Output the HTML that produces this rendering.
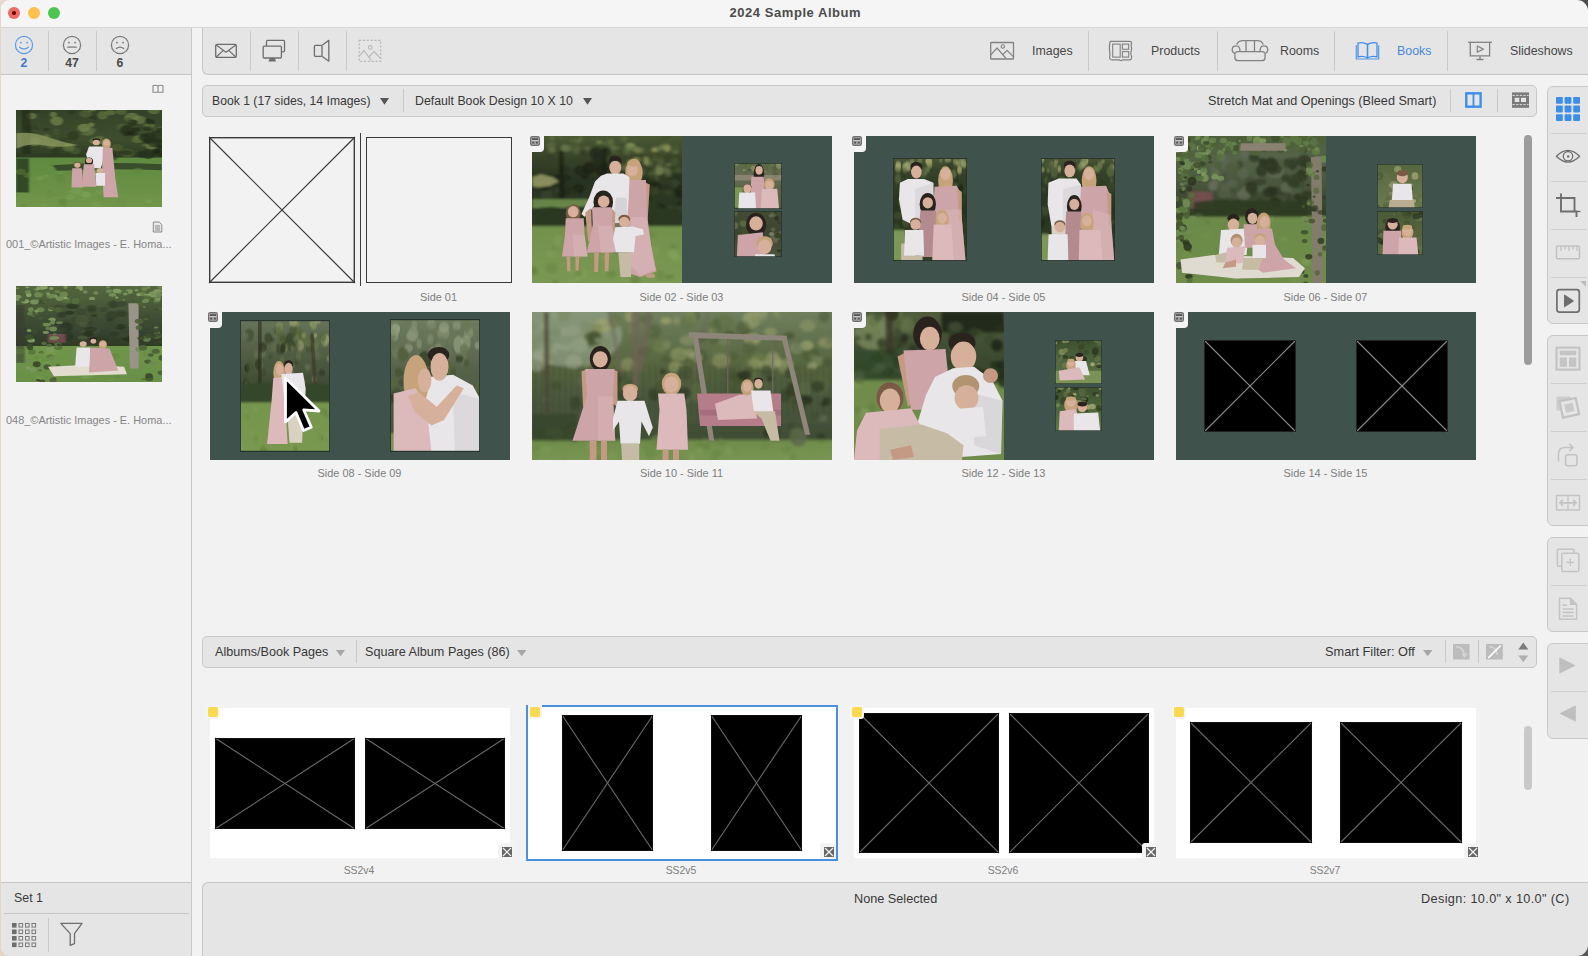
<!DOCTYPE html>
<html><head><meta charset="utf-8">
<style>
*{box-sizing:border-box}
html,body{margin:0;padding:0}
body{width:1588px;height:956px;position:relative;overflow:hidden;background:#f2f2f2;font-family:"Liberation Sans",sans-serif;color:#4a4a4a}
.a{position:absolute}
.t{position:absolute;white-space:nowrap;line-height:1}
.sep{position:absolute;width:1px;background:#c9c9c9}
.hs{position:absolute;height:1px;background:#cfcfcf}
svg{position:absolute;overflow:visible}
</style></head><body>
<!-- title bar -->
<div class="a" style="left:0;top:0;width:1588px;height:27px;background:#f5f5f5"></div>
<div class="a" style="left:0;top:27px;width:1588px;height:1px;background:#d6d6d6"></div>
<div class="a" style="left:7.7px;top:6.6px;width:12.4px;height:12.4px;border-radius:50%;background:#ee6a66"></div>
<div class="a" style="left:12.2px;top:11px;width:3.6px;height:3.6px;border-radius:50%;background:#6b0a05"></div>
<div class="a" style="left:27.8px;top:6.6px;width:12.4px;height:12.4px;border-radius:50%;background:#fcc14e"></div>
<div class="a" style="left:47.8px;top:6.6px;width:12.4px;height:12.4px;border-radius:50%;background:#4cc553"></div>
<div class="t" style="left:729.5px;top:6px;font-size:13px;letter-spacing:0.55px;font-weight:bold;color:#4b4b4b">2024 Sample Album</div>

<!-- left panel -->
<div class="a" style="left:0;top:28px;width:191px;height:47px;background:#e5e5e5;border-bottom:1px solid #c6c6c6"></div>
<div class="a" style="left:191px;top:28px;width:1px;height:928px;background:#c8c8c8"></div>
<div class="sep" style="left:48px;top:31px;height:40px"></div>
<div class="sep" style="left:96px;top:31px;height:40px"></div>

<div class="a" style="left:0;top:882px;width:191px;height:74px;background:#e5e5e5;border-top:1px solid #c6c6c6;border-bottom-left-radius:10px"></div>
<div class="hs" style="left:4px;top:913px;width:185px;background:#c6c6c6"></div>
<div class="sep" style="left:48px;top:918px;height:34px"></div>
<div class="t" style="left:14px;top:892px;font-size:12.4px;color:#383838">Set 1</div>

<!-- main toolbar -->
<div class="a" style="left:202px;top:28px;width:1386px;height:47px;background:#e5e5e5;border-left:1px solid #c6c6c6;border-bottom:1px solid #c6c6c6;border-bottom-left-radius:6px"></div>
<div class="sep" style="left:250px;top:31px;height:40px"></div>
<div class="sep" style="left:298px;top:31px;height:40px"></div>
<div class="sep" style="left:346px;top:31px;height:40px"></div>
<div class="sep" style="left:1088px;top:31px;height:40px"></div>
<div class="sep" style="left:1217px;top:31px;height:40px"></div>
<div class="sep" style="left:1334px;top:31px;height:40px"></div>
<div class="sep" style="left:1447px;top:31px;height:40px"></div>
<div class="t" style="left:1032px;top:45px;font-size:12.4px;color:#474747">Images</div>
<div class="t" style="left:1151px;top:45px;font-size:12.4px;color:#474747">Products</div>
<div class="t" style="left:1280px;top:45px;font-size:12.4px;color:#474747">Rooms</div>
<div class="t" style="left:1397px;top:45px;font-size:12.4px;color:#4a88d6">Books</div>
<div class="t" style="left:1510px;top:45px;font-size:12.4px;color:#474747">Slideshows</div>

<!-- second bar -->
<div class="a" style="left:202px;top:85px;width:1335px;height:32px;background:#e5e5e5;border:1px solid #c8c8c8;border-radius:5px"></div>
<div class="sep" style="left:403px;top:89px;height:23px"></div>
<div class="sep" style="left:1450px;top:89px;height:23px"></div>
<div class="sep" style="left:1497px;top:89px;height:23px"></div>
<div class="t" style="left:212px;top:95px;font-size:12.2px;color:#383838">Book 1 (17 sides, 14 Images)</div>
<div class="t" style="left:415px;top:95px;font-size:12.3px;color:#383838">Default Book Design 10 X 10</div>
<div class="t" style="left:1208px;top:95px;font-size:12.65px;color:#383838">Stretch Mat and Openings (Bleed Smart)</div>

<!-- section bar 2 -->
<div class="a" style="left:202px;top:636px;width:1335px;height:32px;background:#e5e5e5;border:1px solid #c8c8c8;border-radius:5px"></div>
<div class="sep" style="left:356px;top:640px;height:23px"></div>
<div class="sep" style="left:1445px;top:640px;height:23px"></div>
<div class="sep" style="left:1478px;top:640px;height:23px"></div>
<div class="t" style="left:215px;top:646px;font-size:12.6px;color:#383838">Albums/Book Pages</div>
<div class="t" style="left:365px;top:646px;font-size:12.65px;color:#383838">Square Album Pages (86)</div>
<div class="t" style="left:1325px;top:646px;font-size:12.75px;color:#383838">Smart Filter: Off</div>

<!-- status bar -->
<div class="a" style="left:202px;top:882px;width:1386px;height:74px;background:#e5e5e5;border-left:1px solid #c6c6c6;border-top:1px solid #c6c6c6;border-top-left-radius:6px"></div>
<div class="t" style="left:854px;top:893px;font-size:12.7px;color:#383838">None Selected</div>
<div class="t" style="left:1421px;top:893px;font-size:12.7px;letter-spacing:0.36px;color:#383838">Design: 10.0" x 10.0" (C)</div>

<!-- right panel groups -->
<div class="a" style="left:1547px;top:86px;width:50px;height:238px;background:#e5e5e5;border:1px solid #c8c8c8;border-radius:6px"></div>
<div class="a" style="left:1547px;top:335px;width:50px;height:191px;background:#e5e5e5;border:1px solid #c8c8c8;border-radius:6px"></div>
<div class="a" style="left:1547px;top:537px;width:50px;height:95px;background:#e5e5e5;border:1px solid #c8c8c8;border-radius:6px"></div>
<div class="a" style="left:1547px;top:643px;width:50px;height:96px;background:#e5e5e5;border:1px solid #c8c8c8;border-radius:6px"></div>
<div class="hs" style="left:1551px;top:133px;width:36px"></div>
<div class="hs" style="left:1551px;top:181px;width:36px"></div>
<div class="hs" style="left:1551px;top:229px;width:36px"></div>
<div class="hs" style="left:1551px;top:277px;width:36px"></div>
<div class="hs" style="left:1551px;top:383px;width:36px"></div>
<div class="hs" style="left:1551px;top:431px;width:36px"></div>
<div class="hs" style="left:1551px;top:479px;width:36px"></div>
<div class="hs" style="left:1551px;top:585px;width:36px"></div>
<div class="hs" style="left:1551px;top:691px;width:36px"></div>

<!-- scrollbars -->
<div class="a" style="left:1524px;top:135px;width:8px;height:230px;border-radius:4px;background:#9c9c9c"></div>
<div class="a" style="left:1524px;top:726px;width:8px;height:64px;border-radius:4px;background:#c9c9c9"></div>

<svg style="left:209px;top:137px" width="146" height="146" viewBox="0 0 146 146"><rect x="0" y="0" width="146" height="146" fill="none"/><line x1="0" y1="0" x2="146" y2="146" stroke="#3a3a3a" stroke-width="1.2"/><line x1="146" y1="0" x2="0" y2="146" stroke="#3a3a3a" stroke-width="1.2"/><rect x="0.7" y="0.7" width="144.6" height="144.6" fill="none" stroke="#3a3a3a" stroke-width="1.4"/></svg>
<div class="a" style="left:360px;top:133px;width:1.2px;height:153px;background:#3c3c3c"></div>
<div class="a" style="left:366px;top:137px;width:146px;height:146px;border:1.4px solid #3a3a3a"></div>
<div class="t" style="left:338.5px;top:292px;width:200px;text-align:center;font-size:10.95px;color:#7e7e7e">Side 01</div>
<div class="a" style="left:532px;top:136px;width:300px;height:147px;background:#3f524c"></div>
<svg style="left:532px;top:136px;overflow:hidden" width="150" height="147" viewBox="0 0 100 100" preserveAspectRatio="none"><defs><filter id="p2" x="-5%" y="-5%" width="110%" height="110%"><feGaussianBlur stdDeviation="0.9"/></filter><filter id="p3" x="-5%" y="-5%" width="110%" height="110%"><feGaussianBlur stdDeviation="0.35"/></filter></defs><rect x="0" y="0" width="100" height="100" fill="url(#p1)"/><g filter="url(#p2)"><defs><linearGradient id="p1" x1="0" y1="0" x2="0" y2="1"><stop offset="0" stop-color="#4a5834"/><stop offset="0.12" stop-color="#3a4629"/><stop offset="0.3" stop-color="#283120"/><stop offset="0.45" stop-color="#2a3521"/><stop offset="0.5" stop-color="#2d3b25"/><stop offset="0.6" stop-color="#33412a"/><stop offset="0.62" stop-color="#73914d"/><stop offset="1" stop-color="#7a9852"/></linearGradient></defs><rect x="0" y="0" width="100" height="100" fill="url(#p1)"/><ellipse cx="22.1" cy="8.5" rx="3.0" ry="2.3" fill="#66754a" opacity="0.8"/><ellipse cx="52.5" cy="3.8" rx="1.9" ry="1.7" fill="#6f7e4c" opacity="0.66"/><ellipse cx="64.7" cy="7.7" rx="2.9" ry="2.2" fill="#6f7e4c" opacity="0.59"/><ellipse cx="95.1" cy="9.0" rx="1.6" ry="1.0" fill="#44532f" opacity="0.5"/><ellipse cx="89.3" cy="6.9" rx="3.4" ry="3.6" fill="#44532f" opacity="0.59"/><ellipse cx="49.4" cy="5.0" rx="2.0" ry="1.5" fill="#56663d" opacity="0.8"/><ellipse cx="95.7" cy="9.3" rx="2.3" ry="2.7" fill="#8a9a5a" opacity="0.54"/><ellipse cx="66.6" cy="7.2" rx="2.1" ry="2.2" fill="#8a9a5a" opacity="0.89"/><ellipse cx="55.1" cy="9.7" rx="2.5" ry="2.9" fill="#56663d" opacity="0.62"/><ellipse cx="62.9" cy="8.8" rx="3.2" ry="2.9" fill="#44532f" opacity="0.84"/><ellipse cx="53.2" cy="7.4" rx="2.3" ry="2.3" fill="#5f6f45" opacity="0.72"/><ellipse cx="73.3" cy="6.7" rx="2.2" ry="1.9" fill="#44532f" opacity="0.54"/><ellipse cx="24.7" cy="8.4" rx="2.2" ry="2.3" fill="#66754a" opacity="0.52"/><ellipse cx="73.3" cy="9.8" rx="2.7" ry="2.2" fill="#56663d" opacity="0.57"/><ellipse cx="30.4" cy="0.1" rx="1.9" ry="2.2" fill="#44532f" opacity="0.59"/><ellipse cx="56.2" cy="9.5" rx="2.7" ry="2.3" fill="#5f6f45" opacity="0.76"/><ellipse cx="64.8" cy="7.3" rx="2.3" ry="2.5" fill="#8a9a5a" opacity="0.7"/><ellipse cx="21.6" cy="7.8" rx="1.9" ry="2.2" fill="#66754a" opacity="0.85"/><ellipse cx="61.3" cy="2.0" rx="2.5" ry="2.2" fill="#5f6f45" opacity="0.67"/><ellipse cx="10.1" cy="5.4" rx="3.1" ry="2.5" fill="#44532f" opacity="0.51"/><ellipse cx="30.7" cy="1.8" rx="2.7" ry="3.0" fill="#6f7e4c" opacity="0.72"/><ellipse cx="86.6" cy="9.3" rx="1.6" ry="1.8" fill="#4a5a35" opacity="0.53"/><ellipse cx="11.5" cy="0.1" rx="3.0" ry="2.3" fill="#4a5a35" opacity="0.82"/><ellipse cx="26.6" cy="2.9" rx="1.8" ry="1.4" fill="#56663d" opacity="0.76"/><ellipse cx="68.3" cy="2.9" rx="2.9" ry="2.6" fill="#4a5a35" opacity="0.51"/><ellipse cx="44.8" cy="4.2" rx="1.9" ry="1.2" fill="#8a9a5a" opacity="0.7"/><ellipse cx="28.8" cy="6.1" rx="3.1" ry="1.9" fill="#4a5a35" opacity="0.66"/><ellipse cx="13.2" cy="9.6" rx="2.4" ry="2.2" fill="#66754a" opacity="0.72"/><ellipse cx="29.9" cy="9.8" rx="3.1" ry="2.8" fill="#56663d" opacity="0.71"/><ellipse cx="12.8" cy="6.7" rx="3.1" ry="3.1" fill="#66754a" opacity="0.52"/><ellipse cx="36.9" cy="9.7" rx="3.3" ry="2.5" fill="#6f7e4c" opacity="0.53"/><ellipse cx="92.5" cy="3.0" rx="1.8" ry="1.7" fill="#56663d" opacity="0.5"/><ellipse cx="89.1" cy="0.4" rx="3.1" ry="3.7" fill="#44532f" opacity="0.68"/><ellipse cx="84.5" cy="8.7" rx="3.1" ry="3.0" fill="#4a5a35" opacity="0.65"/><ellipse cx="41.2" cy="2.1" rx="2.8" ry="2.4" fill="#56663d" opacity="0.7"/><ellipse cx="94.4" cy="3.9" rx="2.5" ry="1.5" fill="#44532f" opacity="0.85"/><ellipse cx="91.0" cy="0.2" rx="1.9" ry="1.5" fill="#44532f" opacity="0.81"/><ellipse cx="40.5" cy="2.1" rx="2.8" ry="3.1" fill="#44532f" opacity="0.64"/><ellipse cx="89.4" cy="6.9" rx="2.5" ry="2.9" fill="#56663d" opacity="0.53"/><ellipse cx="13.6" cy="1.3" rx="1.8" ry="1.7" fill="#5f6f45" opacity="0.8"/><ellipse cx="64.0" cy="8.4" rx="2.2" ry="1.8" fill="#5f6f45" opacity="0.59"/><ellipse cx="95.0" cy="7.8" rx="2.9" ry="2.6" fill="#44532f" opacity="0.72"/><ellipse cx="19.4" cy="0.4" rx="1.6" ry="1.8" fill="#6f7e4c" opacity="0.56"/><ellipse cx="21.3" cy="1.1" rx="2.7" ry="3.1" fill="#4a5a35" opacity="0.73"/><ellipse cx="30.1" cy="0.8" rx="2.0" ry="2.3" fill="#44532f" opacity="0.71"/><ellipse cx="90.7" cy="26.1" rx="2.5" ry="1.9" fill="#5f6f45" opacity="0.56"/><ellipse cx="81.4" cy="29.2" rx="3.0" ry="2.4" fill="#5f6f45" opacity="0.61"/><ellipse cx="91.1" cy="24.1" rx="2.3" ry="2.1" fill="#5f6f45" opacity="0.58"/><ellipse cx="79.9" cy="25.7" rx="2.0" ry="2.2" fill="#5f6f45" opacity="0.84"/><ellipse cx="70.1" cy="10.0" rx="3.1" ry="3.4" fill="#3a4629" opacity="0.78"/><ellipse cx="89.0" cy="23.4" rx="3.1" ry="2.0" fill="#5f6f45" opacity="0.74"/><ellipse cx="64.0" cy="22.4" rx="2.2" ry="2.6" fill="#46552f" opacity="0.71"/><ellipse cx="84.0" cy="23.4" rx="3.1" ry="3.7" fill="#5f6f45" opacity="0.75"/><ellipse cx="66.0" cy="17.5" rx="2.2" ry="1.5" fill="#9aa060" opacity="0.85"/><ellipse cx="78.6" cy="10.6" rx="2.8" ry="2.2" fill="#46552f" opacity="0.65"/><ellipse cx="65.0" cy="21.1" rx="3.2" ry="3.6" fill="#9aa060" opacity="0.51"/><ellipse cx="90.0" cy="8.4" rx="2.2" ry="2.5" fill="#9aa060" opacity="0.75"/><ellipse cx="71.9" cy="19.6" rx="2.1" ry="2.1" fill="#3a4629" opacity="0.52"/><ellipse cx="74.0" cy="24.4" rx="2.3" ry="2.7" fill="#46552f" opacity="0.82"/><ellipse cx="59.0" cy="21.3" rx="3.2" ry="2.8" fill="#3a4629" opacity="0.82"/><ellipse cx="78.3" cy="18.4" rx="2.9" ry="2.5" fill="#5f6f45" opacity="0.58"/><ellipse cx="85.6" cy="17.9" rx="2.9" ry="3.5" fill="#5f6f45" opacity="0.51"/><ellipse cx="60.6" cy="21.0" rx="2.2" ry="1.7" fill="#3a4629" opacity="0.63"/><ellipse cx="78.3" cy="29.6" rx="3.4" ry="2.9" fill="#3a4629" opacity="0.61"/><ellipse cx="76.4" cy="18.5" rx="1.8" ry="1.5" fill="#7d8a58" opacity="0.75"/><ellipse cx="76.0" cy="16.1" rx="1.8" ry="2.1" fill="#9aa060" opacity="0.65"/><ellipse cx="82.1" cy="15.0" rx="2.3" ry="2.1" fill="#46552f" opacity="0.87"/><ellipse cx="68.1" cy="8.1" rx="2.4" ry="1.5" fill="#5f6f45" opacity="0.74"/><ellipse cx="80.6" cy="23.0" rx="2.2" ry="2.7" fill="#3a4629" opacity="0.84"/><ellipse cx="57.8" cy="12.2" rx="3.4" ry="3.3" fill="#3a4629" opacity="0.82"/><ellipse cx="91.0" cy="19.5" rx="1.7" ry="1.2" fill="#7d8a58" opacity="0.64"/><ellipse cx="61.5" cy="21.8" rx="2.7" ry="1.9" fill="#5f6f45" opacity="0.79"/><ellipse cx="57.0" cy="18.5" rx="2.9" ry="1.9" fill="#5f6f45" opacity="0.78"/><ellipse cx="60.7" cy="26.3" rx="1.7" ry="1.6" fill="#7d8a58" opacity="0.86"/><ellipse cx="95.2" cy="17.9" rx="2.9" ry="3.1" fill="#46552f" opacity="0.83"/><ellipse cx="63.5" cy="28.6" rx="2.5" ry="2.1" fill="#9aa060" opacity="0.61"/><ellipse cx="87.1" cy="9.4" rx="3.1" ry="3.7" fill="#7d8a58" opacity="0.64"/><ellipse cx="56.5" cy="19.1" rx="2.1" ry="1.6" fill="#3a4629" opacity="0.67"/><ellipse cx="96.5" cy="8.7" rx="1.7" ry="1.8" fill="#46552f" opacity="0.71"/><ellipse cx="56.5" cy="11.8" rx="2.2" ry="1.4" fill="#46552f" opacity="0.78"/><ellipse cx="70.5" cy="9.7" rx="3.0" ry="2.0" fill="#9aa060" opacity="0.55"/><ellipse cx="88.4" cy="22.1" rx="1.8" ry="1.4" fill="#5f6f45" opacity="0.57"/><ellipse cx="86.9" cy="12.0" rx="3.0" ry="2.7" fill="#3a4629" opacity="0.82"/><ellipse cx="97.5" cy="23.3" rx="2.9" ry="2.0" fill="#46552f" opacity="0.8"/><ellipse cx="99.7" cy="20.3" rx="1.5" ry="1.6" fill="#3a4629" opacity="0.58"/><ellipse cx="69.6" cy="16.4" rx="2.4" ry="2.0" fill="#9aa060" opacity="0.72"/><ellipse cx="84.8" cy="23.8" rx="2.8" ry="3.0" fill="#7d8a58" opacity="0.61"/><ellipse cx="63.3" cy="11.3" rx="2.9" ry="2.0" fill="#5f6f45" opacity="0.52"/><ellipse cx="56.8" cy="24.7" rx="1.7" ry="1.8" fill="#5f6f45" opacity="0.77"/><ellipse cx="81.8" cy="9.3" rx="1.9" ry="1.6" fill="#9aa060" opacity="0.78"/><ellipse cx="18.5" cy="28.5" rx="3.1" ry="3.0" fill="#1c2316" opacity="0.81"/><ellipse cx="48.0" cy="26.0" rx="3.7" ry="2.6" fill="#34402a" opacity="0.79"/><ellipse cx="32.2" cy="23.5" rx="4.6" ry="3.4" fill="#232b1b" opacity="0.9"/><ellipse cx="31.0" cy="35.2" rx="4.0" ry="2.6" fill="#1c2316" opacity="0.71"/><ellipse cx="9.4" cy="39.4" rx="3.4" ry="3.5" fill="#34402a" opacity="0.85"/><ellipse cx="48.5" cy="23.4" rx="4.4" ry="3.8" fill="#232b1b" opacity="0.91"/><ellipse cx="12.3" cy="14.6" rx="2.7" ry="3.1" fill="#34402a" opacity="0.87"/><ellipse cx="45.6" cy="24.3" rx="4.5" ry="4.3" fill="#34402a" opacity="0.8"/><ellipse cx="47.8" cy="33.2" rx="4.8" ry="5.3" fill="#232b1b" opacity="0.84"/><ellipse cx="22.4" cy="28.4" rx="3.7" ry="2.5" fill="#232b1b" opacity="0.82"/><ellipse cx="51.5" cy="19.1" rx="2.4" ry="2.1" fill="#34402a" opacity="0.63"/><ellipse cx="43.2" cy="24.0" rx="2.5" ry="1.9" fill="#34402a" opacity="0.91"/><ellipse cx="9.9" cy="30.9" rx="2.1" ry="2.2" fill="#2a3320" opacity="0.79"/><ellipse cx="48.6" cy="19.5" rx="2.7" ry="1.7" fill="#1c2316" opacity="0.63"/><ellipse cx="34.4" cy="11.1" rx="2.6" ry="2.2" fill="#2a3320" opacity="0.65"/><ellipse cx="9.9" cy="39.5" rx="2.9" ry="3.5" fill="#34402a" opacity="0.73"/><ellipse cx="46.3" cy="23.1" rx="4.6" ry="4.6" fill="#1c2316" opacity="0.82"/><ellipse cx="49.4" cy="27.2" rx="3.3" ry="3.4" fill="#232b1b" opacity="0.93"/><ellipse cx="27.2" cy="18.8" rx="2.9" ry="2.3" fill="#34402a" opacity="0.95"/><ellipse cx="21.9" cy="22.8" rx="3.8" ry="2.6" fill="#2a3320" opacity="0.76"/><ellipse cx="37.9" cy="22.0" rx="4.1" ry="4.3" fill="#1c2316" opacity="0.81"/><ellipse cx="50.0" cy="10.7" rx="3.1" ry="3.0" fill="#2a3320" opacity="0.81"/><ellipse cx="22.1" cy="22.4" rx="2.9" ry="2.4" fill="#2a3320" opacity="0.71"/><ellipse cx="24.6" cy="36.3" rx="2.1" ry="2.0" fill="#232b1b" opacity="0.71"/><ellipse cx="17.8" cy="37.3" rx="2.7" ry="1.9" fill="#34402a" opacity="0.83"/><ellipse cx="12.3" cy="30.4" rx="4.8" ry="4.9" fill="#232b1b" opacity="0.75"/><ellipse cx="45.6" cy="15.8" rx="3.0" ry="3.0" fill="#34402a" opacity="0.69"/><ellipse cx="42.6" cy="11.2" rx="4.9" ry="3.8" fill="#232b1b" opacity="0.9"/><ellipse cx="23.0" cy="38.2" rx="2.3" ry="2.2" fill="#232b1b" opacity="0.75"/><ellipse cx="30.8" cy="38.9" rx="3.4" ry="3.3" fill="#2a3320" opacity="0.75"/><ellipse cx="26.0" cy="41.3" rx="2.5" ry="1.5" fill="#34402a" opacity="0.8"/><ellipse cx="51.4" cy="34.4" rx="2.1" ry="1.8" fill="#2a3320" opacity="0.79"/><ellipse cx="47.1" cy="39.3" rx="4.6" ry="5.4" fill="#1c2316" opacity="0.88"/><ellipse cx="10.0" cy="40.7" rx="4.1" ry="4.7" fill="#34402a" opacity="0.8"/><ellipse cx="8.6" cy="35.3" rx="2.5" ry="2.0" fill="#1c2316" opacity="0.78"/><ellipse cx="26.2" cy="41.9" rx="3.8" ry="3.1" fill="#2a3320" opacity="0.94"/><ellipse cx="31.8" cy="37.6" rx="2.2" ry="1.6" fill="#1c2316" opacity="0.79"/><ellipse cx="43.9" cy="15.8" rx="4.4" ry="5.0" fill="#232b1b" opacity="0.89"/><ellipse cx="8.3" cy="31.4" rx="4.6" ry="2.9" fill="#2a3320" opacity="0.69"/><ellipse cx="35.2" cy="27.7" rx="2.2" ry="1.7" fill="#1c2316" opacity="0.9"/><polygon points="18,10 21,10 22,44 18,44" fill="#1a1f14" opacity="0.8"/><polygon points="47,8 50,8 50,30 47,30" fill="#1a1f14" opacity="0.7"/><ellipse cx="69.4" cy="29.1" rx="3.2" ry="2.2" fill="#26301d" opacity="0.61"/><ellipse cx="82.0" cy="34.7" rx="5.0" ry="3.2" fill="#1f2718" opacity="0.79"/><ellipse cx="71.1" cy="31.2" rx="2.3" ry="1.7" fill="#26301d" opacity="0.89"/><ellipse cx="92.3" cy="50.0" rx="2.6" ry="2.0" fill="#1e2618" opacity="0.9"/><ellipse cx="98.4" cy="51.5" rx="3.1" ry="3.5" fill="#36442a" opacity="0.84"/><ellipse cx="80.2" cy="31.3" rx="3.4" ry="2.2" fill="#1f2718" opacity="0.89"/><ellipse cx="60.3" cy="34.8" rx="4.1" ry="3.2" fill="#1f2718" opacity="0.67"/><ellipse cx="76.9" cy="34.6" rx="3.4" ry="2.5" fill="#36442a" opacity="0.88"/><ellipse cx="61.7" cy="27.4" rx="3.9" ry="3.0" fill="#1f2718" opacity="0.83"/><ellipse cx="88.0" cy="30.4" rx="4.0" ry="2.6" fill="#2f3b23" opacity="0.82"/><ellipse cx="77.6" cy="31.5" rx="3.3" ry="3.2" fill="#1e2618" opacity="0.8"/><ellipse cx="96.2" cy="29.0" rx="2.2" ry="1.6" fill="#1f2718" opacity="0.82"/><ellipse cx="69.5" cy="35.9" rx="2.5" ry="2.2" fill="#26301d" opacity="0.72"/><ellipse cx="63.3" cy="54.9" rx="2.9" ry="2.9" fill="#36442a" opacity="0.61"/><ellipse cx="71.6" cy="55.0" rx="4.3" ry="3.7" fill="#1f2718" opacity="0.84"/><ellipse cx="63.1" cy="44.5" rx="4.7" ry="3.6" fill="#36442a" opacity="0.73"/><ellipse cx="98.5" cy="35.9" rx="2.0" ry="1.3" fill="#2f3b23" opacity="0.73"/><ellipse cx="92.2" cy="55.9" rx="3.7" ry="3.2" fill="#2f3b23" opacity="0.75"/><ellipse cx="68.3" cy="27.8" rx="2.2" ry="1.5" fill="#1e2618" opacity="0.94"/><ellipse cx="84.3" cy="42.4" rx="3.7" ry="3.0" fill="#26301d" opacity="0.64"/><ellipse cx="81.2" cy="49.2" rx="3.2" ry="3.8" fill="#3d4b2f" opacity="0.67"/><ellipse cx="77.6" cy="40.8" rx="2.7" ry="2.3" fill="#1e2618" opacity="0.91"/><ellipse cx="93.2" cy="41.0" rx="2.1" ry="1.6" fill="#2f3b23" opacity="0.78"/><ellipse cx="90.9" cy="38.5" rx="2.8" ry="2.2" fill="#36442a" opacity="0.8"/><ellipse cx="99.6" cy="38.1" rx="4.7" ry="4.7" fill="#1e2618" opacity="0.86"/><ellipse cx="79.8" cy="28.8" rx="2.6" ry="3.0" fill="#2f3b23" opacity="0.72"/><ellipse cx="86.3" cy="50.0" rx="3.9" ry="4.3" fill="#1f2718" opacity="0.68"/><ellipse cx="92.1" cy="50.0" rx="3.0" ry="2.5" fill="#3d4b2f" opacity="0.63"/><ellipse cx="98.8" cy="54.9" rx="4.0" ry="2.5" fill="#1f2718" opacity="0.64"/><ellipse cx="98.7" cy="46.0" rx="2.2" ry="1.5" fill="#1e2618" opacity="0.76"/><ellipse cx="78.9" cy="38.1" rx="3.2" ry="3.4" fill="#2f3b23" opacity="0.92"/><ellipse cx="60.5" cy="52.3" rx="2.3" ry="2.5" fill="#3d4b2f" opacity="0.91"/><ellipse cx="82.0" cy="52.4" rx="2.6" ry="2.6" fill="#36442a" opacity="0.89"/><ellipse cx="82.5" cy="49.5" rx="4.7" ry="4.1" fill="#26301d" opacity="0.61"/><ellipse cx="83.8" cy="40.7" rx="4.6" ry="4.4" fill="#2f3b23" opacity="0.61"/><ellipse cx="63.2" cy="52.4" rx="4.7" ry="3.7" fill="#36442a" opacity="0.89"/><ellipse cx="63.4" cy="42.3" rx="3.1" ry="3.4" fill="#36442a" opacity="0.74"/><ellipse cx="90.3" cy="51.7" rx="3.2" ry="2.1" fill="#1f2718" opacity="0.88"/><ellipse cx="74.6" cy="56.0" rx="3.2" ry="3.3" fill="#3d4b2f" opacity="0.62"/><ellipse cx="95.3" cy="31.9" rx="2.9" ry="3.2" fill="#3d4b2f" opacity="0.64"/><ellipse cx="82.3" cy="37.1" rx="2.5" ry="2.5" fill="#36442a" opacity="0.77"/><ellipse cx="73.5" cy="42.3" rx="4.7" ry="4.8" fill="#26301d" opacity="0.83"/><ellipse cx="64.8" cy="29.3" rx="4.4" ry="4.2" fill="#1f2718" opacity="0.63"/><ellipse cx="69.8" cy="51.4" rx="3.1" ry="3.3" fill="#1e2618" opacity="0.6"/><ellipse cx="62.1" cy="53.2" rx="3.6" ry="4.2" fill="#1f2718" opacity="0.71"/><polygon points="0,28 6,26 14,28 18,31 12,34 4,35 0,34" fill="#a1a46c" opacity="0.8"/><rect x="0" y="43" width="38" height="6" fill="#6a8a4c" opacity="0.95"/><path d="M0 50 Q10 47 20 49 Q35 47 50 49 Q75 48 100 50 V61 H0 Z" fill="#2b3923" opacity="0.95"/><ellipse cx="62.3" cy="90.2" rx="3.5" ry="4.1" fill="#86a55c" opacity="0.66"/><ellipse cx="53.0" cy="93.9" rx="3.4" ry="2.6" fill="#6a8646" opacity="0.76"/><ellipse cx="11.3" cy="79.8" rx="2.1" ry="2.0" fill="#86a05d" opacity="0.5"/><ellipse cx="73.1" cy="77.5" rx="2.0" ry="2.2" fill="#647f42" opacity="0.46"/><ellipse cx="79.7" cy="67.3" rx="3.0" ry="2.1" fill="#6a8646" opacity="0.79"/><ellipse cx="0.5" cy="91.4" rx="3.9" ry="2.7" fill="#74904e" opacity="0.52"/><ellipse cx="96.1" cy="82.5" rx="3.2" ry="2.3" fill="#86a55c" opacity="0.48"/><ellipse cx="96.5" cy="76.6" rx="1.6" ry="1.3" fill="#74904e" opacity="0.51"/><ellipse cx="33.2" cy="93.1" rx="3.0" ry="2.8" fill="#86a55c" opacity="0.54"/><ellipse cx="31.0" cy="93.1" rx="2.7" ry="2.1" fill="#647f42" opacity="0.59"/><ellipse cx="17.6" cy="71.7" rx="3.8" ry="4.5" fill="#7f9a57" opacity="0.74"/><ellipse cx="1.8" cy="91.9" rx="2.4" ry="2.3" fill="#6a8646" opacity="0.58"/><ellipse cx="70.8" cy="85.7" rx="3.9" ry="2.6" fill="#74904e" opacity="0.77"/><ellipse cx="94.2" cy="75.1" rx="2.4" ry="2.2" fill="#647f42" opacity="0.44"/><ellipse cx="74.8" cy="92.3" rx="3.6" ry="2.3" fill="#6a8646" opacity="0.48"/><ellipse cx="51.3" cy="75.8" rx="1.9" ry="1.4" fill="#86a55c" opacity="0.62"/><ellipse cx="31.2" cy="74.0" rx="1.9" ry="1.3" fill="#74904e" opacity="0.69"/><ellipse cx="30.9" cy="80.4" rx="3.3" ry="2.1" fill="#86a05d" opacity="0.61"/><ellipse cx="40.6" cy="71.0" rx="3.0" ry="3.3" fill="#647f42" opacity="0.66"/><ellipse cx="14.6" cy="99.2" rx="3.1" ry="3.3" fill="#7f9a57" opacity="0.74"/><ellipse cx="13.1" cy="89.8" rx="3.9" ry="3.8" fill="#647f42" opacity="0.44"/><ellipse cx="43.5" cy="67.7" rx="3.6" ry="2.8" fill="#647f42" opacity="0.77"/><ellipse cx="62.0" cy="68.4" rx="2.8" ry="3.3" fill="#86a55c" opacity="0.69"/><ellipse cx="47.9" cy="73.1" rx="2.5" ry="1.7" fill="#647f42" opacity="0.73"/><ellipse cx="53.2" cy="68.8" rx="3.8" ry="4.3" fill="#74904e" opacity="0.44"/><ellipse cx="27.2" cy="91.7" rx="3.7" ry="3.0" fill="#7f9a57" opacity="0.68"/><ellipse cx="66.4" cy="90.9" rx="2.4" ry="2.5" fill="#7f9a57" opacity="0.73"/><ellipse cx="26.5" cy="99.3" rx="3.3" ry="3.9" fill="#7f9a57" opacity="0.66"/><ellipse cx="58.1" cy="62.4" rx="2.9" ry="2.2" fill="#86a55c" opacity="0.51"/><ellipse cx="28.9" cy="81.0" rx="3.2" ry="2.6" fill="#7f9a57" opacity="0.66"/><ellipse cx="73.8" cy="93.5" rx="2.4" ry="2.6" fill="#86a55c" opacity="0.58"/><ellipse cx="36.4" cy="74.7" rx="1.9" ry="2.2" fill="#74904e" opacity="0.73"/><ellipse cx="93.7" cy="80.1" rx="3.2" ry="3.3" fill="#86a55c" opacity="0.57"/><ellipse cx="61.7" cy="97.6" rx="2.8" ry="3.2" fill="#7f9a57" opacity="0.65"/><ellipse cx="77.5" cy="86.2" rx="3.3" ry="2.0" fill="#74904e" opacity="0.63"/><ellipse cx="62.4" cy="68.9" rx="3.4" ry="2.4" fill="#86a55c" opacity="0.42"/><ellipse cx="47.2" cy="70.6" rx="1.6" ry="1.1" fill="#7f9a57" opacity="0.79"/><ellipse cx="48.3" cy="82.8" rx="2.5" ry="2.1" fill="#86a55c" opacity="0.64"/><ellipse cx="59.0" cy="71.0" rx="3.8" ry="2.3" fill="#647f42" opacity="0.78"/><ellipse cx="85.6" cy="94.9" rx="3.2" ry="3.0" fill="#6a8646" opacity="0.62"/><ellipse cx="30.1" cy="73.2" rx="2.8" ry="3.3" fill="#7f9a57" opacity="0.78"/><ellipse cx="81.9" cy="77.9" rx="3.5" ry="3.5" fill="#7f9a57" opacity="0.59"/><ellipse cx="15.7" cy="76.5" rx="2.7" ry="1.9" fill="#74904e" opacity="0.64"/><ellipse cx="35.1" cy="96.0" rx="1.5" ry="1.0" fill="#86a05d" opacity="0.77"/><ellipse cx="53.9" cy="74.4" rx="3.7" ry="3.5" fill="#647f42" opacity="0.57"/><ellipse cx="22.6" cy="73.1" rx="3.9" ry="3.3" fill="#74904e" opacity="0.64"/><ellipse cx="26.0" cy="99.3" rx="2.7" ry="2.3" fill="#7f9a57" opacity="0.78"/><ellipse cx="30.7" cy="97.3" rx="1.9" ry="1.1" fill="#86a55c" opacity="0.65"/><ellipse cx="44.3" cy="73.1" rx="3.5" ry="3.8" fill="#6a8646" opacity="0.59"/><ellipse cx="56.0" cy="71.3" rx="2.7" ry="1.7" fill="#647f42" opacity="0.51"/><ellipse cx="15.5" cy="99.6" rx="2.2" ry="2.2" fill="#647f42" opacity="0.61"/><ellipse cx="86.3" cy="95.5" rx="3.7" ry="2.3" fill="#74904e" opacity="0.52"/><ellipse cx="53.3" cy="74.8" rx="2.2" ry="2.1" fill="#647f42" opacity="0.54"/><ellipse cx="68.2" cy="92.9" rx="1.8" ry="1.1" fill="#86a05d" opacity="0.58"/><ellipse cx="91.7" cy="95.7" rx="2.9" ry="1.7" fill="#647f42" opacity="0.64"/><ellipse cx="68.9" cy="98.2" rx="3.1" ry="3.5" fill="#647f42" opacity="0.59"/><ellipse cx="68.2" cy="89.3" rx="3.7" ry="3.3" fill="#6a8646" opacity="0.52"/><ellipse cx="0.3" cy="91.6" rx="3.0" ry="2.9" fill="#647f42" opacity="0.76"/><ellipse cx="14.3" cy="80.2" rx="2.9" ry="2.6" fill="#7f9a57" opacity="0.62"/><ellipse cx="42.6" cy="82.6" rx="1.6" ry="1.7" fill="#7f9a57" opacity="0.73"/></g><g filter="url(#p3)"><ellipse cx="68" cy="25" rx="5.8" ry="9.5" fill="#c7a37c" opacity="1"/><ellipse cx="67" cy="23" rx="3.5" ry="4.2" fill="#d6b09a" opacity="1"/><ellipse cx="67.5" cy="18.5" rx="3.8" ry="2.2" fill="#c7a37c" opacity="1"/><polygon points="74,31 78.5,33 77,59 73.5,60" fill="#c49a84" opacity="1"/><polygon points="62.5,30 76,30 76.5,52 79.5,75 83,92 72,96 64,93 63.5,52" fill="#cda4a7" opacity="1"/><polygon points="66,55 76,55 80,78 82,91 72,95 66,88" fill="#dcb9bb" opacity="0.55"/><ellipse cx="79" cy="95" rx="3" ry="1.5" fill="#c49a84" opacity="1"/><ellipse cx="55.5" cy="21.5" rx="4" ry="4.6" fill="#d6b09a" opacity="1"/><path d="M51 19 Q51 13 55.5 13.5 Q60 13.5 60 19 Q58 16.5 55.5 17 Q53 16.5 51 19 Z" fill="#2a211f" opacity="1"/><polygon points="46,27 50,25.5 61,25.5 65,28 64.5,42 63.5,59 54,59.5 50.5,41 45,42 39,51 35,55 33,53 38,42 42,31" fill="#e8e6e8" opacity="1"/><polygon points="56,42 63,42 63.5,59 54,59.5" fill="#c8c6ca" opacity="0.6"/><polygon points="53,59.5 61,59.5 60,80 54,80" fill="#7a7464" opacity="0.9"/><ellipse cx="47.5" cy="45" rx="6.5" ry="8" fill="#2a211f" opacity="1"/><ellipse cx="47.8" cy="44.5" rx="3.9" ry="4.1" fill="#d6b09a" opacity="1"/><polygon points="35.5,52 39.5,49 40,70 37.5,72" fill="#c49a84" opacity="1"/><polygon points="53,49 55.5,52 55,72 52,71" fill="#c49a84" opacity="1"/><polygon points="40,48.5 53,48.5 53.5,61 56.5,79 36.5,79.5 40.5,61" fill="#cda4a7" opacity="1"/><polygon points="44,61 53.5,61 56.5,79 46,79.5" fill="#dcb9bb" opacity="0.5"/><polygon points="41.5,79 44.5,79 44,92.5 41.5,92.5" fill="#c49a84" opacity="1"/><polygon points="48.5,79 51.5,79 51,92 48.5,92" fill="#c49a84" opacity="1"/><ellipse cx="27.5" cy="52.5" rx="5" ry="6" fill="#7a5a44" opacity="1"/><ellipse cx="27.5" cy="51.5" rx="3.6" ry="3.8" fill="#d6b09a" opacity="1"/><polygon points="22.5,56 34.5,56 35,67 37,82 20,82 22,67" fill="#cda4a7" opacity="1"/><polygon points="27,67 35,67 37,82 28,82" fill="#dcb9bb" opacity="0.5"/><polygon points="23,82 25.5,82 25.5,92 23.5,92" fill="#c49a84" opacity="1"/><polygon points="29,82 31.5,82 31,91.5 29,91.5" fill="#c49a84" opacity="1"/><ellipse cx="61.5" cy="56.5" rx="3.9" ry="3" fill="#7a5a44" opacity="1"/><ellipse cx="61.5" cy="58.5" rx="3.5" ry="3.6" fill="#d6b09a" opacity="1"/><polygon points="55.5,62 67,61.5 74,63.5 74.5,67 69,68 68,79 56,79 54,70" fill="#e8e6e8" opacity="1"/><polygon points="57.5,79 66.5,79 66,96 59,96" fill="#c6bba4" opacity="1"/></g></svg>
<svg style="left:734px;top:163px;overflow:hidden" width="48" height="46" viewBox="0 0 100 100" preserveAspectRatio="none"><defs><filter id="p5" x="-5%" y="-5%" width="110%" height="110%"><feGaussianBlur stdDeviation="1"/></filter><filter id="p6" x="-5%" y="-5%" width="110%" height="110%"><feGaussianBlur stdDeviation="0.5"/></filter></defs><rect x="0" y="0" width="100" height="100" fill="url(#p4)"/><g filter="url(#p5)"><defs><linearGradient id="p4" x1="0" y1="0" x2="0" y2="1"><stop offset="0" stop-color="#5a6848"/><stop offset="0.3" stop-color="#6a6d55"/><stop offset="0.5" stop-color="#5d654a"/><stop offset="1" stop-color="#55603f"/></linearGradient></defs><rect x="0" y="0" width="100" height="100" fill="url(#p4)"/><ellipse cx="45.2" cy="14.0" rx="6.7" ry="5.9" fill="#6f7e4c" opacity="0.84"/><ellipse cx="19.0" cy="20.1" rx="4.9" ry="4.7" fill="#5f6f45" opacity="0.54"/><ellipse cx="30.3" cy="2.3" rx="6.2" ry="6.3" fill="#4a5a35" opacity="0.74"/><ellipse cx="39.6" cy="11.3" rx="6.0" ry="5.9" fill="#98a070" opacity="0.51"/><ellipse cx="52.8" cy="1.5" rx="3.8" ry="2.8" fill="#4a5a35" opacity="0.81"/><ellipse cx="32.6" cy="14.8" rx="3.8" ry="2.8" fill="#44532f" opacity="0.7"/><ellipse cx="66.2" cy="11.4" rx="4.1" ry="4.9" fill="#56663d" opacity="0.78"/><ellipse cx="31.5" cy="5.7" rx="4.2" ry="2.7" fill="#56663d" opacity="0.66"/><ellipse cx="84.7" cy="9.7" rx="6.8" ry="7.6" fill="#4a5a35" opacity="0.59"/><ellipse cx="92.7" cy="1.3" rx="4.5" ry="4.6" fill="#8e9864" opacity="0.53"/><ellipse cx="62.9" cy="19.5" rx="4.1" ry="2.7" fill="#7d8a58" opacity="0.51"/><ellipse cx="41.0" cy="23.1" rx="3.5" ry="3.6" fill="#4a5a35" opacity="0.52"/><ellipse cx="79.7" cy="4.4" rx="5.2" ry="4.5" fill="#66754a" opacity="0.89"/><ellipse cx="77.0" cy="10.5" rx="4.5" ry="3.8" fill="#66754a" opacity="0.5"/><ellipse cx="86.4" cy="24.4" rx="5.4" ry="6.4" fill="#4a5a35" opacity="0.58"/><ellipse cx="39.4" cy="21.4" rx="5.6" ry="3.7" fill="#5f6f45" opacity="0.59"/><ellipse cx="25.8" cy="19.3" rx="4.3" ry="3.4" fill="#56663d" opacity="0.53"/><ellipse cx="20.9" cy="15.9" rx="3.1" ry="2.5" fill="#98a070" opacity="0.68"/><ellipse cx="95.9" cy="12.1" rx="5.3" ry="5.9" fill="#5f6f45" opacity="0.75"/><ellipse cx="31.1" cy="5.7" rx="5.4" ry="5.6" fill="#5f6f45" opacity="0.8"/><ellipse cx="94.0" cy="4.9" rx="6.8" ry="7.7" fill="#98a070" opacity="0.53"/><ellipse cx="4.7" cy="2.7" rx="5.0" ry="3.8" fill="#8e9864" opacity="0.6"/><ellipse cx="82.4" cy="14.9" rx="4.2" ry="2.9" fill="#56663d" opacity="0.55"/><ellipse cx="47.9" cy="16.3" rx="5.5" ry="3.5" fill="#66754a" opacity="0.87"/><ellipse cx="20.4" cy="0.4" rx="4.1" ry="3.5" fill="#4a5a35" opacity="0.52"/><rect x="0" y="26" width="100" height="12" fill="#a09580" opacity="0.6"/><rect x="0" y="53" width="18" height="44" fill="#7d9a58" opacity="0.9"/></g><g filter="url(#p6)"><ellipse cx="52" cy="24" rx="11" ry="22" fill="#2a211f" opacity="1"/><ellipse cx="52.3" cy="16" rx="7.5" ry="9.5" fill="#d6b09a" opacity="1"/><polygon points="36,30 62,30 64,60 63,100 34,100 35,60" fill="#cda4a7" opacity="1"/><ellipse cx="27.7" cy="52" rx="9" ry="6" fill="#7a5a44" opacity="1"/><ellipse cx="27.7" cy="56" rx="8" ry="9" fill="#d6b09a" opacity="1"/><polygon points="11,64 44,64 46,100 9,100" fill="#e8e6e8" opacity="1"/><ellipse cx="73.5" cy="46" rx="11" ry="13" fill="#c7a37c" opacity="1"/><ellipse cx="73.5" cy="48.5" rx="8" ry="9.5" fill="#d6b09a" opacity="1"/><polygon points="58,56 90,56 94,100 56,100" fill="#dcb9bb" opacity="1"/></g><rect x="0.5" y="0.5" width="99" height="99" fill="none" stroke="#26332c" stroke-width="2.2"/></svg>
<svg style="left:734px;top:211px;overflow:hidden" width="48" height="46" viewBox="0 0 100 100" preserveAspectRatio="none"><defs><filter id="p8" x="-5%" y="-5%" width="110%" height="110%"><feGaussianBlur stdDeviation="1"/></filter><filter id="p9" x="-5%" y="-5%" width="110%" height="110%"><feGaussianBlur stdDeviation="0.5"/></filter></defs><rect x="0" y="0" width="100" height="100" fill="url(#p7)"/><g filter="url(#p8)"><defs><linearGradient id="p7" x1="0" y1="0" x2="0" y2="1"><stop offset="0" stop-color="#434c34"/><stop offset="0.5" stop-color="#3b4430"/><stop offset="1" stop-color="#4d5540"/></linearGradient></defs><rect x="0" y="0" width="100" height="100" fill="url(#p7)"/><ellipse cx="47.5" cy="65.7" rx="6.3" ry="4.3" fill="#26301d" opacity="0.85"/><ellipse cx="48.3" cy="64.3" rx="5.3" ry="5.9" fill="#3d4b2f" opacity="0.65"/><ellipse cx="66.1" cy="14.5" rx="5.2" ry="3.6" fill="#3d4b2f" opacity="0.43"/><ellipse cx="81.9" cy="7.5" rx="6.4" ry="5.2" fill="#56663d" opacity="0.76"/><ellipse cx="8.7" cy="91.9" rx="7.1" ry="7.1" fill="#3d4b2f" opacity="0.44"/><ellipse cx="98.7" cy="94.7" rx="3.6" ry="3.0" fill="#36442a" opacity="0.64"/><ellipse cx="88.2" cy="55.8" rx="7.9" ry="8.9" fill="#66754a" opacity="0.48"/><ellipse cx="81.6" cy="40.1" rx="5.1" ry="4.9" fill="#5f6f45" opacity="0.67"/><ellipse cx="54.1" cy="64.1" rx="3.4" ry="2.4" fill="#8a8470" opacity="0.52"/><ellipse cx="94.1" cy="86.6" rx="4.9" ry="3.9" fill="#1f2718" opacity="0.51"/><ellipse cx="36.3" cy="51.1" rx="7.1" ry="6.3" fill="#26301d" opacity="0.57"/><ellipse cx="85.9" cy="3.3" rx="3.1" ry="3.1" fill="#26301d" opacity="0.57"/><ellipse cx="77.2" cy="10.3" rx="5.7" ry="4.1" fill="#77735f" opacity="0.52"/><ellipse cx="43.3" cy="49.8" rx="6.0" ry="6.2" fill="#66754a" opacity="0.61"/><ellipse cx="20.9" cy="28.2" rx="5.4" ry="6.3" fill="#5f6f45" opacity="0.51"/><ellipse cx="98.9" cy="46.5" rx="5.7" ry="4.1" fill="#77735f" opacity="0.5"/><ellipse cx="60.7" cy="94.8" rx="7.6" ry="8.2" fill="#36442a" opacity="0.51"/><ellipse cx="0.9" cy="4.0" rx="6.1" ry="7.3" fill="#66754a" opacity="0.63"/><ellipse cx="2.4" cy="32.2" rx="6.9" ry="7.6" fill="#8a8470" opacity="0.45"/><ellipse cx="78.4" cy="50.2" rx="5.4" ry="4.4" fill="#8a8470" opacity="0.83"/><ellipse cx="89.4" cy="16.2" rx="4.5" ry="5.0" fill="#1f2718" opacity="0.55"/><ellipse cx="86.2" cy="64.0" rx="5.2" ry="5.6" fill="#77735f" opacity="0.53"/><ellipse cx="25.5" cy="68.3" rx="6.5" ry="4.4" fill="#1f2718" opacity="0.59"/><ellipse cx="24.1" cy="43.5" rx="7.9" ry="7.4" fill="#44532f" opacity="0.72"/><ellipse cx="93.6" cy="25.8" rx="3.2" ry="2.7" fill="#2f3b23" opacity="0.81"/><ellipse cx="78.9" cy="58.0" rx="4.7" ry="3.9" fill="#77735f" opacity="0.57"/><ellipse cx="16.1" cy="68.9" rx="3.8" ry="2.3" fill="#26301d" opacity="0.8"/><ellipse cx="91.1" cy="53.5" rx="6.9" ry="5.7" fill="#2f3b23" opacity="0.72"/><ellipse cx="18.9" cy="27.1" rx="7.0" ry="7.0" fill="#5f6f45" opacity="0.68"/><ellipse cx="12.5" cy="53.4" rx="6.5" ry="5.4" fill="#3d4b2f" opacity="0.43"/></g><g filter="url(#p9)"><ellipse cx="46" cy="30" rx="21" ry="26" fill="#2a211f" opacity="1"/><ellipse cx="46" cy="27" rx="14" ry="15.5" fill="#d6b09a" opacity="1"/><polygon points="8,52 60,46 62,100 6,100" fill="#cda4a7" opacity="1"/><ellipse cx="64" cy="70" rx="17" ry="15" fill="#c7a37c" opacity="1"/><ellipse cx="64" cy="78" rx="14" ry="16" fill="#d6b09a" opacity="1"/><polygon points="44,94 84,94 86,100 44,100" fill="#e8e6e8" opacity="1"/></g><rect x="0.5" y="0.5" width="99" height="99" fill="none" stroke="#26332c" stroke-width="2.2"/></svg>
<div class="a" style="left:531px;top:135px;width:13px;height:17px;background:#f4f4f4;border-bottom-right-radius:4px"></div>
<svg style="left:530px;top:136px" width="10" height="10" viewBox="0 0 10 10"><rect x="0.6" y="0.6" width="8.8" height="8.8" rx="1.6" fill="#a9a9a9" stroke="#6f6f6f" stroke-width="1.2"/><rect x="2" y="2.2" width="6" height="1.8" fill="#555"/><rect x="1.4" y="4.4" width="7.2" height="0.6" fill="#ddd"/><rect x="2.2" y="5.6" width="2" height="2" fill="#555"/><rect x="5.8" y="5.6" width="2" height="2" fill="#555"/></svg>
<div class="t" style="left:581.5px;top:292px;width:200px;text-align:center;font-size:10.95px;color:#7e7e7e">Side 02 - Side 03</div>
<div class="a" style="left:854px;top:136px;width:300px;height:147px;background:#3f524c"></div>
<svg style="left:893px;top:158px;overflow:hidden" width="74" height="103" viewBox="0 0 100 100" preserveAspectRatio="none"><defs><filter id="p11" x="-5%" y="-5%" width="110%" height="110%"><feGaussianBlur stdDeviation="0.8"/></filter><filter id="p12" x="-5%" y="-5%" width="110%" height="110%"><feGaussianBlur stdDeviation="0.3"/></filter></defs><rect x="0" y="0" width="100" height="100" fill="url(#p10)"/><g filter="url(#p11)"><defs><linearGradient id="p10" x1="0" y1="0" x2="0" y2="1"><stop offset="0" stop-color="#4a5636"/><stop offset="0.12" stop-color="#36432a"/><stop offset="0.5" stop-color="#27321f"/><stop offset="1" stop-color="#35422b"/></linearGradient></defs><rect x="0" y="0" width="100" height="100" fill="url(#p10)"/><ellipse cx="16.5" cy="8.3" rx="3.9" ry="3.5" fill="#8e9864" opacity="0.9"/><ellipse cx="47.5" cy="11.6" rx="2.6" ry="2.3" fill="#7d8a58" opacity="0.51"/><ellipse cx="93.3" cy="5.1" rx="2.4" ry="2.6" fill="#8e9864" opacity="0.78"/><ellipse cx="43.7" cy="11.9" rx="4.3" ry="3.6" fill="#6f7e4c" opacity="0.51"/><ellipse cx="32.9" cy="6.0" rx="2.3" ry="2.7" fill="#a3a56f" opacity="0.51"/><ellipse cx="74.1" cy="1.1" rx="4.4" ry="2.7" fill="#8e9864" opacity="0.72"/><ellipse cx="34.3" cy="5.8" rx="2.6" ry="1.6" fill="#8e9864" opacity="0.53"/><ellipse cx="19.7" cy="8.1" rx="4.4" ry="4.4" fill="#98a070" opacity="0.9"/><ellipse cx="7.1" cy="6.7" rx="3.7" ry="3.1" fill="#a3a56f" opacity="0.87"/><ellipse cx="88.8" cy="4.9" rx="3.1" ry="2.7" fill="#6f7e4c" opacity="0.63"/><ellipse cx="48.4" cy="3.2" rx="4.5" ry="3.1" fill="#b0ad70" opacity="0.9"/><ellipse cx="49.6" cy="5.9" rx="3.7" ry="3.8" fill="#8e9864" opacity="0.73"/><ellipse cx="31.9" cy="11.8" rx="2.3" ry="2.3" fill="#b0ad70" opacity="0.64"/><ellipse cx="92.7" cy="4.2" rx="3.8" ry="3.0" fill="#7d8a58" opacity="0.57"/><ellipse cx="92.3" cy="2.1" rx="3.3" ry="2.3" fill="#7d8a58" opacity="0.77"/><ellipse cx="89.9" cy="11.5" rx="3.2" ry="3.8" fill="#b0ad70" opacity="0.74"/><ellipse cx="88.3" cy="5.9" rx="3.1" ry="2.3" fill="#8e9864" opacity="0.56"/><ellipse cx="6.9" cy="9.7" rx="4.3" ry="3.8" fill="#a3a56f" opacity="0.52"/><ellipse cx="25.8" cy="3.5" rx="3.3" ry="2.3" fill="#7d8a58" opacity="0.85"/><ellipse cx="64.5" cy="1.8" rx="2.5" ry="2.5" fill="#7d8a58" opacity="0.6"/><ellipse cx="95.9" cy="6.3" rx="4.2" ry="2.6" fill="#8e9864" opacity="0.86"/><ellipse cx="36.6" cy="1.8" rx="3.1" ry="3.3" fill="#6f7e4c" opacity="0.73"/><ellipse cx="84.9" cy="3.7" rx="3.6" ry="2.8" fill="#b0ad70" opacity="0.5"/><ellipse cx="68.5" cy="11.4" rx="2.1" ry="2.0" fill="#b0ad70" opacity="0.6"/><ellipse cx="95.6" cy="5.1" rx="4.0" ry="4.3" fill="#8e9864" opacity="0.55"/><ellipse cx="95.8" cy="17.4" rx="2.1" ry="2.5" fill="#36442a" opacity="0.78"/><ellipse cx="74.0" cy="66.9" rx="5.2" ry="3.3" fill="#1f2718" opacity="0.88"/><ellipse cx="31.9" cy="48.3" rx="5.7" ry="5.8" fill="#56663d" opacity="0.78"/><ellipse cx="4.8" cy="67.1" rx="4.4" ry="3.4" fill="#3d4b2f" opacity="0.57"/><ellipse cx="11.2" cy="43.6" rx="4.9" ry="5.8" fill="#44532f" opacity="0.52"/><ellipse cx="32.6" cy="30.4" rx="2.7" ry="2.3" fill="#66754a" opacity="0.56"/><ellipse cx="82.5" cy="52.7" rx="2.7" ry="1.7" fill="#66754a" opacity="0.86"/><ellipse cx="41.9" cy="24.9" rx="3.1" ry="3.5" fill="#56663d" opacity="0.76"/><ellipse cx="91.6" cy="28.6" rx="3.5" ry="3.3" fill="#1f2718" opacity="0.73"/><ellipse cx="56.1" cy="43.3" rx="5.0" ry="5.7" fill="#56663d" opacity="0.54"/><ellipse cx="99.6" cy="31.8" rx="3.7" ry="3.1" fill="#3d4b2f" opacity="0.7"/><ellipse cx="40.1" cy="14.5" rx="5.6" ry="3.9" fill="#66754a" opacity="0.65"/><ellipse cx="17.9" cy="69.0" rx="4.5" ry="3.9" fill="#2f3b23" opacity="0.71"/><ellipse cx="79.6" cy="51.4" rx="2.8" ry="2.9" fill="#26301d" opacity="0.58"/><ellipse cx="12.2" cy="17.9" rx="4.3" ry="2.7" fill="#2f3b23" opacity="0.7"/><ellipse cx="52.4" cy="47.2" rx="6.0" ry="6.2" fill="#5f6f45" opacity="0.69"/><ellipse cx="6.6" cy="55.8" rx="5.8" ry="3.9" fill="#44532f" opacity="0.6"/><ellipse cx="11.9" cy="20.5" rx="3.4" ry="2.2" fill="#2f3b23" opacity="0.57"/><ellipse cx="69.2" cy="37.1" rx="3.1" ry="1.9" fill="#3d4b2f" opacity="0.64"/><ellipse cx="11.8" cy="22.5" rx="3.0" ry="3.4" fill="#36442a" opacity="0.51"/><ellipse cx="75.3" cy="46.9" rx="4.5" ry="3.8" fill="#2f3b23" opacity="0.79"/><ellipse cx="92.5" cy="63.9" rx="2.2" ry="1.8" fill="#44532f" opacity="0.51"/><ellipse cx="20.3" cy="40.8" rx="3.5" ry="3.7" fill="#56663d" opacity="0.69"/><ellipse cx="24.9" cy="23.5" rx="3.1" ry="2.0" fill="#44532f" opacity="0.56"/><ellipse cx="88.9" cy="51.3" rx="2.2" ry="2.0" fill="#44532f" opacity="0.61"/><ellipse cx="84.7" cy="54.9" rx="3.1" ry="3.3" fill="#3d4b2f" opacity="0.75"/><ellipse cx="98.6" cy="64.7" rx="2.9" ry="2.7" fill="#36442a" opacity="0.64"/><ellipse cx="25.9" cy="73.1" rx="4.8" ry="4.9" fill="#44532f" opacity="0.76"/><ellipse cx="17.5" cy="61.8" rx="5.6" ry="5.2" fill="#4a5a35" opacity="0.61"/><ellipse cx="84.4" cy="25.6" rx="3.0" ry="2.8" fill="#4a5a35" opacity="0.84"/><ellipse cx="51.0" cy="54.7" rx="5.3" ry="6.2" fill="#3d4b2f" opacity="0.7"/><ellipse cx="34.3" cy="66.7" rx="2.3" ry="2.3" fill="#66754a" opacity="0.58"/><ellipse cx="16.2" cy="11.4" rx="3.5" ry="2.6" fill="#66754a" opacity="0.71"/><ellipse cx="85.0" cy="21.2" rx="3.4" ry="4.0" fill="#26301d" opacity="0.71"/><ellipse cx="76.8" cy="9.5" rx="5.8" ry="5.9" fill="#2f3b23" opacity="0.54"/><ellipse cx="6.7" cy="20.0" rx="4.0" ry="4.7" fill="#56663d" opacity="0.73"/><ellipse cx="52.6" cy="44.8" rx="3.3" ry="3.3" fill="#26301d" opacity="0.86"/><ellipse cx="80.1" cy="51.7" rx="3.3" ry="2.5" fill="#3d4b2f" opacity="0.6"/><ellipse cx="11.8" cy="29.1" rx="5.6" ry="6.5" fill="#2f3b23" opacity="0.54"/><ellipse cx="44.5" cy="30.3" rx="2.7" ry="2.4" fill="#56663d" opacity="0.66"/><ellipse cx="14.0" cy="35.0" rx="2.9" ry="2.2" fill="#44532f" opacity="0.88"/><ellipse cx="37.5" cy="10.7" rx="5.8" ry="5.3" fill="#3d4b2f" opacity="0.54"/><ellipse cx="82.3" cy="58.4" rx="4.2" ry="3.7" fill="#1f2718" opacity="0.9"/><ellipse cx="82.0" cy="15.6" rx="3.9" ry="4.2" fill="#66754a" opacity="0.65"/><ellipse cx="67.5" cy="21.8" rx="2.5" ry="2.5" fill="#5f6f45" opacity="0.67"/><rect x="0" y="70" width="15.5" height="30" fill="#809c5b" opacity="0.95"/></g><g filter="url(#p12)"><polygon points="11,83 30,83 30,100 11,100" fill="#c6bba4" opacity="1"/><ellipse cx="31.6" cy="8.6" rx="8" ry="5" fill="#2a211f" opacity="1"/><ellipse cx="31.6" cy="13.6" rx="7.2" ry="6.2" fill="#d6b09a" opacity="1"/><polygon points="9.3,24 20,20.5 42,20.5 54.6,24 55,45 50,62 25,64 13,60 8,40" fill="#e8e6e8" opacity="1"/><polygon points="30,30 54.6,24 55,45 50,62 30,62" fill="#c8c6ca" opacity="0.4"/><ellipse cx="71" cy="22" rx="10" ry="14" fill="#c7a37c" opacity="1"/><ellipse cx="71" cy="15.5" rx="6.8" ry="5.9" fill="#d6b09a" opacity="1"/><polygon points="56,28 86,27 90,32 92,50 98,100 55,100 54,60" fill="#cda4a7" opacity="1"/><polygon points="87,30 93,33 93,62 89,62" fill="#c49a84" opacity="1"/><polygon points="70,50 92,50 98,100 72,100" fill="#dcb9bb" opacity="0.5"/><ellipse cx="47" cy="45" rx="11" ry="11" fill="#2a211f" opacity="1"/><ellipse cx="47" cy="43.5" rx="7" ry="5.5" fill="#d6b09a" opacity="1"/><polygon points="37,51 58,51 60,70 58,96 36,96 35,70" fill="#b38b8f" opacity="1"/><ellipse cx="66.5" cy="60" rx="9" ry="10" fill="#c7a37c" opacity="1"/><ellipse cx="66.5" cy="58.5" rx="6.5" ry="5.3" fill="#d6b09a" opacity="1"/><polygon points="55,64.5 79,64.5 82,100 53,100" fill="#dcb9bb" opacity="1"/><ellipse cx="30.5" cy="62" rx="7.5" ry="4" fill="#7a5a44" opacity="1"/><ellipse cx="30.5" cy="64.5" rx="7" ry="5.1" fill="#d6b09a" opacity="1"/><polygon points="16,70 41,70 42,95 15,95" fill="#e8e6e8" opacity="1"/><polygon points="17,95 40,95 40,100 17,100" fill="#c6bba4" opacity="1"/></g><rect x="0.4" y="0.3" width="99.2" height="99.4" fill="none" stroke="#26332c" stroke-width="1.2"/></svg>
<svg style="left:1041px;top:158px;overflow:hidden" width="74" height="103" viewBox="0 0 100 100" preserveAspectRatio="none"><defs><filter id="p14" x="-5%" y="-5%" width="110%" height="110%"><feGaussianBlur stdDeviation="0.8"/></filter><filter id="p15" x="-5%" y="-5%" width="110%" height="110%"><feGaussianBlur stdDeviation="0.3"/></filter></defs><rect x="0" y="0" width="100" height="100" fill="url(#p13)"/><g filter="url(#p14)"><defs><linearGradient id="p13" x1="0" y1="0" x2="0" y2="1"><stop offset="0" stop-color="#4a5636"/><stop offset="0.12" stop-color="#36432a"/><stop offset="0.5" stop-color="#27321f"/><stop offset="1" stop-color="#35422b"/></linearGradient></defs><rect x="0" y="0" width="100" height="100" fill="url(#p13)"/><ellipse cx="1.2" cy="1.3" rx="3.2" ry="3.2" fill="#8e9864" opacity="0.88"/><ellipse cx="53.5" cy="8.5" rx="2.4" ry="2.9" fill="#7d8a58" opacity="0.76"/><ellipse cx="13.7" cy="6.4" rx="3.3" ry="2.8" fill="#98a070" opacity="0.54"/><ellipse cx="2.0" cy="11.3" rx="3.2" ry="2.3" fill="#a3a56f" opacity="0.66"/><ellipse cx="59.7" cy="3.0" rx="4.2" ry="3.5" fill="#b0ad70" opacity="0.72"/><ellipse cx="95.4" cy="10.1" rx="3.1" ry="2.2" fill="#6f7e4c" opacity="0.51"/><ellipse cx="73.5" cy="10.4" rx="4.0" ry="2.9" fill="#6f7e4c" opacity="0.79"/><ellipse cx="19.4" cy="7.7" rx="2.7" ry="1.7" fill="#a3a56f" opacity="0.62"/><ellipse cx="57.2" cy="5.8" rx="4.0" ry="3.1" fill="#8e9864" opacity="0.89"/><ellipse cx="99.4" cy="9.5" rx="2.9" ry="2.1" fill="#98a070" opacity="0.87"/><ellipse cx="83.8" cy="3.5" rx="2.5" ry="1.6" fill="#98a070" opacity="0.65"/><ellipse cx="95.7" cy="8.0" rx="2.9" ry="2.2" fill="#8e9864" opacity="0.55"/><ellipse cx="20.3" cy="4.0" rx="3.2" ry="2.0" fill="#b0ad70" opacity="0.55"/><ellipse cx="9.9" cy="11.8" rx="2.4" ry="1.7" fill="#a3a56f" opacity="0.56"/><ellipse cx="99.0" cy="1.8" rx="2.2" ry="2.1" fill="#98a070" opacity="0.61"/><ellipse cx="37.2" cy="7.4" rx="3.9" ry="2.4" fill="#7d8a58" opacity="0.69"/><ellipse cx="79.7" cy="7.3" rx="3.5" ry="3.8" fill="#7d8a58" opacity="0.6"/><ellipse cx="76.5" cy="11.8" rx="3.0" ry="1.8" fill="#6f7e4c" opacity="0.73"/><ellipse cx="44.6" cy="11.9" rx="2.4" ry="2.3" fill="#98a070" opacity="0.52"/><ellipse cx="61.4" cy="2.5" rx="2.6" ry="2.8" fill="#a3a56f" opacity="0.78"/><ellipse cx="55.4" cy="6.7" rx="3.5" ry="3.6" fill="#98a070" opacity="0.66"/><ellipse cx="52.4" cy="8.6" rx="3.4" ry="3.5" fill="#6f7e4c" opacity="0.63"/><ellipse cx="37.2" cy="6.3" rx="3.0" ry="2.2" fill="#a3a56f" opacity="0.78"/><ellipse cx="58.0" cy="2.0" rx="4.6" ry="3.1" fill="#6f7e4c" opacity="0.58"/><ellipse cx="24.6" cy="10.6" rx="2.6" ry="3.0" fill="#a3a56f" opacity="0.72"/><ellipse cx="7.7" cy="22.3" rx="3.2" ry="3.7" fill="#5f6f45" opacity="0.51"/><ellipse cx="3.9" cy="29.8" rx="3.3" ry="2.1" fill="#5f6f45" opacity="0.65"/><ellipse cx="0.1" cy="58.6" rx="2.5" ry="1.5" fill="#3d4b2f" opacity="0.83"/><ellipse cx="95.3" cy="21.5" rx="2.3" ry="1.6" fill="#66754a" opacity="0.54"/><ellipse cx="16.0" cy="9.3" rx="2.2" ry="1.4" fill="#4a5a35" opacity="0.59"/><ellipse cx="46.8" cy="56.8" rx="4.0" ry="3.7" fill="#1f2718" opacity="0.73"/><ellipse cx="57.6" cy="59.6" rx="4.3" ry="3.2" fill="#4a5a35" opacity="0.53"/><ellipse cx="66.3" cy="64.4" rx="3.2" ry="3.2" fill="#5f6f45" opacity="0.5"/><ellipse cx="18.0" cy="18.9" rx="6.0" ry="6.7" fill="#36442a" opacity="0.76"/><ellipse cx="4.8" cy="28.2" rx="3.5" ry="2.5" fill="#26301d" opacity="0.7"/><ellipse cx="50.4" cy="43.1" rx="3.3" ry="2.7" fill="#5f6f45" opacity="0.88"/><ellipse cx="86.3" cy="49.4" rx="4.1" ry="3.7" fill="#3d4b2f" opacity="0.65"/><ellipse cx="58.1" cy="32.8" rx="5.3" ry="6.2" fill="#36442a" opacity="0.74"/><ellipse cx="82.2" cy="51.3" rx="2.6" ry="1.9" fill="#26301d" opacity="0.7"/><ellipse cx="10.8" cy="8.1" rx="5.4" ry="3.8" fill="#4a5a35" opacity="0.81"/><ellipse cx="41.7" cy="23.2" rx="3.6" ry="4.3" fill="#56663d" opacity="0.57"/><ellipse cx="36.6" cy="13.5" rx="4.9" ry="5.8" fill="#3d4b2f" opacity="0.55"/><ellipse cx="69.2" cy="25.6" rx="4.7" ry="3.9" fill="#2f3b23" opacity="0.83"/><ellipse cx="3.5" cy="72.7" rx="2.7" ry="1.6" fill="#44532f" opacity="0.79"/><ellipse cx="67.5" cy="59.3" rx="3.5" ry="2.3" fill="#4a5a35" opacity="0.58"/><ellipse cx="65.5" cy="18.5" rx="4.5" ry="2.8" fill="#26301d" opacity="0.5"/><ellipse cx="82.9" cy="25.0" rx="4.2" ry="2.8" fill="#2f3b23" opacity="0.79"/><ellipse cx="12.1" cy="22.9" rx="4.7" ry="3.8" fill="#2f3b23" opacity="0.62"/><ellipse cx="18.2" cy="23.5" rx="5.2" ry="3.4" fill="#26301d" opacity="0.89"/><ellipse cx="24.7" cy="29.3" rx="4.9" ry="4.4" fill="#36442a" opacity="0.75"/><ellipse cx="0.9" cy="54.3" rx="2.0" ry="1.9" fill="#26301d" opacity="0.8"/><ellipse cx="17.8" cy="13.8" rx="4.9" ry="5.6" fill="#56663d" opacity="0.73"/><ellipse cx="5.3" cy="51.1" rx="5.5" ry="4.8" fill="#3d4b2f" opacity="0.85"/><ellipse cx="30.4" cy="52.0" rx="5.0" ry="5.5" fill="#26301d" opacity="0.63"/><ellipse cx="96.3" cy="62.3" rx="3.1" ry="2.1" fill="#44532f" opacity="0.59"/><ellipse cx="30.2" cy="71.1" rx="2.1" ry="1.7" fill="#5f6f45" opacity="0.56"/><ellipse cx="96.6" cy="28.1" rx="5.8" ry="5.9" fill="#3d4b2f" opacity="0.5"/><ellipse cx="44.7" cy="18.0" rx="5.1" ry="4.4" fill="#2f3b23" opacity="0.74"/><ellipse cx="0.5" cy="63.3" rx="4.7" ry="5.0" fill="#1f2718" opacity="0.89"/><ellipse cx="30.2" cy="43.1" rx="4.0" ry="3.5" fill="#26301d" opacity="0.73"/><ellipse cx="80.8" cy="70.3" rx="3.0" ry="3.1" fill="#36442a" opacity="0.86"/><ellipse cx="35.0" cy="15.0" rx="3.4" ry="3.3" fill="#2f3b23" opacity="0.75"/><ellipse cx="60.1" cy="52.6" rx="4.3" ry="2.6" fill="#66754a" opacity="0.73"/><ellipse cx="28.0" cy="23.4" rx="5.5" ry="4.8" fill="#56663d" opacity="0.77"/><ellipse cx="62.6" cy="53.7" rx="5.5" ry="5.6" fill="#2f3b23" opacity="0.72"/><ellipse cx="1.6" cy="73.2" rx="2.8" ry="2.8" fill="#2f3b23" opacity="0.75"/><ellipse cx="93.8" cy="13.1" rx="5.4" ry="5.5" fill="#56663d" opacity="0.82"/><ellipse cx="81.9" cy="56.4" rx="5.3" ry="5.0" fill="#36442a" opacity="0.57"/><ellipse cx="40.9" cy="44.8" rx="3.5" ry="2.5" fill="#1f2718" opacity="0.75"/><ellipse cx="44.0" cy="45.3" rx="5.8" ry="3.9" fill="#36442a" opacity="0.79"/><rect x="0" y="74" width="10" height="30" fill="#809c5b" opacity="0.95"/></g><g filter="url(#p15)"><polygon points="14,66 38,66 36,100 16,100" fill="#d7d0c3" opacity="1"/><ellipse cx="38.8" cy="7.5" rx="8" ry="5" fill="#2a211f" opacity="1"/><ellipse cx="38.8" cy="12.5" rx="7.2" ry="6.2" fill="#d6b09a" opacity="1"/><polygon points="10,24 24,20 48,20 54,26 55,45 48,66 14,66 9,45" fill="#e8e6e8" opacity="1"/><polygon points="30,30 54,26 55,45 48,66 30,66" fill="#c8c6ca" opacity="0.4"/><ellipse cx="65" cy="22" rx="10" ry="14" fill="#c7a37c" opacity="1"/><ellipse cx="65" cy="15.4" rx="6.8" ry="5.9" fill="#d6b09a" opacity="1"/><polygon points="54,28 88,27 92,34 94,55 99,100 52,100 52,60" fill="#cda4a7" opacity="1"/><polygon points="89,32 95,35 95,66 91,66" fill="#c49a84" opacity="1"/><polygon points="70,50 94,55 99,100 72,100" fill="#dcb9bb" opacity="0.5"/><ellipse cx="45" cy="47" rx="10" ry="11" fill="#2a211f" opacity="1"/><ellipse cx="45" cy="45" rx="6.8" ry="5.5" fill="#d6b09a" opacity="1"/><polygon points="34,52 54,52 56,72 55,100 33,100 33,72" fill="#b38b8f" opacity="1"/><ellipse cx="62" cy="63" rx="9" ry="10" fill="#c7a37c" opacity="1"/><ellipse cx="62" cy="61" rx="6.5" ry="5.3" fill="#d6b09a" opacity="1"/><polygon points="52,70 80,70 83,100 51,100" fill="#dcb9bb" opacity="1"/><ellipse cx="25.5" cy="64.5" rx="7.5" ry="4" fill="#7a5a44" opacity="1"/><ellipse cx="25.5" cy="67" rx="7" ry="5.1" fill="#d6b09a" opacity="1"/><polygon points="10,74 36,74 37,100 9,100" fill="#e8e6e8" opacity="1"/></g><rect x="0.4" y="0.3" width="99.2" height="99.4" fill="none" stroke="#26332c" stroke-width="1.2"/></svg>
<div class="a" style="left:853px;top:135px;width:13px;height:17px;background:#f4f4f4;border-bottom-right-radius:4px"></div>
<svg style="left:852px;top:136px" width="10" height="10" viewBox="0 0 10 10"><rect x="0.6" y="0.6" width="8.8" height="8.8" rx="1.6" fill="#a9a9a9" stroke="#6f6f6f" stroke-width="1.2"/><rect x="2" y="2.2" width="6" height="1.8" fill="#555"/><rect x="1.4" y="4.4" width="7.2" height="0.6" fill="#ddd"/><rect x="2.2" y="5.6" width="2" height="2" fill="#555"/><rect x="5.8" y="5.6" width="2" height="2" fill="#555"/></svg>
<div class="t" style="left:903.5px;top:292px;width:200px;text-align:center;font-size:10.95px;color:#7e7e7e">Side 04 - Side 05</div>
<div class="a" style="left:1176px;top:136px;width:300px;height:147px;background:#3f524c"></div>
<svg style="left:1176px;top:136px;overflow:hidden" width="150" height="147" viewBox="0 0 100 100" preserveAspectRatio="none"><defs><filter id="p17" x="-5%" y="-5%" width="110%" height="110%"><feGaussianBlur stdDeviation="0.8"/></filter><filter id="p18" x="-5%" y="-5%" width="110%" height="110%"><feGaussianBlur stdDeviation="0.35"/></filter></defs><rect x="0" y="0" width="100" height="100" fill="url(#p16)"/><g filter="url(#p17)"><defs><linearGradient id="p16" x1="0" y1="0" x2="0" y2="1"><stop offset="0" stop-color="#4e613a"/><stop offset="0.15" stop-color="#55634a"/><stop offset="0.3" stop-color="#4c5840"/><stop offset="0.45" stop-color="#3a4830"/><stop offset="0.54" stop-color="#2f3d25"/><stop offset="0.55" stop-color="#6c8a4a"/><stop offset="1" stop-color="#6f8c49"/></linearGradient></defs><rect x="0" y="0" width="100" height="100" fill="url(#p16)"/><ellipse cx="42.2" cy="19.6" rx="2.5" ry="2.9" fill="#3a4530" opacity="0.76"/><ellipse cx="35.0" cy="21.1" rx="4.6" ry="4.8" fill="#5f6a55" opacity="0.71"/><ellipse cx="63.0" cy="39.7" rx="3.3" ry="2.3" fill="#56604a" opacity="0.79"/><ellipse cx="37.6" cy="20.5" rx="4.1" ry="3.9" fill="#5f6a55" opacity="0.71"/><ellipse cx="16.4" cy="40.6" rx="4.5" ry="3.3" fill="#4d5a3d" opacity="0.69"/><ellipse cx="23.3" cy="34.1" rx="2.4" ry="2.7" fill="#56604a" opacity="0.42"/><ellipse cx="37.5" cy="32.5" rx="3.8" ry="2.7" fill="#5f6a55" opacity="0.52"/><ellipse cx="24.8" cy="34.0" rx="3.2" ry="3.2" fill="#6d7262" opacity="0.74"/><ellipse cx="31.0" cy="14.8" rx="2.2" ry="2.6" fill="#6d7262" opacity="0.57"/><ellipse cx="69.1" cy="29.8" rx="4.6" ry="4.6" fill="#4d5a3d" opacity="0.47"/><ellipse cx="73.7" cy="35.6" rx="4.2" ry="4.2" fill="#5f6a55" opacity="0.79"/><ellipse cx="66.2" cy="41.5" rx="3.2" ry="3.3" fill="#5f6a55" opacity="0.64"/><ellipse cx="45.0" cy="40.0" rx="4.9" ry="3.6" fill="#6d7262" opacity="0.55"/><ellipse cx="48.0" cy="35.8" rx="4.4" ry="2.8" fill="#4d5a3d" opacity="0.62"/><ellipse cx="82.8" cy="20.2" rx="3.1" ry="3.2" fill="#3a4530" opacity="0.55"/><ellipse cx="79.5" cy="36.8" rx="4.2" ry="3.1" fill="#56604a" opacity="0.49"/><ellipse cx="30.7" cy="27.5" rx="2.7" ry="3.2" fill="#3a4530" opacity="0.63"/><ellipse cx="25.5" cy="22.9" rx="2.7" ry="2.7" fill="#5f6a55" opacity="0.73"/><ellipse cx="47.1" cy="36.4" rx="2.6" ry="2.7" fill="#6d7262" opacity="0.79"/><ellipse cx="80.1" cy="39.1" rx="2.1" ry="2.0" fill="#56604a" opacity="0.66"/><ellipse cx="52.0" cy="33.4" rx="2.5" ry="2.6" fill="#5f6a55" opacity="0.42"/><ellipse cx="63.3" cy="34.9" rx="2.6" ry="2.2" fill="#4d5a3d" opacity="0.51"/><ellipse cx="33.2" cy="24.5" rx="2.7" ry="1.8" fill="#4d5a3d" opacity="0.65"/><ellipse cx="44.8" cy="25.3" rx="3.5" ry="3.9" fill="#5f6a55" opacity="0.6"/><ellipse cx="58.0" cy="19.7" rx="2.5" ry="2.3" fill="#5f6a55" opacity="0.5"/><ellipse cx="48.9" cy="30.8" rx="3.1" ry="3.0" fill="#3a4530" opacity="0.41"/><ellipse cx="70.2" cy="18.4" rx="4.4" ry="3.5" fill="#4d5a3d" opacity="0.63"/><ellipse cx="45.6" cy="12.5" rx="2.5" ry="2.4" fill="#6d7262" opacity="0.46"/><ellipse cx="62.5" cy="29.5" rx="2.1" ry="2.3" fill="#4d5a3d" opacity="0.65"/><ellipse cx="55.2" cy="29.3" rx="2.7" ry="2.8" fill="#5f6a55" opacity="0.61"/><ellipse cx="57.4" cy="34.8" rx="3.5" ry="3.3" fill="#5f6a55" opacity="0.48"/><ellipse cx="27.4" cy="28.0" rx="4.3" ry="4.6" fill="#6d7262" opacity="0.41"/><ellipse cx="37.0" cy="22.0" rx="4.4" ry="4.1" fill="#4d5a3d" opacity="0.67"/><ellipse cx="69.7" cy="24.3" rx="4.4" ry="2.9" fill="#4d5a3d" opacity="0.56"/><ellipse cx="25.9" cy="27.1" rx="2.8" ry="3.2" fill="#5f6a55" opacity="0.74"/><ellipse cx="37.3" cy="41.8" rx="2.9" ry="3.2" fill="#56604a" opacity="0.42"/><ellipse cx="45.4" cy="39.2" rx="4.5" ry="3.0" fill="#5f6a55" opacity="0.77"/><ellipse cx="85.3" cy="21.1" rx="4.5" ry="4.9" fill="#4d5a3d" opacity="0.79"/><ellipse cx="69.7" cy="40.8" rx="4.3" ry="4.6" fill="#6d7262" opacity="0.59"/><ellipse cx="32.7" cy="34.6" rx="3.6" ry="2.7" fill="#56604a" opacity="0.76"/><ellipse cx="32.2" cy="38.8" rx="4.3" ry="3.9" fill="#56604a" opacity="0.73"/><ellipse cx="37.8" cy="21.4" rx="4.8" ry="3.7" fill="#4d5a3d" opacity="0.44"/><ellipse cx="76.6" cy="44.8" rx="2.9" ry="2.5" fill="#3a4530" opacity="0.62"/><ellipse cx="67.2" cy="24.3" rx="4.9" ry="4.0" fill="#6d7262" opacity="0.64"/><ellipse cx="63.2" cy="25.9" rx="2.7" ry="2.9" fill="#5f6a55" opacity="0.52"/><ellipse cx="83.8" cy="26.8" rx="3.8" ry="4.2" fill="#2a3421" opacity="0.82"/><ellipse cx="55.8" cy="31.2" rx="4.4" ry="2.7" fill="#34402a" opacity="0.82"/><ellipse cx="52.1" cy="15.0" rx="3.6" ry="2.8" fill="#34402a" opacity="0.94"/><ellipse cx="85.5" cy="17.0" rx="4.9" ry="4.4" fill="#2a3421" opacity="0.76"/><ellipse cx="81.6" cy="28.7" rx="4.1" ry="4.0" fill="#34402a" opacity="0.68"/><ellipse cx="69.2" cy="38.9" rx="2.8" ry="1.9" fill="#34402a" opacity="0.91"/><ellipse cx="73.1" cy="28.7" rx="3.2" ry="2.7" fill="#34402a" opacity="0.87"/><ellipse cx="57.7" cy="17.7" rx="2.7" ry="2.7" fill="#26301d" opacity="0.85"/><ellipse cx="61.9" cy="38.2" rx="4.4" ry="3.6" fill="#2a3421" opacity="0.73"/><ellipse cx="78.5" cy="32.2" rx="3.7" ry="2.6" fill="#26301d" opacity="0.67"/><ellipse cx="65.0" cy="37.7" rx="3.0" ry="2.8" fill="#26301d" opacity="0.85"/><ellipse cx="57.0" cy="23.6" rx="3.7" ry="4.3" fill="#2a3421" opacity="0.78"/><ellipse cx="77.7" cy="20.3" rx="2.7" ry="3.1" fill="#2a3421" opacity="0.74"/><ellipse cx="74.7" cy="18.3" rx="3.1" ry="3.4" fill="#34402a" opacity="0.85"/><ellipse cx="67.9" cy="36.6" rx="2.4" ry="2.0" fill="#34402a" opacity="0.73"/><ellipse cx="64.5" cy="17.5" rx="2.6" ry="1.7" fill="#34402a" opacity="0.7"/><ellipse cx="73.3" cy="40.7" rx="3.5" ry="2.8" fill="#34402a" opacity="0.69"/><ellipse cx="64.8" cy="23.8" rx="3.7" ry="2.7" fill="#26301d" opacity="0.71"/><ellipse cx="84.0" cy="43.6" rx="4.0" ry="3.0" fill="#2a3421" opacity="0.81"/><ellipse cx="78.5" cy="30.8" rx="4.8" ry="4.9" fill="#34402a" opacity="0.7"/><ellipse cx="66.6" cy="45.4" rx="4.8" ry="5.3" fill="#2a3421" opacity="0.65"/><ellipse cx="80.9" cy="33.2" rx="2.6" ry="2.2" fill="#34402a" opacity="0.66"/><ellipse cx="50.1" cy="35.0" rx="4.2" ry="4.3" fill="#2a3421" opacity="0.81"/><ellipse cx="78.8" cy="17.8" rx="3.1" ry="3.1" fill="#34402a" opacity="0.83"/><ellipse cx="58.1" cy="24.9" rx="2.5" ry="2.2" fill="#34402a" opacity="0.74"/><ellipse cx="56.0" cy="43.8" rx="2.5" ry="1.9" fill="#34402a" opacity="0.72"/><ellipse cx="63.6" cy="37.9" rx="3.8" ry="3.8" fill="#2a3421" opacity="0.77"/><ellipse cx="68.1" cy="22.7" rx="2.7" ry="3.1" fill="#34402a" opacity="0.88"/><ellipse cx="66.2" cy="45.2" rx="3.3" ry="3.7" fill="#26301d" opacity="0.88"/><ellipse cx="85.6" cy="27.8" rx="2.4" ry="2.4" fill="#34402a" opacity="0.62"/><ellipse cx="80.8" cy="40.8" rx="2.2" ry="2.1" fill="#2a3421" opacity="0.9"/><ellipse cx="51.5" cy="39.0" rx="2.6" ry="2.1" fill="#34402a" opacity="0.82"/><ellipse cx="79.7" cy="28.8" rx="2.4" ry="2.0" fill="#34402a" opacity="0.71"/><ellipse cx="63.3" cy="19.4" rx="4.9" ry="4.9" fill="#2a3421" opacity="0.84"/><ellipse cx="87.7" cy="40.0" rx="3.9" ry="2.7" fill="#2a3421" opacity="0.65"/><rect x="8" y="38" width="16.5" height="11" fill="#7a4f52" opacity="0.85"/><path d="M12 45 Q30 42 50 44 Q70 43 88 45 V55 H12 Z" fill="#2f3d24" opacity="0.9"/><ellipse cx="27.2" cy="77.5" rx="1.7" ry="1.4" fill="#6a8646" opacity="0.49"/><ellipse cx="11.5" cy="91.5" rx="3.9" ry="4.3" fill="#6a8646" opacity="0.66"/><ellipse cx="6.7" cy="67.9" rx="3.7" ry="2.6" fill="#647f42" opacity="0.33"/><ellipse cx="40.8" cy="86.8" rx="3.8" ry="2.7" fill="#7f9a57" opacity="0.44"/><ellipse cx="72.5" cy="70.1" rx="2.5" ry="1.5" fill="#7f9a57" opacity="0.43"/><ellipse cx="38.7" cy="94.6" rx="3.4" ry="3.4" fill="#86a05d" opacity="0.62"/><ellipse cx="64.3" cy="82.1" rx="1.6" ry="1.9" fill="#74904e" opacity="0.44"/><ellipse cx="62.6" cy="56.7" rx="2.7" ry="2.7" fill="#7f9a57" opacity="0.38"/><ellipse cx="38.5" cy="72.7" rx="3.0" ry="2.8" fill="#86a05d" opacity="0.45"/><ellipse cx="88.3" cy="82.9" rx="1.6" ry="1.8" fill="#86a05d" opacity="0.61"/><ellipse cx="31.8" cy="63.4" rx="1.5" ry="1.2" fill="#647f42" opacity="0.68"/><ellipse cx="10.3" cy="83.5" rx="2.9" ry="2.4" fill="#7f9a57" opacity="0.48"/><ellipse cx="20.0" cy="67.9" rx="2.1" ry="2.1" fill="#74904e" opacity="0.5"/><ellipse cx="14.9" cy="57.0" rx="3.9" ry="4.3" fill="#6a8646" opacity="0.37"/><ellipse cx="21.4" cy="58.8" rx="1.7" ry="1.8" fill="#647f42" opacity="0.62"/><ellipse cx="16.4" cy="85.3" rx="3.2" ry="3.2" fill="#647f42" opacity="0.56"/><ellipse cx="27.7" cy="89.7" rx="3.7" ry="2.6" fill="#86a05d" opacity="0.65"/><ellipse cx="7.2" cy="82.0" rx="3.6" ry="3.6" fill="#74904e" opacity="0.43"/><ellipse cx="43.8" cy="81.3" rx="3.5" ry="4.1" fill="#86a05d" opacity="0.52"/><ellipse cx="0.1" cy="74.2" rx="1.6" ry="1.8" fill="#647f42" opacity="0.56"/><ellipse cx="58.8" cy="58.5" rx="3.8" ry="2.8" fill="#74904e" opacity="0.32"/><ellipse cx="8.5" cy="90.6" rx="2.9" ry="2.3" fill="#7f9a57" opacity="0.68"/><ellipse cx="80.3" cy="92.9" rx="2.5" ry="1.5" fill="#647f42" opacity="0.7"/><ellipse cx="46.3" cy="95.6" rx="2.9" ry="2.4" fill="#647f42" opacity="0.32"/><ellipse cx="36.3" cy="86.6" rx="1.7" ry="1.6" fill="#647f42" opacity="0.43"/><ellipse cx="0.9" cy="70.4" rx="1.8" ry="1.2" fill="#86a05d" opacity="0.61"/><ellipse cx="40.9" cy="81.5" rx="1.7" ry="1.7" fill="#74904e" opacity="0.55"/><ellipse cx="79.8" cy="99.3" rx="3.3" ry="3.9" fill="#7f9a57" opacity="0.41"/><ellipse cx="86.6" cy="85.5" rx="3.1" ry="2.1" fill="#86a05d" opacity="0.6"/><ellipse cx="39.9" cy="90.1" rx="2.2" ry="1.6" fill="#74904e" opacity="0.35"/></g><g filter="url(#p18)"><ellipse cx="63.9" cy="0.3" rx="1.7" ry="1.2" fill="#4f6238" opacity="0.9"/><ellipse cx="89.2" cy="1.0" rx="2.0" ry="1.2" fill="#5f7a45" opacity="0.77"/><ellipse cx="60.2" cy="6.7" rx="2.5" ry="2.5" fill="#3d4c2c" opacity="0.77"/><ellipse cx="58.9" cy="9.7" rx="1.2" ry="1.3" fill="#3d4c2c" opacity="0.8"/><ellipse cx="15.5" cy="11.5" rx="1.8" ry="1.2" fill="#4f6238" opacity="0.81"/><ellipse cx="34.4" cy="3.2" rx="1.3" ry="1.1" fill="#4f6238" opacity="0.99"/><ellipse cx="37.9" cy="6.6" rx="2.7" ry="2.6" fill="#6e8a52" opacity="0.87"/><ellipse cx="70.5" cy="0.5" rx="1.6" ry="1.2" fill="#4f6238" opacity="0.96"/><ellipse cx="86.6" cy="4.6" rx="2.0" ry="2.2" fill="#5f7a45" opacity="0.81"/><ellipse cx="21.0" cy="3.2" rx="2.9" ry="2.9" fill="#7f9a60" opacity="0.89"/><ellipse cx="53.4" cy="2.9" rx="2.0" ry="1.5" fill="#7f9a60" opacity="0.77"/><ellipse cx="32.4" cy="9.2" rx="1.3" ry="1.4" fill="#6e8a52" opacity="0.82"/><ellipse cx="6.6" cy="11.0" rx="2.2" ry="2.3" fill="#5f7a45" opacity="0.9"/><ellipse cx="39.6" cy="11.0" rx="2.0" ry="1.5" fill="#5f7a45" opacity="0.92"/><ellipse cx="53.9" cy="9.0" rx="2.0" ry="1.9" fill="#6e8a52" opacity="0.77"/><ellipse cx="99.8" cy="6.1" rx="1.4" ry="0.9" fill="#4f6238" opacity="0.75"/><ellipse cx="16.0" cy="8.2" rx="2.3" ry="1.9" fill="#7f9a60" opacity="1.0"/><ellipse cx="52.9" cy="11.7" rx="2.7" ry="1.7" fill="#4f6238" opacity="0.9"/><ellipse cx="53.7" cy="3.2" rx="2.4" ry="1.6" fill="#3d4c2c" opacity="0.75"/><ellipse cx="0.3" cy="8.7" rx="2.5" ry="3.0" fill="#5f7a45" opacity="0.85"/><ellipse cx="10.6" cy="7.5" rx="2.7" ry="2.5" fill="#5f7a45" opacity="0.75"/><ellipse cx="76.3" cy="6.5" rx="2.6" ry="2.4" fill="#4f6238" opacity="0.88"/><ellipse cx="48.9" cy="1.3" rx="1.9" ry="2.2" fill="#6e8a52" opacity="0.77"/><ellipse cx="24.1" cy="6.8" rx="1.3" ry="1.4" fill="#4f6238" opacity="0.99"/><ellipse cx="53.3" cy="1.5" rx="2.4" ry="2.8" fill="#5f7a45" opacity="0.78"/><ellipse cx="87.2" cy="5.1" rx="1.6" ry="1.5" fill="#5f7a45" opacity="0.91"/><ellipse cx="39.9" cy="8.1" rx="1.9" ry="2.1" fill="#3d4c2c" opacity="0.74"/><ellipse cx="22.5" cy="4.1" rx="2.3" ry="1.7" fill="#5f7a45" opacity="0.7"/><ellipse cx="70.8" cy="0.7" rx="1.3" ry="0.8" fill="#6e8a52" opacity="0.72"/><ellipse cx="23.8" cy="8.0" rx="1.6" ry="1.1" fill="#7f9a60" opacity="0.87"/><ellipse cx="24.3" cy="5.7" rx="1.9" ry="1.3" fill="#3d4c2c" opacity="0.81"/><ellipse cx="41.1" cy="10.4" rx="1.3" ry="1.3" fill="#4f6238" opacity="0.72"/><ellipse cx="72.8" cy="9.6" rx="1.4" ry="1.0" fill="#7f9a60" opacity="0.83"/><ellipse cx="42.2" cy="3.3" rx="1.6" ry="1.9" fill="#3d4c2c" opacity="0.94"/><ellipse cx="85.6" cy="1.2" rx="2.4" ry="2.2" fill="#4f6238" opacity="0.99"/><ellipse cx="92.6" cy="10.2" rx="1.5" ry="1.3" fill="#5f7a45" opacity="0.96"/><ellipse cx="90.2" cy="2.0" rx="1.2" ry="1.0" fill="#3d4c2c" opacity="0.79"/><ellipse cx="69.7" cy="8.8" rx="2.6" ry="2.6" fill="#3d4c2c" opacity="0.75"/><ellipse cx="29.7" cy="11.6" rx="2.2" ry="2.1" fill="#6e8a52" opacity="0.72"/><ellipse cx="58.4" cy="6.0" rx="2.7" ry="1.9" fill="#7f9a60" opacity="0.72"/><ellipse cx="18.6" cy="7.1" rx="2.4" ry="1.8" fill="#4f6238" opacity="0.98"/><ellipse cx="57.0" cy="6.9" rx="1.3" ry="0.8" fill="#7f9a60" opacity="0.87"/><ellipse cx="31.6" cy="3.1" rx="2.4" ry="1.9" fill="#6e8a52" opacity="0.82"/><ellipse cx="67.2" cy="3.6" rx="1.8" ry="1.9" fill="#4f6238" opacity="0.7"/><ellipse cx="62.1" cy="6.8" rx="1.4" ry="1.3" fill="#7f9a60" opacity="0.78"/><ellipse cx="93.3" cy="10.6" rx="2.8" ry="2.3" fill="#5f7a45" opacity="0.83"/><ellipse cx="54.3" cy="3.6" rx="3.0" ry="3.2" fill="#7f9a60" opacity="0.7"/><ellipse cx="81.7" cy="3.6" rx="2.4" ry="2.8" fill="#5f7a45" opacity="0.78"/><ellipse cx="89.0" cy="8.9" rx="1.5" ry="1.1" fill="#5f7a45" opacity="0.92"/><ellipse cx="20.4" cy="7.6" rx="1.7" ry="1.5" fill="#4f6238" opacity="0.73"/><ellipse cx="42.4" cy="3.3" rx="1.2" ry="1.3" fill="#6e8a52" opacity="0.75"/><ellipse cx="44.2" cy="8.5" rx="2.2" ry="1.5" fill="#5f7a45" opacity="0.86"/><ellipse cx="83.5" cy="7.0" rx="1.5" ry="1.0" fill="#6e8a52" opacity="0.81"/><ellipse cx="93.3" cy="11.7" rx="1.3" ry="1.0" fill="#5f7a45" opacity="0.9"/><ellipse cx="35.4" cy="6.7" rx="2.8" ry="3.3" fill="#5f7a45" opacity="0.98"/><ellipse cx="23.7" cy="2.0" rx="2.6" ry="1.9" fill="#3d4c2c" opacity="0.71"/><ellipse cx="73.7" cy="4.0" rx="2.9" ry="3.1" fill="#5f7a45" opacity="0.78"/><ellipse cx="78.7" cy="1.3" rx="2.8" ry="3.1" fill="#5f7a45" opacity="0.76"/><ellipse cx="91.8" cy="4.2" rx="2.7" ry="3.0" fill="#5f7a45" opacity="0.71"/><ellipse cx="19.3" cy="3.9" rx="2.8" ry="3.3" fill="#6e8a52" opacity="0.81"/><ellipse cx="50.9" cy="8.2" rx="2.7" ry="2.2" fill="#4f6238" opacity="0.73"/><ellipse cx="97.0" cy="2.1" rx="2.9" ry="2.2" fill="#4f6238" opacity="0.88"/><ellipse cx="34.6" cy="9.4" rx="2.0" ry="2.4" fill="#4f6238" opacity="0.82"/><ellipse cx="57.7" cy="3.1" rx="2.5" ry="1.5" fill="#7f9a60" opacity="0.91"/><ellipse cx="94.0" cy="8.8" rx="1.6" ry="1.3" fill="#6e8a52" opacity="0.89"/><ellipse cx="66.3" cy="1.5" rx="2.8" ry="2.6" fill="#3d4c2c" opacity="0.8"/><ellipse cx="69.7" cy="6.7" rx="1.5" ry="1.5" fill="#3d4c2c" opacity="0.9"/><ellipse cx="90.3" cy="7.4" rx="1.7" ry="1.6" fill="#4f6238" opacity="0.79"/><ellipse cx="21.0" cy="9.4" rx="2.3" ry="1.8" fill="#3d4c2c" opacity="0.83"/><ellipse cx="21.4" cy="5.7" rx="2.8" ry="3.0" fill="#5f7a45" opacity="0.9"/><ellipse cx="10.6" cy="12.9" rx="2.0" ry="1.6" fill="#4f6238" opacity="0.82"/><ellipse cx="18.5" cy="23.9" rx="2.4" ry="2.8" fill="#6e8a52" opacity="0.78"/><ellipse cx="29.0" cy="14.4" rx="2.2" ry="2.5" fill="#56703d" opacity="0.87"/><ellipse cx="6.9" cy="15.7" rx="1.8" ry="2.2" fill="#6e8a52" opacity="0.87"/><ellipse cx="21.5" cy="10.6" rx="1.8" ry="1.7" fill="#7f9a60" opacity="0.77"/><ellipse cx="25.2" cy="27.4" rx="1.3" ry="1.0" fill="#56703d" opacity="0.87"/><ellipse cx="15.2" cy="24.4" rx="1.4" ry="1.5" fill="#7f9a60" opacity="0.98"/><ellipse cx="25.4" cy="6.6" rx="2.5" ry="2.7" fill="#4f6238" opacity="0.81"/><ellipse cx="26.2" cy="26.4" rx="2.7" ry="2.9" fill="#56703d" opacity="0.81"/><ellipse cx="17.0" cy="14.5" rx="2.2" ry="1.9" fill="#4f6238" opacity="0.94"/><ellipse cx="18.2" cy="18.8" rx="1.6" ry="1.4" fill="#4f6238" opacity="1.0"/><ellipse cx="16.7" cy="13.3" rx="3.0" ry="2.8" fill="#6e8a52" opacity="0.72"/><ellipse cx="15.3" cy="18.7" rx="2.1" ry="2.2" fill="#56703d" opacity="0.98"/><ellipse cx="1.0" cy="8.0" rx="2.4" ry="2.1" fill="#3d4c2c" opacity="0.97"/><ellipse cx="19.1" cy="28.6" rx="2.7" ry="2.5" fill="#7f9a60" opacity="0.8"/><ellipse cx="29.8" cy="28.7" rx="2.4" ry="1.7" fill="#7f9a60" opacity="0.74"/><ellipse cx="4.1" cy="23.6" rx="1.8" ry="1.5" fill="#56703d" opacity="0.83"/><ellipse cx="19.6" cy="12.4" rx="1.9" ry="1.4" fill="#7f9a60" opacity="0.75"/><ellipse cx="15.3" cy="14.7" rx="2.6" ry="2.8" fill="#4f6238" opacity="0.84"/><ellipse cx="17.0" cy="20.9" rx="1.5" ry="1.0" fill="#4f6238" opacity="0.8"/><ellipse cx="26.0" cy="26.3" rx="1.6" ry="1.0" fill="#6e8a52" opacity="0.71"/><ellipse cx="9.1" cy="26.4" rx="1.8" ry="1.7" fill="#4f6238" opacity="0.75"/><ellipse cx="17.4" cy="8.2" rx="2.7" ry="2.6" fill="#4f6238" opacity="0.85"/><ellipse cx="16.7" cy="28.6" rx="1.9" ry="1.6" fill="#56703d" opacity="0.87"/><ellipse cx="22.8" cy="17.9" rx="1.3" ry="1.2" fill="#3d4c2c" opacity="0.9"/><ellipse cx="13.6" cy="0.5" rx="2.7" ry="2.4" fill="#6e8a52" opacity="0.93"/><ellipse cx="8.6" cy="21.1" rx="2.1" ry="2.2" fill="#56703d" opacity="0.94"/><ellipse cx="5.0" cy="0.7" rx="1.4" ry="1.2" fill="#3d4c2c" opacity="0.99"/><ellipse cx="19.1" cy="20.6" rx="2.4" ry="1.5" fill="#4f6238" opacity="0.76"/><ellipse cx="20.4" cy="1.2" rx="1.7" ry="1.5" fill="#6e8a52" opacity="0.92"/><ellipse cx="3.3" cy="15.6" rx="2.3" ry="2.0" fill="#56703d" opacity="0.87"/><ellipse cx="12.4" cy="20.5" rx="2.8" ry="2.9" fill="#6e8a52" opacity="0.99"/><ellipse cx="3.1" cy="24.3" rx="1.9" ry="1.5" fill="#56703d" opacity="0.96"/><ellipse cx="24.5" cy="2.8" rx="2.3" ry="2.0" fill="#6e8a52" opacity="0.8"/><ellipse cx="26.0" cy="27.8" rx="2.3" ry="1.8" fill="#7f9a60" opacity="0.79"/><ellipse cx="14.0" cy="19.8" rx="2.7" ry="2.1" fill="#3d4c2c" opacity="0.8"/><ellipse cx="20.2" cy="4.7" rx="2.1" ry="1.3" fill="#3d4c2c" opacity="0.86"/><ellipse cx="18.4" cy="25.8" rx="1.7" ry="1.4" fill="#7f9a60" opacity="0.83"/><ellipse cx="14.9" cy="28.7" rx="2.1" ry="1.9" fill="#56703d" opacity="0.87"/><ellipse cx="27.6" cy="20.2" rx="1.9" ry="2.2" fill="#4f6238" opacity="0.88"/><ellipse cx="17.8" cy="18.7" rx="2.0" ry="1.9" fill="#3d4c2c" opacity="0.94"/><ellipse cx="5.4" cy="27.9" rx="2.3" ry="2.1" fill="#6e8a52" opacity="0.77"/><ellipse cx="5.3" cy="17.9" rx="1.2" ry="0.8" fill="#6e8a52" opacity="0.87"/><ellipse cx="0.0" cy="15.0" rx="2.0" ry="1.7" fill="#6e8a52" opacity="0.85"/><ellipse cx="3.1" cy="23.7" rx="1.9" ry="2.2" fill="#6e8a52" opacity="0.96"/><ellipse cx="5.2" cy="20.0" rx="2.1" ry="2.0" fill="#6e8a52" opacity="0.82"/><ellipse cx="15.2" cy="13.0" rx="2.8" ry="2.2" fill="#6e8a52" opacity="0.74"/><ellipse cx="21.4" cy="14.6" rx="2.4" ry="1.6" fill="#3d4c2c" opacity="0.94"/><ellipse cx="2.8" cy="29.1" rx="1.9" ry="2.3" fill="#4f6238" opacity="0.77"/><ellipse cx="19.3" cy="15.2" rx="2.5" ry="2.6" fill="#56703d" opacity="0.85"/><ellipse cx="0.4" cy="69.6" rx="1.5" ry="1.3" fill="#4f6238" opacity="0.84"/><ellipse cx="5.5" cy="1.9" rx="2.0" ry="1.6" fill="#6e8a52" opacity="0.97"/><ellipse cx="10.5" cy="39.4" rx="1.3" ry="0.9" fill="#4f6238" opacity="0.81"/><ellipse cx="1.1" cy="51.2" rx="2.1" ry="2.2" fill="#6e8a52" opacity="0.99"/><ellipse cx="3.0" cy="18.2" rx="1.3" ry="1.2" fill="#3d4c2c" opacity="0.98"/><ellipse cx="9.2" cy="29.6" rx="2.8" ry="2.6" fill="#4f6238" opacity="1.0"/><ellipse cx="8.9" cy="65.4" rx="2.4" ry="1.5" fill="#6e8a52" opacity="0.84"/><ellipse cx="7.1" cy="72.3" rx="1.8" ry="1.8" fill="#2f3a24" opacity="0.75"/><ellipse cx="9.3" cy="78.1" rx="1.3" ry="1.2" fill="#56703d" opacity="0.92"/><ellipse cx="7.4" cy="7.0" rx="3.0" ry="3.0" fill="#56703d" opacity="0.85"/><ellipse cx="8.6" cy="95.5" rx="2.5" ry="1.6" fill="#2f3a24" opacity="0.88"/><ellipse cx="0.9" cy="12.7" rx="1.4" ry="1.4" fill="#3d4c2c" opacity="0.87"/><ellipse cx="3.4" cy="69.0" rx="2.0" ry="1.9" fill="#3d4c2c" opacity="0.7"/><ellipse cx="9.9" cy="97.7" rx="1.4" ry="1.5" fill="#56703d" opacity="0.74"/><ellipse cx="5.9" cy="25.9" rx="2.6" ry="2.2" fill="#56703d" opacity="0.96"/><ellipse cx="4.2" cy="71.2" rx="1.4" ry="1.0" fill="#2f3a24" opacity="0.76"/><ellipse cx="10.3" cy="40.3" rx="2.3" ry="1.9" fill="#56703d" opacity="0.82"/><ellipse cx="0.6" cy="53.8" rx="2.6" ry="1.9" fill="#4f6238" opacity="0.9"/><ellipse cx="10.5" cy="22.2" rx="1.5" ry="1.1" fill="#2f3a24" opacity="0.95"/><ellipse cx="4.3" cy="6.1" rx="2.1" ry="1.4" fill="#4f6238" opacity="0.86"/><ellipse cx="6.7" cy="51.1" rx="2.8" ry="3.2" fill="#4f6238" opacity="0.87"/><ellipse cx="2.9" cy="13.0" rx="2.6" ry="1.8" fill="#4f6238" opacity="0.73"/><ellipse cx="2.4" cy="56.6" rx="1.9" ry="1.6" fill="#4f6238" opacity="0.7"/><ellipse cx="4.1" cy="32.8" rx="1.7" ry="1.1" fill="#6e8a52" opacity="0.75"/><ellipse cx="2.7" cy="23.6" rx="1.4" ry="1.2" fill="#56703d" opacity="0.95"/><ellipse cx="8.7" cy="48.2" rx="1.8" ry="1.4" fill="#4f6238" opacity="0.92"/><ellipse cx="5.2" cy="64.0" rx="1.7" ry="1.7" fill="#56703d" opacity="0.92"/><ellipse cx="10.7" cy="30.8" rx="2.9" ry="3.1" fill="#2f3a24" opacity="0.95"/><ellipse cx="6.7" cy="72.4" rx="2.1" ry="2.0" fill="#3d4c2c" opacity="0.88"/><ellipse cx="7.7" cy="72.6" rx="1.5" ry="1.5" fill="#4f6238" opacity="0.94"/><ellipse cx="7.0" cy="8.8" rx="2.6" ry="2.6" fill="#3d4c2c" opacity="1.0"/><ellipse cx="6.7" cy="73.0" rx="2.1" ry="1.6" fill="#2f3a24" opacity="1.0"/><ellipse cx="4.6" cy="6.4" rx="2.0" ry="2.1" fill="#2f3a24" opacity="0.74"/><ellipse cx="8.8" cy="35.8" rx="1.9" ry="2.0" fill="#2f3a24" opacity="0.8"/><ellipse cx="9.2" cy="21.1" rx="2.6" ry="1.9" fill="#56703d" opacity="1.0"/><ellipse cx="2.6" cy="59.3" rx="2.1" ry="1.4" fill="#3d4c2c" opacity="0.79"/><ellipse cx="1.4" cy="15.6" rx="1.5" ry="1.5" fill="#6e8a52" opacity="0.85"/><ellipse cx="7.8" cy="19.0" rx="2.8" ry="2.4" fill="#6e8a52" opacity="0.76"/><ellipse cx="2.8" cy="88.2" rx="2.7" ry="2.5" fill="#3d4c2c" opacity="0.73"/><ellipse cx="4.8" cy="50.1" rx="3.0" ry="2.0" fill="#6e8a52" opacity="0.91"/><ellipse cx="4.3" cy="37.6" rx="2.0" ry="1.7" fill="#2f3a24" opacity="0.86"/><ellipse cx="10.5" cy="0.9" rx="2.5" ry="2.2" fill="#4f6238" opacity="0.79"/><ellipse cx="7.3" cy="20.6" rx="2.5" ry="2.5" fill="#6e8a52" opacity="0.83"/><ellipse cx="1.6" cy="18.6" rx="1.2" ry="0.9" fill="#4f6238" opacity="0.73"/><ellipse cx="6.1" cy="32.1" rx="1.2" ry="1.0" fill="#56703d" opacity="0.96"/><ellipse cx="4.6" cy="5.9" rx="2.3" ry="1.5" fill="#4f6238" opacity="0.98"/><ellipse cx="6.8" cy="24.5" rx="2.6" ry="1.6" fill="#4f6238" opacity="0.73"/><ellipse cx="0.3" cy="61.6" rx="2.1" ry="2.3" fill="#3d4c2c" opacity="0.78"/><ellipse cx="4.4" cy="18.6" rx="1.5" ry="1.5" fill="#2f3a24" opacity="0.94"/><ellipse cx="4.5" cy="62.8" rx="2.7" ry="2.7" fill="#2f3a24" opacity="0.81"/><ellipse cx="8.1" cy="44.2" rx="2.3" ry="2.7" fill="#4f6238" opacity="0.86"/><ellipse cx="9.0" cy="44.0" rx="2.8" ry="2.0" fill="#4f6238" opacity="0.72"/><ellipse cx="0.9" cy="10.5" rx="1.2" ry="1.4" fill="#6e8a52" opacity="0.94"/><ellipse cx="4.3" cy="49.6" rx="3.0" ry="2.2" fill="#56703d" opacity="0.73"/><ellipse cx="0.9" cy="1.1" rx="2.1" ry="1.4" fill="#4f6238" opacity="0.96"/><ellipse cx="0.4" cy="6.4" rx="2.5" ry="1.7" fill="#6e8a52" opacity="0.98"/><ellipse cx="8.9" cy="99.2" rx="1.8" ry="2.1" fill="#56703d" opacity="0.81"/><ellipse cx="7.3" cy="54.3" rx="2.0" ry="2.1" fill="#4f6238" opacity="0.88"/><ellipse cx="0.6" cy="42.7" rx="1.7" ry="1.9" fill="#56703d" opacity="0.71"/><ellipse cx="5.0" cy="3.2" rx="2.9" ry="2.4" fill="#56703d" opacity="0.93"/><ellipse cx="0.9" cy="4.4" rx="2.5" ry="2.3" fill="#2f3a24" opacity="0.8"/><ellipse cx="6.3" cy="28.2" rx="1.4" ry="1.1" fill="#3d4c2c" opacity="0.97"/><ellipse cx="4.9" cy="43.3" rx="1.5" ry="1.5" fill="#56703d" opacity="0.78"/><ellipse cx="6.9" cy="10.2" rx="1.8" ry="1.4" fill="#6e8a52" opacity="0.85"/><ellipse cx="7.8" cy="75.4" rx="2.8" ry="2.9" fill="#2f3a24" opacity="0.93"/><ellipse cx="9.4" cy="3.5" rx="2.3" ry="1.4" fill="#56703d" opacity="0.76"/><ellipse cx="3.8" cy="62.4" rx="1.8" ry="1.6" fill="#6e8a52" opacity="0.83"/><ellipse cx="4.5" cy="0.8" rx="2.8" ry="2.1" fill="#56703d" opacity="0.79"/><ellipse cx="8.0" cy="0.9" rx="3.0" ry="3.3" fill="#4f6238" opacity="0.79"/><ellipse cx="9.6" cy="89.1" rx="1.4" ry="1.7" fill="#56703d" opacity="0.78"/><ellipse cx="7.2" cy="2.9" rx="2.6" ry="2.0" fill="#3d4c2c" opacity="0.87"/><ellipse cx="10.9" cy="86.5" rx="2.9" ry="1.9" fill="#56703d" opacity="0.86"/><ellipse cx="7.7" cy="13.5" rx="2.7" ry="2.2" fill="#4f6238" opacity="0.81"/><ellipse cx="4.9" cy="35.9" rx="1.3" ry="1.6" fill="#6e8a52" opacity="0.72"/><ellipse cx="1.2" cy="12.8" rx="1.9" ry="1.6" fill="#4f6238" opacity="0.82"/><ellipse cx="6.9" cy="45.7" rx="2.5" ry="2.9" fill="#6e8a52" opacity="0.98"/><ellipse cx="11.0" cy="56.6" rx="2.9" ry="2.3" fill="#6e8a52" opacity="0.71"/><ellipse cx="9.0" cy="89.7" rx="2.8" ry="2.3" fill="#6e8a52" opacity="0.95"/><ellipse cx="4.9" cy="63.8" rx="1.9" ry="2.2" fill="#6e8a52" opacity="0.75"/><ellipse cx="2.2" cy="55.1" rx="2.1" ry="2.4" fill="#3d4c2c" opacity="0.89"/><polygon points="43,5 73,5 73,10 43,10" fill="#8a8170" opacity="1"/><polygon points="90,14 97,14 98,100 91,100" fill="#837b6c" opacity="1"/><ellipse cx="90.5" cy="57.9" rx="2.3" ry="1.6" fill="#3d4c2c" opacity="0.7"/><ellipse cx="87.6" cy="60.3" rx="1.2" ry="1.2" fill="#6e8a52" opacity="0.84"/><ellipse cx="90.1" cy="45.3" rx="2.0" ry="1.6" fill="#4f6238" opacity="0.72"/><ellipse cx="88.5" cy="22.6" rx="1.8" ry="1.7" fill="#6e8a52" opacity="0.94"/><ellipse cx="85.7" cy="65.5" rx="2.5" ry="1.5" fill="#2f3a24" opacity="0.63"/><ellipse cx="91.6" cy="25.5" rx="1.2" ry="1.3" fill="#4f6238" opacity="0.62"/><ellipse cx="99.4" cy="70.5" rx="2.1" ry="2.2" fill="#6e8a52" opacity="0.73"/><ellipse cx="91.5" cy="49.7" rx="2.2" ry="1.5" fill="#2f3a24" opacity="0.76"/><ellipse cx="96.7" cy="70.9" rx="1.5" ry="1.7" fill="#4f6238" opacity="0.7"/><ellipse cx="84.1" cy="89.3" rx="1.9" ry="1.8" fill="#6e8a52" opacity="0.95"/><ellipse cx="89.7" cy="26.3" rx="1.2" ry="0.9" fill="#3d4c2c" opacity="0.81"/><ellipse cx="84.9" cy="47.9" rx="1.1" ry="1.0" fill="#4f6238" opacity="0.65"/><ellipse cx="98.9" cy="75.6" rx="1.0" ry="1.0" fill="#4f6238" opacity="0.7"/><ellipse cx="84.1" cy="33.2" rx="2.0" ry="2.0" fill="#3d4c2c" opacity="0.9"/><ellipse cx="99.7" cy="13.6" rx="1.7" ry="2.0" fill="#4f6238" opacity="0.95"/><ellipse cx="96.0" cy="80.5" rx="1.5" ry="1.6" fill="#4f6238" opacity="0.7"/><ellipse cx="88.8" cy="45.1" rx="1.8" ry="2.1" fill="#4f6238" opacity="0.71"/><ellipse cx="86.1" cy="20.2" rx="1.2" ry="1.4" fill="#2f3a24" opacity="0.83"/><ellipse cx="98.6" cy="15.7" rx="2.4" ry="2.5" fill="#6e8a52" opacity="0.86"/><ellipse cx="92.1" cy="41.3" rx="1.1" ry="0.8" fill="#2f3a24" opacity="0.63"/><ellipse cx="88.3" cy="45.9" rx="1.2" ry="1.4" fill="#6e8a52" opacity="0.65"/><ellipse cx="98.8" cy="41.7" rx="1.2" ry="1.4" fill="#2f3a24" opacity="0.65"/><ellipse cx="84.1" cy="92.2" rx="1.6" ry="1.6" fill="#2f3a24" opacity="0.73"/><ellipse cx="99.4" cy="76.3" rx="2.0" ry="1.8" fill="#3d4c2c" opacity="0.65"/><ellipse cx="86.4" cy="99.8" rx="1.5" ry="0.9" fill="#3d4c2c" opacity="0.81"/><ellipse cx="86.7" cy="58.0" rx="1.1" ry="0.7" fill="#4f6238" opacity="0.82"/><ellipse cx="88.9" cy="19.8" rx="2.4" ry="2.3" fill="#4f6238" opacity="0.71"/><ellipse cx="93.5" cy="37.3" rx="2.0" ry="2.2" fill="#4f6238" opacity="0.61"/><ellipse cx="87.3" cy="25.9" rx="1.2" ry="0.9" fill="#4f6238" opacity="0.9"/><ellipse cx="98.8" cy="22.5" rx="1.6" ry="1.9" fill="#2f3a24" opacity="0.89"/><ellipse cx="88.0" cy="33.3" rx="1.2" ry="0.9" fill="#2f3a24" opacity="0.87"/><ellipse cx="86.6" cy="95.2" rx="1.7" ry="1.3" fill="#2f3a24" opacity="0.77"/><ellipse cx="96.6" cy="71.4" rx="2.3" ry="2.1" fill="#2f3a24" opacity="0.77"/><ellipse cx="85.8" cy="71.5" rx="1.9" ry="1.4" fill="#3d4c2c" opacity="0.77"/><ellipse cx="94.3" cy="24.0" rx="1.1" ry="0.8" fill="#2f3a24" opacity="0.71"/><ellipse cx="100.0" cy="57.6" rx="2.1" ry="1.4" fill="#3d4c2c" opacity="0.88"/><ellipse cx="88.8" cy="23.9" rx="2.0" ry="2.0" fill="#6e8a52" opacity="0.83"/><ellipse cx="94.2" cy="93.1" rx="1.7" ry="1.9" fill="#4f6238" opacity="0.7"/><ellipse cx="94.4" cy="77.7" rx="1.5" ry="1.5" fill="#6e8a52" opacity="0.66"/><ellipse cx="96.8" cy="51.9" rx="2.4" ry="1.6" fill="#2f3a24" opacity="0.64"/><ellipse cx="91.0" cy="13.7" rx="1.3" ry="0.8" fill="#4f6238" opacity="0.94"/><ellipse cx="84.8" cy="9.7" rx="2.2" ry="2.0" fill="#2f3a24" opacity="0.64"/><ellipse cx="92.6" cy="49.3" rx="2.3" ry="2.3" fill="#2f3a24" opacity="0.61"/><ellipse cx="84.2" cy="9.5" rx="2.1" ry="2.1" fill="#4f6238" opacity="0.91"/><ellipse cx="93.7" cy="28.2" rx="1.9" ry="1.8" fill="#4f6238" opacity="0.74"/><ellipse cx="98.8" cy="62.4" rx="2.0" ry="2.3" fill="#4f6238" opacity="0.79"/><ellipse cx="85.8" cy="56.3" rx="2.4" ry="1.7" fill="#6e8a52" opacity="0.91"/><ellipse cx="88.5" cy="82.2" rx="2.4" ry="1.9" fill="#2f3a24" opacity="0.84"/><ellipse cx="84.4" cy="26.1" rx="1.0" ry="1.0" fill="#2f3a24" opacity="0.65"/><ellipse cx="90.3" cy="26.1" rx="2.1" ry="1.7" fill="#6e8a52" opacity="0.75"/><polygon points="3,84 25,81 55,82 78,83 86,90 82,96 40,97 4,93" fill="#e0dbd0" opacity="1"/><ellipse cx="38.3" cy="56" rx="4" ry="3" fill="#2a211f" opacity="1"/><ellipse cx="38.3" cy="60.5" rx="3.8" ry="4.3" fill="#d6b09a" opacity="1"/><polygon points="30,64 46,63 48,70 47,81 28.5,81" fill="#e8e6e8" opacity="1"/><polygon points="26,81 34,79 34,86 27,86" fill="#c6bba4" opacity="1"/><ellipse cx="50.5" cy="55" rx="4.5" ry="6" fill="#2a211f" opacity="1"/><ellipse cx="51" cy="56" rx="3.3" ry="3.8" fill="#d6b09a" opacity="1"/><polygon points="45,60 54,60 56,76 46,76" fill="#cda4a7" opacity="1"/><ellipse cx="58.5" cy="59" rx="4.6" ry="7" fill="#c7a37c" opacity="1"/><ellipse cx="59" cy="58.4" rx="3.2" ry="4" fill="#d6b09a" opacity="1"/><polygon points="54,63 64,63 66,74 72,84 80,90 58,93 50,88 52,76" fill="#cda4a7" opacity="1"/><ellipse cx="40.4" cy="71" rx="4" ry="4.5" fill="#b0906e" opacity="1"/><ellipse cx="40.4" cy="72.5" rx="3.3" ry="3.6" fill="#d6b09a" opacity="1"/><polygon points="34,76 46,75 45,86 33,88" fill="#dcb9bb" opacity="1"/><polygon points="33,86 40,84 40,89 31,90" fill="#c49a84" opacity="1"/><ellipse cx="55.9" cy="69.2" rx="3.8" ry="3" fill="#c7a37c" opacity="1"/><ellipse cx="55.9" cy="71.3" rx="3.3" ry="3.6" fill="#d6b09a" opacity="1"/><polygon points="51,74 60,74 60,83 51,83" fill="#e8e6e8" opacity="1"/><polygon points="45,83 58,83 55,91 44,91" fill="#c6bba4" opacity="1"/></g></svg>
<svg style="left:1377px;top:164px;overflow:hidden" width="46" height="44" viewBox="0 0 100 100" preserveAspectRatio="none"><defs><filter id="p20" x="-5%" y="-5%" width="110%" height="110%"><feGaussianBlur stdDeviation="0.8"/></filter></defs><g filter="url(#p20)"><defs><linearGradient id="p19" x1="0" y1="0" x2="0" y2="1"><stop offset="0" stop-color="#55663f"/><stop offset="1" stop-color="#6d7a50"/></linearGradient></defs><rect x="0" y="0" width="100" height="100" fill="url(#p19)"/><ellipse cx="24.4" cy="50.2" rx="4.0" ry="4.3" fill="#66754a" opacity="0.88"/><ellipse cx="25.6" cy="86.7" rx="6.3" ry="5.5" fill="#6f7e4c" opacity="0.76"/><ellipse cx="34.2" cy="66.1" rx="5.3" ry="4.1" fill="#4a5a35" opacity="0.89"/><ellipse cx="2.8" cy="25.8" rx="5.9" ry="6.4" fill="#5f6f45" opacity="0.69"/><ellipse cx="30.0" cy="44.9" rx="7.8" ry="8.6" fill="#66754a" opacity="0.86"/><ellipse cx="2.9" cy="95.6" rx="4.0" ry="2.4" fill="#4a5a35" opacity="0.94"/><ellipse cx="82.4" cy="82.6" rx="7.9" ry="7.6" fill="#5f6f45" opacity="0.77"/><ellipse cx="94.6" cy="93.2" rx="7.1" ry="8.2" fill="#66754a" opacity="0.94"/><ellipse cx="37.0" cy="48.5" rx="8.8" ry="9.4" fill="#98a070" opacity="0.69"/><ellipse cx="45.0" cy="11.8" rx="7.6" ry="7.5" fill="#8e9864" opacity="0.88"/><ellipse cx="78.6" cy="99.7" rx="8.6" ry="8.5" fill="#6f7e4c" opacity="0.59"/><ellipse cx="80.9" cy="30.7" rx="6.2" ry="5.4" fill="#4a5a35" opacity="0.68"/><ellipse cx="52.9" cy="87.9" rx="8.2" ry="6.9" fill="#44532f" opacity="0.64"/><ellipse cx="72.9" cy="58.6" rx="4.3" ry="5.1" fill="#4a5a35" opacity="0.68"/><ellipse cx="30.8" cy="66.7" rx="5.7" ry="4.1" fill="#7d8a58" opacity="0.9"/><ellipse cx="29.4" cy="48.1" rx="3.9" ry="3.8" fill="#8e9864" opacity="0.9"/><ellipse cx="17.9" cy="29.8" rx="8.3" ry="8.6" fill="#5f6f45" opacity="0.82"/><ellipse cx="72.6" cy="55.7" rx="6.0" ry="7.1" fill="#44532f" opacity="0.78"/><ellipse cx="59.3" cy="43.8" rx="5.7" ry="4.7" fill="#44532f" opacity="0.61"/><ellipse cx="68.6" cy="97.4" rx="5.4" ry="6.2" fill="#8e9864" opacity="0.68"/><ellipse cx="40.2" cy="98.5" rx="8.8" ry="7.1" fill="#a3a56f" opacity="0.71"/><ellipse cx="74.3" cy="32.4" rx="6.6" ry="4.0" fill="#5f6f45" opacity="0.71"/><ellipse cx="94.7" cy="80.8" rx="4.6" ry="3.8" fill="#6f7e4c" opacity="0.68"/><ellipse cx="4.9" cy="27.4" rx="8.6" ry="9.0" fill="#4a5a35" opacity="0.67"/><ellipse cx="45.2" cy="60.0" rx="7.4" ry="8.3" fill="#6f7e4c" opacity="0.61"/><ellipse cx="82.5" cy="27.4" rx="7.4" ry="8.6" fill="#98a070" opacity="0.89"/><ellipse cx="24.1" cy="77.0" rx="4.1" ry="4.5" fill="#56663d" opacity="0.9"/><ellipse cx="93.9" cy="72.4" rx="3.1" ry="2.8" fill="#5f6f45" opacity="0.95"/><ellipse cx="77.0" cy="47.7" rx="3.8" ry="4.2" fill="#6f7e4c" opacity="0.71"/><ellipse cx="20.6" cy="94.1" rx="8.1" ry="7.1" fill="#56663d" opacity="0.77"/><ellipse cx="4.6" cy="29.6" rx="3.5" ry="2.5" fill="#5f6f45" opacity="0.81"/><ellipse cx="60.4" cy="51.3" rx="8.9" ry="9.7" fill="#7d8a58" opacity="0.64"/><ellipse cx="80.7" cy="84.0" rx="4.4" ry="4.4" fill="#a3a56f" opacity="0.94"/><ellipse cx="20.8" cy="80.4" rx="4.2" ry="3.1" fill="#5f6f45" opacity="0.91"/><ellipse cx="55.9" cy="85.1" rx="7.4" ry="6.5" fill="#4a5a35" opacity="0.55"/><ellipse cx="55" cy="30" rx="12" ry="14" fill="#d6b09a" opacity="1"/><ellipse cx="55" cy="20.9" rx="12.24" ry="7.0" fill="#7a5a44" opacity="1"/><polygon points="35,45 75,45 78,85 32,85" fill="#e8e6e8" opacity="1"/><polygon points="28,82 80,82 82,100 25,100" fill="#b9ae94" opacity="1"/></g><rect x="0.5" y="0.5" width="99" height="99" fill="none" stroke="#26332c" stroke-width="2"/></svg>
<svg style="left:1377px;top:211px;overflow:hidden" width="46" height="44" viewBox="0 0 100 100" preserveAspectRatio="none"><defs><filter id="p22" x="-5%" y="-5%" width="110%" height="110%"><feGaussianBlur stdDeviation="0.8"/></filter></defs><g filter="url(#p22)"><defs><linearGradient id="p21" x1="0" y1="0" x2="0" y2="1"><stop offset="0" stop-color="#4a5a36"/><stop offset="1" stop-color="#5d6c46"/></linearGradient></defs><rect x="0" y="0" width="100" height="100" fill="url(#p21)"/><ellipse cx="97.8" cy="5.5" rx="7.4" ry="6.5" fill="#26301d" opacity="0.71"/><ellipse cx="91.9" cy="15.9" rx="9.0" ry="7.6" fill="#5f6f45" opacity="0.94"/><ellipse cx="44.0" cy="0.1" rx="6.3" ry="5.4" fill="#66754a" opacity="0.58"/><ellipse cx="17.0" cy="23.1" rx="4.6" ry="5.0" fill="#2f3b23" opacity="0.6"/><ellipse cx="3.4" cy="61.9" rx="5.3" ry="3.4" fill="#2f3b23" opacity="0.82"/><ellipse cx="88.2" cy="54.4" rx="3.9" ry="3.5" fill="#3d4b2f" opacity="0.83"/><ellipse cx="28.0" cy="32.2" rx="7.7" ry="6.6" fill="#1f2718" opacity="0.81"/><ellipse cx="42.7" cy="2.8" rx="3.0" ry="3.0" fill="#3d4b2f" opacity="0.74"/><ellipse cx="13.4" cy="72.3" rx="7.6" ry="4.9" fill="#1f2718" opacity="0.64"/><ellipse cx="20.0" cy="57.0" rx="3.4" ry="2.4" fill="#66754a" opacity="0.61"/><ellipse cx="96.0" cy="85.3" rx="7.9" ry="6.9" fill="#5f6f45" opacity="0.87"/><ellipse cx="23.9" cy="68.7" rx="8.1" ry="8.5" fill="#2f3b23" opacity="0.76"/><ellipse cx="67.1" cy="7.6" rx="7.0" ry="4.8" fill="#1f2718" opacity="0.91"/><ellipse cx="37.2" cy="7.0" rx="3.3" ry="3.0" fill="#5f6f45" opacity="0.59"/><ellipse cx="73.5" cy="37.6" rx="8.1" ry="4.9" fill="#44532f" opacity="0.73"/><ellipse cx="4.6" cy="54.7" rx="7.8" ry="5.4" fill="#66754a" opacity="0.68"/><ellipse cx="20.8" cy="25.2" rx="8.0" ry="5.2" fill="#44532f" opacity="0.57"/><ellipse cx="9.1" cy="68.4" rx="7.7" ry="5.7" fill="#26301d" opacity="0.68"/><ellipse cx="87.5" cy="29.5" rx="4.0" ry="3.4" fill="#56663d" opacity="0.74"/><ellipse cx="81.8" cy="4.8" rx="7.5" ry="7.7" fill="#44532f" opacity="0.65"/><ellipse cx="79.5" cy="68.4" rx="6.3" ry="6.3" fill="#1f2718" opacity="0.94"/><ellipse cx="60.0" cy="48.1" rx="8.9" ry="6.0" fill="#4a5a35" opacity="0.92"/><ellipse cx="11.6" cy="45.2" rx="8.8" ry="5.6" fill="#44532f" opacity="0.91"/><ellipse cx="60.9" cy="5.7" rx="7.7" ry="5.8" fill="#3d4b2f" opacity="0.62"/><ellipse cx="1.6" cy="50.9" rx="4.3" ry="4.2" fill="#36442a" opacity="0.59"/><ellipse cx="69.5" cy="83.0" rx="3.3" ry="3.1" fill="#3d4b2f" opacity="0.86"/><ellipse cx="26.5" cy="53.0" rx="7.1" ry="6.5" fill="#2f3b23" opacity="0.91"/><ellipse cx="96.6" cy="12.5" rx="3.1" ry="3.0" fill="#1f2718" opacity="0.63"/><ellipse cx="33.7" cy="97.2" rx="7.5" ry="5.5" fill="#5f6f45" opacity="0.6"/><ellipse cx="72.0" cy="42.3" rx="3.9" ry="4.6" fill="#26301d" opacity="0.64"/><ellipse cx="85.7" cy="53.4" rx="5.8" ry="5.0" fill="#56663d" opacity="0.83"/><ellipse cx="83.5" cy="93.4" rx="8.7" ry="8.8" fill="#2f3b23" opacity="0.87"/><ellipse cx="65.1" cy="11.0" rx="8.9" ry="6.9" fill="#44532f" opacity="0.83"/><ellipse cx="85.7" cy="11.8" rx="8.6" ry="6.8" fill="#2f3b23" opacity="0.86"/><ellipse cx="64.7" cy="27.5" rx="6.8" ry="6.1" fill="#44532f" opacity="0.84"/><ellipse cx="34" cy="37.2" rx="15.95" ry="20.4" fill="#2a211f" opacity="1"/><ellipse cx="34" cy="30" rx="11" ry="12" fill="#d6b09a" opacity="1"/><ellipse cx="34" cy="21.6" rx="11.55" ry="5.4" fill="#2a211f" opacity="1"/><polygon points="14,45 52,45 55,100 12,100" fill="#cda4a7" opacity="1"/><ellipse cx="66" cy="48.6" rx="13.0" ry="16.200000000000003" fill="#c7a37c" opacity="1"/><ellipse cx="66" cy="45" rx="10" ry="12" fill="#d6b09a" opacity="1"/><ellipse cx="66" cy="36.6" rx="10.5" ry="5.4" fill="#c7a37c" opacity="1"/><polygon points="48,60 86,60 90,100 46,100" fill="#dcb9bb" opacity="1"/></g><rect x="0.5" y="0.5" width="99" height="99" fill="none" stroke="#26332c" stroke-width="2"/></svg>
<div class="a" style="left:1175px;top:135px;width:13px;height:17px;background:#f4f4f4;border-bottom-right-radius:4px"></div>
<svg style="left:1174px;top:136px" width="10" height="10" viewBox="0 0 10 10"><rect x="0.6" y="0.6" width="8.8" height="8.8" rx="1.6" fill="#a9a9a9" stroke="#6f6f6f" stroke-width="1.2"/><rect x="2" y="2.2" width="6" height="1.8" fill="#555"/><rect x="1.4" y="4.4" width="7.2" height="0.6" fill="#ddd"/><rect x="2.2" y="5.6" width="2" height="2" fill="#555"/><rect x="5.8" y="5.6" width="2" height="2" fill="#555"/></svg>
<div class="t" style="left:1225.5px;top:292px;width:200px;text-align:center;font-size:10.95px;color:#7e7e7e">Side 06 - Side 07</div>
<div class="a" style="left:210px;top:312px;width:300px;height:148px;background:#3f524c"></div>
<svg style="left:240px;top:320px;overflow:hidden" width="90" height="132" viewBox="0 0 100 100" preserveAspectRatio="none"><defs><filter id="p24" x="-5%" y="-5%" width="110%" height="110%"><feGaussianBlur stdDeviation="0.8"/></filter><filter id="p25" x="-5%" y="-5%" width="110%" height="110%"><feGaussianBlur stdDeviation="0.3"/></filter></defs><rect x="0" y="0" width="100" height="100" fill="url(#p23)"/><g filter="url(#p24)"><defs><linearGradient id="p23" x1="0" y1="0" x2="0" y2="1"><stop offset="0" stop-color="#66735a"/><stop offset="0.3" stop-color="#4e5a40"/><stop offset="0.48" stop-color="#404c36"/><stop offset="0.62" stop-color="#3a4a30"/><stop offset="0.63" stop-color="#76964d"/><stop offset="1" stop-color="#7a9850"/></linearGradient></defs><rect x="0" y="0" width="100" height="100" fill="url(#p23)"/><ellipse cx="69.7" cy="12.2" rx="4.4" ry="3.5" fill="#4a5a35" opacity="0.82"/><ellipse cx="41.7" cy="7.9" rx="2.2" ry="1.9" fill="#a3a56f" opacity="0.63"/><ellipse cx="40.4" cy="11.1" rx="2.3" ry="1.6" fill="#7d8a58" opacity="0.67"/><ellipse cx="48.7" cy="16.0" rx="2.9" ry="2.2" fill="#4a5a35" opacity="0.68"/><ellipse cx="59.1" cy="8.2" rx="4.5" ry="4.3" fill="#44532f" opacity="0.6"/><ellipse cx="64.5" cy="2.9" rx="2.2" ry="1.8" fill="#7d8a58" opacity="0.72"/><ellipse cx="45.1" cy="6.8" rx="2.0" ry="1.4" fill="#5f6f45" opacity="0.64"/><ellipse cx="43.8" cy="4.8" rx="3.9" ry="3.7" fill="#7d8a58" opacity="0.83"/><ellipse cx="56.1" cy="19.6" rx="2.6" ry="1.7" fill="#5f6f45" opacity="0.54"/><ellipse cx="81.2" cy="14.3" rx="3.9" ry="3.3" fill="#4a5a35" opacity="0.79"/><ellipse cx="83.3" cy="18.2" rx="4.7" ry="5.2" fill="#66754a" opacity="0.69"/><ellipse cx="67.0" cy="19.2" rx="4.1" ry="4.5" fill="#a3a56f" opacity="0.55"/><ellipse cx="41.4" cy="8.8" rx="4.0" ry="3.0" fill="#44532f" opacity="0.68"/><ellipse cx="59.2" cy="1.7" rx="4.6" ry="3.3" fill="#a3a56f" opacity="0.66"/><ellipse cx="48.8" cy="19.7" rx="4.9" ry="4.6" fill="#8e9864" opacity="0.84"/><ellipse cx="78.8" cy="3.1" rx="2.3" ry="1.6" fill="#8e9864" opacity="0.67"/><ellipse cx="66.1" cy="9.6" rx="3.9" ry="4.0" fill="#56663d" opacity="0.81"/><ellipse cx="83.5" cy="11.7" rx="2.2" ry="1.4" fill="#a3a56f" opacity="0.85"/><ellipse cx="79.5" cy="16.7" rx="3.5" ry="3.1" fill="#44532f" opacity="0.74"/><ellipse cx="43.2" cy="7.6" rx="3.3" ry="3.6" fill="#66754a" opacity="0.61"/><ellipse cx="94.4" cy="15.2" rx="4.8" ry="4.5" fill="#98a070" opacity="0.76"/><ellipse cx="77.0" cy="21.5" rx="3.9" ry="3.1" fill="#44532f" opacity="0.87"/><ellipse cx="50.7" cy="20.8" rx="3.2" ry="2.2" fill="#66754a" opacity="0.86"/><ellipse cx="48.6" cy="15.2" rx="4.2" ry="3.7" fill="#44532f" opacity="0.77"/><ellipse cx="61.7" cy="13.5" rx="3.5" ry="2.7" fill="#6f7e4c" opacity="0.65"/><ellipse cx="81.7" cy="2.8" rx="3.9" ry="4.3" fill="#8e9864" opacity="0.69"/><ellipse cx="95.9" cy="14.0" rx="3.5" ry="2.5" fill="#8e9864" opacity="0.72"/><ellipse cx="71.0" cy="11.8" rx="2.8" ry="2.5" fill="#a3a56f" opacity="0.51"/><ellipse cx="75.6" cy="17.1" rx="4.8" ry="3.5" fill="#5f6f45" opacity="0.81"/><ellipse cx="86.5" cy="0.1" rx="3.5" ry="2.5" fill="#98a070" opacity="0.73"/><ellipse cx="44.5" cy="21.8" rx="4.7" ry="4.2" fill="#2f3b23" opacity="0.55"/><ellipse cx="7.9" cy="36.4" rx="2.9" ry="3.1" fill="#1f2718" opacity="0.74"/><ellipse cx="61.1" cy="18.9" rx="4.5" ry="5.1" fill="#4a5a35" opacity="0.49"/><ellipse cx="59.9" cy="11.2" rx="2.1" ry="2.4" fill="#44532f" opacity="0.69"/><ellipse cx="22.8" cy="34.5" rx="3.3" ry="3.2" fill="#5f6f45" opacity="0.68"/><ellipse cx="10.5" cy="11.3" rx="5.0" ry="4.9" fill="#2f3b23" opacity="0.41"/><ellipse cx="92.0" cy="16.8" rx="2.0" ry="2.3" fill="#5f6f45" opacity="0.42"/><ellipse cx="6.1" cy="12.1" rx="3.3" ry="2.5" fill="#6a7258" opacity="0.62"/><ellipse cx="92.1" cy="12.8" rx="3.5" ry="3.3" fill="#56663d" opacity="0.73"/><ellipse cx="45.6" cy="39.7" rx="4.9" ry="3.0" fill="#4a5a35" opacity="0.49"/><ellipse cx="75.0" cy="37.2" rx="2.5" ry="2.2" fill="#56663d" opacity="0.45"/><ellipse cx="36.1" cy="15.1" rx="2.1" ry="1.6" fill="#2f3b23" opacity="0.57"/><ellipse cx="17.9" cy="25.8" rx="2.9" ry="3.1" fill="#66754a" opacity="0.62"/><ellipse cx="10.2" cy="42.2" rx="2.1" ry="1.7" fill="#44532f" opacity="0.68"/><ellipse cx="75.1" cy="35.6" rx="3.4" ry="2.2" fill="#6a7258" opacity="0.65"/><ellipse cx="99.3" cy="29.1" rx="3.3" ry="2.3" fill="#7a8068" opacity="0.77"/><ellipse cx="25.8" cy="24.1" rx="3.1" ry="2.9" fill="#7a8068" opacity="0.57"/><ellipse cx="92.4" cy="26.4" rx="2.2" ry="2.0" fill="#56663d" opacity="0.42"/><ellipse cx="82.6" cy="44.7" rx="3.1" ry="2.5" fill="#6a7258" opacity="0.76"/><ellipse cx="46.2" cy="13.4" rx="3.5" ry="3.0" fill="#4a5a35" opacity="0.49"/><ellipse cx="85.1" cy="26.9" rx="4.9" ry="3.1" fill="#6a7258" opacity="0.45"/><ellipse cx="24.4" cy="26.4" rx="2.8" ry="2.5" fill="#66754a" opacity="0.56"/><ellipse cx="63.1" cy="31.7" rx="2.3" ry="2.7" fill="#36442a" opacity="0.52"/><ellipse cx="81.7" cy="18.6" rx="2.3" ry="2.3" fill="#7a8068" opacity="0.41"/><ellipse cx="44.5" cy="44.1" rx="4.0" ry="4.7" fill="#56663d" opacity="0.57"/><ellipse cx="57.9" cy="40.7" rx="2.6" ry="1.9" fill="#7a8068" opacity="0.75"/><ellipse cx="65.1" cy="27.8" rx="3.1" ry="3.3" fill="#66754a" opacity="0.52"/><ellipse cx="25.5" cy="39.6" rx="3.0" ry="3.2" fill="#2f3b23" opacity="0.41"/><ellipse cx="10.9" cy="35.9" rx="4.0" ry="3.5" fill="#44532f" opacity="0.58"/><ellipse cx="20.1" cy="33.7" rx="3.6" ry="3.9" fill="#2f3b23" opacity="0.73"/><ellipse cx="56.6" cy="19.0" rx="4.8" ry="4.6" fill="#2f3b23" opacity="0.52"/><ellipse cx="42.1" cy="35.9" rx="4.2" ry="4.1" fill="#56663d" opacity="0.41"/><ellipse cx="91.0" cy="40.0" rx="3.5" ry="2.6" fill="#26301d" opacity="0.47"/><ellipse cx="46.8" cy="29.7" rx="2.3" ry="2.4" fill="#5f6f45" opacity="0.63"/><ellipse cx="58.2" cy="21.4" rx="2.4" ry="1.9" fill="#6a7258" opacity="0.72"/><ellipse cx="33.9" cy="27.7" rx="2.3" ry="1.8" fill="#36442a" opacity="0.51"/><ellipse cx="51.2" cy="43.1" rx="2.5" ry="2.5" fill="#1f2718" opacity="0.6"/><ellipse cx="47.8" cy="21.4" rx="3.1" ry="3.6" fill="#1f2718" opacity="0.65"/><ellipse cx="49.9" cy="43.1" rx="4.9" ry="5.7" fill="#7a8068" opacity="0.77"/><ellipse cx="54.9" cy="13.6" rx="3.5" ry="3.9" fill="#36442a" opacity="0.77"/><ellipse cx="25.3" cy="20.6" rx="4.7" ry="4.0" fill="#26301d" opacity="0.58"/><ellipse cx="37.7" cy="20.9" rx="3.4" ry="3.2" fill="#66754a" opacity="0.43"/><ellipse cx="51.1" cy="16.9" rx="2.0" ry="1.9" fill="#36442a" opacity="0.8"/><ellipse cx="68.3" cy="47.6" rx="4.8" ry="3.0" fill="#7a8068" opacity="0.78"/><ellipse cx="6.7" cy="47.8" rx="3.3" ry="3.3" fill="#26301d" opacity="0.58"/><ellipse cx="59.0" cy="34.9" rx="2.6" ry="1.8" fill="#56663d" opacity="0.75"/><ellipse cx="31.4" cy="13.7" rx="4.3" ry="4.1" fill="#2f3b23" opacity="0.61"/><ellipse cx="7.1" cy="47.8" rx="2.3" ry="1.7" fill="#5f6f45" opacity="0.48"/><ellipse cx="57.3" cy="12.4" rx="3.0" ry="2.0" fill="#3d4b2f" opacity="0.52"/><ellipse cx="22.9" cy="39.5" rx="4.2" ry="2.9" fill="#4a5a35" opacity="0.47"/><polygon points="20,0 24,0 24,52 20,52" fill="#2a2a1e" opacity="0.6"/><polygon points="78,10 82,10 86,55 82,55" fill="#3a3326" opacity="0.6"/><path d="M0 49 Q25 46 50 49 Q75 47 100 49 V62 H0 Z" fill="#34472b" opacity="0.9"/><ellipse cx="92.8" cy="69.4" rx="3.9" ry="2.9" fill="#647f42" opacity="0.42"/><ellipse cx="67.1" cy="69.3" rx="2.0" ry="1.2" fill="#7f9a57" opacity="0.69"/><ellipse cx="17.2" cy="67.5" rx="2.7" ry="2.4" fill="#7f9a57" opacity="0.68"/><ellipse cx="64.6" cy="88.6" rx="3.3" ry="2.6" fill="#647f42" opacity="0.53"/><ellipse cx="61.7" cy="97.6" rx="2.3" ry="1.8" fill="#647f42" opacity="0.66"/><ellipse cx="1.6" cy="95.0" rx="3.0" ry="2.2" fill="#86a05d" opacity="0.41"/><ellipse cx="17.3" cy="90.1" rx="2.9" ry="2.8" fill="#6a8646" opacity="0.36"/><ellipse cx="13.8" cy="86.9" rx="2.6" ry="2.3" fill="#7f9a57" opacity="0.64"/><ellipse cx="37.0" cy="83.9" rx="3.7" ry="3.0" fill="#647f42" opacity="0.52"/><ellipse cx="38.8" cy="77.8" rx="1.5" ry="1.4" fill="#86a05d" opacity="0.33"/><ellipse cx="97.8" cy="90.5" rx="2.6" ry="2.7" fill="#74904e" opacity="0.56"/><ellipse cx="33.3" cy="88.3" rx="3.8" ry="4.4" fill="#6a8646" opacity="0.56"/><ellipse cx="26.0" cy="99.7" rx="4.0" ry="4.7" fill="#647f42" opacity="0.68"/><ellipse cx="57.1" cy="94.0" rx="2.5" ry="1.6" fill="#7f9a57" opacity="0.46"/><ellipse cx="69.2" cy="83.8" rx="1.9" ry="1.8" fill="#6a8646" opacity="0.55"/><ellipse cx="34.3" cy="78.1" rx="2.4" ry="1.5" fill="#74904e" opacity="0.57"/><ellipse cx="7.6" cy="73.4" rx="3.0" ry="2.4" fill="#6a8646" opacity="0.37"/><ellipse cx="99.1" cy="87.9" rx="2.3" ry="2.2" fill="#86a05d" opacity="0.66"/><ellipse cx="74.0" cy="77.8" rx="2.3" ry="1.7" fill="#86a05d" opacity="0.64"/><ellipse cx="68.3" cy="82.6" rx="2.7" ry="2.2" fill="#647f42" opacity="0.66"/><ellipse cx="96.9" cy="71.7" rx="3.8" ry="3.2" fill="#647f42" opacity="0.35"/><ellipse cx="71.3" cy="75.8" rx="1.9" ry="1.9" fill="#7f9a57" opacity="0.36"/><ellipse cx="43.6" cy="82.7" rx="2.3" ry="2.6" fill="#6a8646" opacity="0.64"/><ellipse cx="88.8" cy="88.5" rx="3.4" ry="3.6" fill="#74904e" opacity="0.57"/><ellipse cx="75.9" cy="65.2" rx="1.9" ry="1.9" fill="#647f42" opacity="0.41"/><ellipse cx="91.6" cy="89.6" rx="1.5" ry="1.3" fill="#647f42" opacity="0.67"/><ellipse cx="31.6" cy="98.7" rx="2.3" ry="2.5" fill="#74904e" opacity="0.6"/><ellipse cx="73.2" cy="72.6" rx="3.2" ry="3.1" fill="#74904e" opacity="0.35"/><ellipse cx="52.3" cy="71.8" rx="1.8" ry="1.8" fill="#86a05d" opacity="0.53"/><ellipse cx="44.2" cy="77.0" rx="1.9" ry="1.6" fill="#6a8646" opacity="0.7"/></g><g filter="url(#p25)"><ellipse cx="43.5" cy="40" rx="6.5" ry="9" fill="#c7a37c" opacity="1"/><ellipse cx="44" cy="37.7" rx="4" ry="4.5" fill="#d6b09a" opacity="1"/><polygon points="37,44 50,43 50,62 53,94 30,94 35,62" fill="#dcb9bb" opacity="1"/><polygon points="52,65 71,65 69,93 55,93" fill="#d9d2c2" opacity="1"/><ellipse cx="54" cy="33.5" rx="5" ry="3" fill="#2a211f" opacity="1"/><ellipse cx="54" cy="37" rx="4.5" ry="4.6" fill="#d6b09a" opacity="1"/><polygon points="46,41 70,40 73,52 72,65 50,65" fill="#e8e6e8" opacity="1"/></g><rect x="0.4" y="0.3" width="99.2" height="99.4" fill="none" stroke="#26332c" stroke-width="1.2"/></svg>
<svg style="left:390px;top:319px;overflow:hidden" width="90" height="133" viewBox="0 0 100 100" preserveAspectRatio="none"><defs><filter id="p27" x="-5%" y="-5%" width="110%" height="110%"><feGaussianBlur stdDeviation="0.8"/></filter><filter id="p28" x="-5%" y="-5%" width="110%" height="110%"><feGaussianBlur stdDeviation="0.3"/></filter></defs><rect x="0" y="0" width="100" height="100" fill="url(#p26)"/><g filter="url(#p27)"><defs><linearGradient id="p26" x1="0" y1="0" x2="0" y2="1"><stop offset="0" stop-color="#6e7c5e"/><stop offset="0.4" stop-color="#56624a"/><stop offset="0.8" stop-color="#46543a"/><stop offset="1" stop-color="#4f6040"/></linearGradient></defs><rect x="0" y="0" width="100" height="100" fill="url(#p26)"/><ellipse cx="32.4" cy="18.6" rx="3.0" ry="3.6" fill="#8b9678" opacity="0.61"/><ellipse cx="19.9" cy="1.6" rx="3.8" ry="2.3" fill="#6a7758" opacity="0.87"/><ellipse cx="45.7" cy="3.9" rx="5.6" ry="3.5" fill="#7d8a6a" opacity="0.66"/><ellipse cx="58.3" cy="29.0" rx="4.3" ry="4.7" fill="#93a080" opacity="0.88"/><ellipse cx="98.0" cy="19.9" rx="4.0" ry="2.8" fill="#8b9678" opacity="0.82"/><ellipse cx="87.3" cy="10.6" rx="5.3" ry="4.0" fill="#8b9678" opacity="0.66"/><ellipse cx="6.9" cy="7.5" rx="4.2" ry="3.6" fill="#93a080" opacity="0.81"/><ellipse cx="59.4" cy="10.7" rx="6.8" ry="4.9" fill="#8b9678" opacity="0.56"/><ellipse cx="44.1" cy="16.4" rx="4.0" ry="4.1" fill="#6a7758" opacity="0.78"/><ellipse cx="85.5" cy="1.1" rx="3.8" ry="3.3" fill="#6a7758" opacity="0.88"/><ellipse cx="27.0" cy="4.3" rx="3.2" ry="3.0" fill="#8b9678" opacity="0.55"/><ellipse cx="60.1" cy="6.4" rx="5.5" ry="4.2" fill="#93a080" opacity="0.67"/><ellipse cx="25.9" cy="11.3" rx="5.9" ry="5.7" fill="#93a080" opacity="0.5"/><ellipse cx="84.8" cy="6.5" rx="4.2" ry="4.0" fill="#6a7758" opacity="0.77"/><ellipse cx="5.0" cy="12.8" rx="4.3" ry="3.5" fill="#8b9678" opacity="0.86"/><ellipse cx="67.8" cy="16.7" rx="4.4" ry="3.9" fill="#6a7758" opacity="0.65"/><ellipse cx="56.8" cy="22.0" rx="4.1" ry="4.6" fill="#6a7758" opacity="0.79"/><ellipse cx="64.6" cy="24.9" rx="4.5" ry="3.8" fill="#6a7758" opacity="0.65"/><ellipse cx="57.5" cy="17.0" rx="5.4" ry="3.5" fill="#6a7758" opacity="0.7"/><ellipse cx="48.2" cy="27.3" rx="5.7" ry="6.2" fill="#93a080" opacity="0.66"/><ellipse cx="44.9" cy="15.0" rx="3.5" ry="3.8" fill="#7d8a6a" opacity="0.73"/><ellipse cx="53.5" cy="22.2" rx="3.9" ry="3.9" fill="#8b9678" opacity="0.58"/><ellipse cx="45.3" cy="0.4" rx="3.6" ry="3.2" fill="#8b9678" opacity="0.55"/><ellipse cx="76.2" cy="19.3" rx="5.7" ry="6.7" fill="#93a080" opacity="0.7"/><ellipse cx="2.7" cy="11.1" rx="4.6" ry="4.5" fill="#6a7758" opacity="0.72"/><ellipse cx="32.7" cy="27.0" rx="3.1" ry="2.3" fill="#6a7758" opacity="0.58"/><ellipse cx="84.2" cy="18.0" rx="5.5" ry="5.4" fill="#93a080" opacity="0.62"/><ellipse cx="6.4" cy="25.7" rx="4.5" ry="4.3" fill="#6a7758" opacity="0.81"/><ellipse cx="5.4" cy="7.8" rx="5.8" ry="4.6" fill="#93a080" opacity="0.63"/><ellipse cx="20.6" cy="21.8" rx="5.0" ry="3.2" fill="#8b9678" opacity="0.71"/><ellipse cx="82.3" cy="22.3" rx="4.6" ry="3.6" fill="#6a7758" opacity="0.88"/><ellipse cx="80.2" cy="28.7" rx="5.3" ry="4.9" fill="#6a7758" opacity="0.69"/><ellipse cx="51.7" cy="28.4" rx="6.0" ry="5.1" fill="#6a7758" opacity="0.61"/><ellipse cx="74.1" cy="4.9" rx="4.6" ry="3.0" fill="#8b9678" opacity="0.72"/><ellipse cx="23.9" cy="12.7" rx="6.0" ry="3.9" fill="#8b9678" opacity="0.76"/><ellipse cx="7.3" cy="57.7" rx="7.0" ry="5.6" fill="#3d4b2f" opacity="0.65"/><ellipse cx="30.7" cy="64.5" rx="6.9" ry="4.7" fill="#26301d" opacity="0.49"/><ellipse cx="14.3" cy="26.5" rx="6.2" ry="5.4" fill="#4a5a35" opacity="0.58"/><ellipse cx="77.2" cy="30.0" rx="4.3" ry="2.6" fill="#2f3b23" opacity="0.75"/><ellipse cx="26.9" cy="45.4" rx="4.5" ry="4.0" fill="#66754a" opacity="0.54"/><ellipse cx="49.7" cy="35.2" rx="6.8" ry="7.7" fill="#1f2718" opacity="0.53"/><ellipse cx="45.3" cy="73.1" rx="3.2" ry="2.5" fill="#4a5a35" opacity="0.55"/><ellipse cx="85.0" cy="33.1" rx="3.2" ry="2.8" fill="#4a5a35" opacity="0.75"/><ellipse cx="54.1" cy="55.4" rx="6.6" ry="5.6" fill="#56663d" opacity="0.71"/><ellipse cx="49.9" cy="77.3" rx="3.3" ry="2.9" fill="#36442a" opacity="0.42"/><ellipse cx="30.4" cy="42.0" rx="4.4" ry="5.3" fill="#66754a" opacity="0.71"/><ellipse cx="50.2" cy="74.0" rx="6.8" ry="7.3" fill="#2f3b23" opacity="0.79"/><ellipse cx="1.3" cy="60.3" rx="3.8" ry="3.6" fill="#26301d" opacity="0.48"/><ellipse cx="85.1" cy="71.8" rx="3.9" ry="3.1" fill="#36442a" opacity="0.5"/><ellipse cx="59.3" cy="69.5" rx="6.1" ry="5.6" fill="#36442a" opacity="0.76"/><ellipse cx="38.2" cy="30.6" rx="6.5" ry="6.4" fill="#26301d" opacity="0.68"/><ellipse cx="30.0" cy="51.4" rx="3.7" ry="2.8" fill="#36442a" opacity="0.47"/><ellipse cx="52.2" cy="47.5" rx="6.3" ry="6.9" fill="#26301d" opacity="0.73"/><ellipse cx="96.9" cy="53.0" rx="4.7" ry="4.1" fill="#3d4b2f" opacity="0.7"/><ellipse cx="61.5" cy="42.9" rx="3.1" ry="2.5" fill="#1f2718" opacity="0.71"/><ellipse cx="13.1" cy="47.8" rx="3.5" ry="2.8" fill="#3d4b2f" opacity="0.66"/><ellipse cx="31.8" cy="44.5" rx="3.0" ry="3.3" fill="#3d4b2f" opacity="0.79"/><ellipse cx="66.2" cy="36.5" rx="6.5" ry="4.2" fill="#56663d" opacity="0.74"/><ellipse cx="30.1" cy="69.9" rx="3.1" ry="2.1" fill="#26301d" opacity="0.79"/><ellipse cx="67.8" cy="65.3" rx="5.2" ry="5.9" fill="#56663d" opacity="0.62"/><ellipse cx="14.2" cy="61.6" rx="7.0" ry="5.2" fill="#36442a" opacity="0.44"/><ellipse cx="82.5" cy="54.6" rx="5.2" ry="5.0" fill="#3d4b2f" opacity="0.72"/><ellipse cx="29.8" cy="48.6" rx="4.4" ry="4.6" fill="#5f6f45" opacity="0.57"/><ellipse cx="10.2" cy="40.2" rx="5.0" ry="3.4" fill="#44532f" opacity="0.78"/><ellipse cx="71.9" cy="55.4" rx="5.4" ry="4.8" fill="#66754a" opacity="0.6"/><ellipse cx="74.7" cy="60.5" rx="3.3" ry="2.3" fill="#2f3b23" opacity="0.53"/><ellipse cx="3.7" cy="48.7" rx="3.8" ry="4.4" fill="#56663d" opacity="0.78"/><ellipse cx="53.5" cy="39.6" rx="6.9" ry="5.5" fill="#4a5a35" opacity="0.5"/><ellipse cx="40.0" cy="60.2" rx="6.7" ry="7.8" fill="#5f6f45" opacity="0.6"/><ellipse cx="74.3" cy="66.1" rx="5.0" ry="5.3" fill="#2f3b23" opacity="0.44"/><ellipse cx="99.8" cy="51.6" rx="6.0" ry="4.1" fill="#5f6f45" opacity="0.6"/><ellipse cx="70.2" cy="40.3" rx="3.4" ry="3.3" fill="#44532f" opacity="0.65"/><ellipse cx="37.9" cy="30.3" rx="6.0" ry="6.1" fill="#3d4b2f" opacity="0.71"/><ellipse cx="66.1" cy="56.5" rx="3.6" ry="4.0" fill="#5f6f45" opacity="0.49"/><ellipse cx="34.4" cy="37.2" rx="3.7" ry="3.5" fill="#36442a" opacity="0.61"/><rect x="0" y="86" width="12" height="14" fill="#7c9a57" opacity="0.9"/></g><g filter="url(#p28)"><polygon points="36,44 70,42 92,50 100,60 100,100 40,100" fill="#e8e6e8" opacity="1"/><polygon points="70,55 100,60 100,100 72,100" fill="#c8c6ca" opacity="0.4"/><ellipse cx="54" cy="27" rx="12" ry="6" fill="#2a211f" opacity="1"/><ellipse cx="55" cy="36" rx="10" ry="10.5" fill="#d6b09a" opacity="1"/><ellipse cx="29" cy="47" rx="14" ry="20" fill="#c7a37c" opacity="1"/><ellipse cx="38.5" cy="46" rx="7.5" ry="9" fill="#d6b09a" opacity="1"/><polygon points="4,56 28,52 40,62 46,100 4,100" fill="#dcb9bb" opacity="1"/><polygon points="20,58 32,55 52,66 74,50 82,52 60,76 46,80 28,70" fill="#d6b09a" opacity="1"/></g><rect x="0.4" y="0.3" width="99.2" height="99.4" fill="none" stroke="#26332c" stroke-width="1.2"/></svg>
<div class="a" style="left:209px;top:311px;width:13px;height:17px;background:#f4f4f4;border-bottom-right-radius:4px"></div>
<svg style="left:208px;top:312px" width="10" height="10" viewBox="0 0 10 10"><rect x="0.6" y="0.6" width="8.8" height="8.8" rx="1.6" fill="#a9a9a9" stroke="#6f6f6f" stroke-width="1.2"/><rect x="2" y="2.2" width="6" height="1.8" fill="#555"/><rect x="1.4" y="4.4" width="7.2" height="0.6" fill="#ddd"/><rect x="2.2" y="5.6" width="2" height="2" fill="#555"/><rect x="5.8" y="5.6" width="2" height="2" fill="#555"/></svg>
<div class="t" style="left:259.5px;top:468px;width:200px;text-align:center;font-size:10.95px;color:#7e7e7e">Side 08 - Side 09</div>
<svg style="left:532px;top:312px;overflow:hidden" width="300" height="148" viewBox="0 0 200 100" preserveAspectRatio="none"><defs><filter id="p30" x="-5%" y="-5%" width="110%" height="110%"><feGaussianBlur stdDeviation="0.9"/></filter><filter id="p31" x="-5%" y="-5%" width="110%" height="110%"><feGaussianBlur stdDeviation="0.35"/></filter></defs><rect x="0" y="0" width="200" height="100" fill="url(#p29)"/><g filter="url(#p30)"><defs><linearGradient id="p29" x1="0" y1="0" x2="0" y2="1"><stop offset="0" stop-color="#6f7f5e"/><stop offset="0.35" stop-color="#56653f"/><stop offset="0.7" stop-color="#46533a"/><stop offset="0.86" stop-color="#3f4c33"/><stop offset="0.87" stop-color="#6f8d4a"/><stop offset="1" stop-color="#789553"/></linearGradient></defs><rect x="0" y="0" width="200" height="100" fill="url(#p29)"/><ellipse cx="25" cy="15" rx="35" ry="22" fill="#8e9c80" opacity="0.75"/><ellipse cx="121.0" cy="18.1" rx="4.2" ry="3.5" fill="#4a5a35" opacity="0.46"/><ellipse cx="112.1" cy="30.5" rx="4.4" ry="5.1" fill="#44532f" opacity="0.69"/><ellipse cx="75.5" cy="27.3" rx="4.4" ry="3.2" fill="#44532f" opacity="0.75"/><ellipse cx="129.4" cy="7.2" rx="5.4" ry="5.6" fill="#5f6f45" opacity="0.55"/><ellipse cx="183.8" cy="9.4" rx="5.3" ry="4.0" fill="#a3a56f" opacity="0.41"/><ellipse cx="186.2" cy="28.6" rx="5.7" ry="4.9" fill="#44532f" opacity="0.54"/><ellipse cx="179.2" cy="23.4" rx="4.9" ry="3.2" fill="#4a5a35" opacity="0.79"/><ellipse cx="146.2" cy="35.0" rx="5.5" ry="3.9" fill="#66754a" opacity="0.58"/><ellipse cx="76.2" cy="4.6" rx="4.5" ry="3.5" fill="#4a5a35" opacity="0.41"/><ellipse cx="125.6" cy="5.3" rx="5.4" ry="4.5" fill="#66754a" opacity="0.41"/><ellipse cx="96.0" cy="37.2" rx="4.8" ry="3.9" fill="#a3a56f" opacity="0.57"/><ellipse cx="55.4" cy="37.2" rx="5.8" ry="5.0" fill="#66754a" opacity="0.44"/><ellipse cx="124.3" cy="26.6" rx="5.0" ry="4.4" fill="#66754a" opacity="0.54"/><ellipse cx="86.0" cy="23.0" rx="5.2" ry="4.6" fill="#6f7e4c" opacity="0.76"/><ellipse cx="121.2" cy="13.4" rx="2.8" ry="3.1" fill="#8e9864" opacity="0.77"/><ellipse cx="108.8" cy="30.8" rx="5.0" ry="3.4" fill="#98a070" opacity="0.68"/><ellipse cx="122.9" cy="6.7" rx="2.3" ry="2.5" fill="#44532f" opacity="0.42"/><ellipse cx="162.9" cy="20.5" rx="2.6" ry="2.3" fill="#56663d" opacity="0.49"/><ellipse cx="132.3" cy="12.4" rx="4.8" ry="5.4" fill="#66754a" opacity="0.49"/><ellipse cx="156.3" cy="30.1" rx="2.4" ry="2.0" fill="#44532f" opacity="0.6"/><ellipse cx="109.2" cy="2.7" rx="2.6" ry="3.1" fill="#44532f" opacity="0.61"/><ellipse cx="146.1" cy="5.3" rx="5.8" ry="5.6" fill="#98a070" opacity="0.74"/><ellipse cx="78.3" cy="27.9" rx="3.9" ry="3.0" fill="#5f6f45" opacity="0.6"/><ellipse cx="46.9" cy="9.4" rx="5.5" ry="4.7" fill="#a3a56f" opacity="0.72"/><ellipse cx="64.0" cy="35.5" rx="5.0" ry="4.4" fill="#a3a56f" opacity="0.5"/><ellipse cx="89.6" cy="22.1" rx="3.4" ry="2.8" fill="#7a8a62" opacity="0.66"/><ellipse cx="67.6" cy="38.3" rx="3.5" ry="2.4" fill="#66754a" opacity="0.59"/><ellipse cx="128.1" cy="20.2" rx="4.0" ry="2.6" fill="#7a8a62" opacity="0.51"/><ellipse cx="174.6" cy="0.2" rx="3.4" ry="2.6" fill="#6f7e4c" opacity="0.51"/><ellipse cx="89.3" cy="5.9" rx="3.7" ry="2.3" fill="#a3a56f" opacity="0.7"/><ellipse cx="164.3" cy="2.9" rx="2.3" ry="2.1" fill="#7d8a58" opacity="0.45"/><ellipse cx="144.9" cy="14.7" rx="2.6" ry="2.0" fill="#44532f" opacity="0.6"/><ellipse cx="104.8" cy="33.6" rx="3.5" ry="2.2" fill="#4a5a35" opacity="0.8"/><ellipse cx="49.0" cy="21.4" rx="3.8" ry="3.6" fill="#7a8a62" opacity="0.69"/><ellipse cx="43.5" cy="11.2" rx="4.3" ry="3.6" fill="#7d8a58" opacity="0.75"/><ellipse cx="143.8" cy="16.1" rx="4.9" ry="3.7" fill="#56663d" opacity="0.53"/><ellipse cx="160.4" cy="32.8" rx="5.4" ry="5.8" fill="#98a070" opacity="0.66"/><ellipse cx="85.0" cy="20.3" rx="2.9" ry="3.2" fill="#66754a" opacity="0.41"/><ellipse cx="125.9" cy="33.1" rx="5.9" ry="4.9" fill="#a3a56f" opacity="0.46"/><ellipse cx="146.8" cy="18.3" rx="5.6" ry="4.1" fill="#98a070" opacity="0.79"/><ellipse cx="42.0" cy="17.8" rx="5.0" ry="5.1" fill="#4a5a35" opacity="0.8"/><ellipse cx="159.0" cy="13.5" rx="4.2" ry="2.8" fill="#8e9864" opacity="0.73"/><ellipse cx="105.7" cy="3.5" rx="4.2" ry="4.6" fill="#7d8a58" opacity="0.71"/><ellipse cx="65.2" cy="1.8" rx="3.9" ry="4.0" fill="#7a8a62" opacity="0.41"/><ellipse cx="169.5" cy="37.2" rx="5.2" ry="5.5" fill="#8e9864" opacity="0.72"/><ellipse cx="128.4" cy="23.7" rx="2.1" ry="1.8" fill="#5f6f45" opacity="0.42"/><ellipse cx="102.3" cy="36.2" rx="4.1" ry="4.7" fill="#6f7e4c" opacity="0.4"/><ellipse cx="119.6" cy="8.1" rx="2.1" ry="1.9" fill="#5f6f45" opacity="0.79"/><ellipse cx="134.7" cy="29.9" rx="2.2" ry="2.3" fill="#4a5a35" opacity="0.67"/><ellipse cx="183.2" cy="22.8" rx="4.5" ry="3.4" fill="#98a070" opacity="0.79"/><ellipse cx="55.2" cy="6.2" rx="4.4" ry="4.6" fill="#66754a" opacity="0.72"/><ellipse cx="103.9" cy="19.2" rx="5.5" ry="3.7" fill="#98a070" opacity="0.48"/><ellipse cx="50.4" cy="8.7" rx="2.4" ry="1.7" fill="#7a8a62" opacity="0.51"/><ellipse cx="149.7" cy="6.0" rx="3.7" ry="3.9" fill="#7d8a58" opacity="0.44"/><ellipse cx="113.2" cy="17.1" rx="3.3" ry="3.9" fill="#44532f" opacity="0.58"/><ellipse cx="140.7" cy="11.0" rx="4.9" ry="5.1" fill="#44532f" opacity="0.45"/><ellipse cx="77.6" cy="13.3" rx="3.2" ry="2.6" fill="#a3a56f" opacity="0.41"/><ellipse cx="131.6" cy="15.3" rx="4.3" ry="2.6" fill="#44532f" opacity="0.75"/><ellipse cx="81.4" cy="13.1" rx="4.9" ry="5.0" fill="#44532f" opacity="0.41"/><ellipse cx="151.4" cy="31.3" rx="5.6" ry="3.5" fill="#6f7e4c" opacity="0.68"/><ellipse cx="154.6" cy="36.2" rx="3.6" ry="3.1" fill="#8e9864" opacity="0.77"/><ellipse cx="49.8" cy="32.6" rx="3.5" ry="2.7" fill="#4a5a35" opacity="0.57"/><ellipse cx="164.1" cy="34.4" rx="2.5" ry="2.9" fill="#98a070" opacity="0.78"/><ellipse cx="49.6" cy="10.3" rx="3.4" ry="2.6" fill="#98a070" opacity="0.6"/><ellipse cx="196.6" cy="20.7" rx="5.9" ry="3.7" fill="#a3a56f" opacity="0.49"/><ellipse cx="47.7" cy="31.9" rx="2.9" ry="2.7" fill="#6f7e4c" opacity="0.48"/><ellipse cx="171.5" cy="16.0" rx="3.8" ry="2.5" fill="#44532f" opacity="0.7"/><ellipse cx="67.7" cy="12.2" rx="3.6" ry="3.3" fill="#7d8a58" opacity="0.61"/><ellipse cx="176.3" cy="24.4" rx="4.8" ry="4.0" fill="#7a8a62" opacity="0.71"/><ellipse cx="123.0" cy="11.9" rx="3.3" ry="3.9" fill="#4a5a35" opacity="0.45"/><ellipse cx="145.0" cy="24.0" rx="4.2" ry="4.6" fill="#4a5a35" opacity="0.48"/><ellipse cx="103.6" cy="7.1" rx="4.8" ry="4.8" fill="#5f6f45" opacity="0.51"/><ellipse cx="78.5" cy="14.1" rx="4.4" ry="2.8" fill="#56663d" opacity="0.43"/><ellipse cx="186.6" cy="30.2" rx="2.8" ry="2.3" fill="#5f6f45" opacity="0.73"/><ellipse cx="190.2" cy="33.0" rx="4.1" ry="3.5" fill="#7a8a62" opacity="0.64"/><ellipse cx="153.5" cy="3.7" rx="3.3" ry="3.8" fill="#7a8a62" opacity="0.53"/><ellipse cx="89.2" cy="31.9" rx="3.3" ry="2.3" fill="#44532f" opacity="0.45"/><ellipse cx="162.7" cy="0.6" rx="2.0" ry="1.9" fill="#8e9864" opacity="0.59"/><ellipse cx="196.9" cy="34.0" rx="3.6" ry="3.0" fill="#4a5a35" opacity="0.76"/><ellipse cx="105.3" cy="27.3" rx="3.7" ry="2.5" fill="#a3a56f" opacity="0.52"/><ellipse cx="152.9" cy="0.2" rx="4.5" ry="4.0" fill="#98a070" opacity="0.54"/><ellipse cx="186.9" cy="36.3" rx="3.2" ry="2.0" fill="#98a070" opacity="0.79"/><ellipse cx="148.5" cy="34.9" rx="4.3" ry="3.5" fill="#a3a56f" opacity="0.46"/><ellipse cx="66.2" cy="3.3" rx="4.1" ry="3.9" fill="#a3a56f" opacity="0.55"/><ellipse cx="40.1" cy="18.4" rx="5.6" ry="5.2" fill="#44532f" opacity="0.75"/><ellipse cx="194.9" cy="3.1" rx="4.0" ry="4.2" fill="#4a5a35" opacity="0.6"/><ellipse cx="199.0" cy="19.4" rx="2.9" ry="3.0" fill="#5f6f45" opacity="0.5"/><ellipse cx="99.8" cy="31.2" rx="4.8" ry="3.3" fill="#44532f" opacity="0.75"/><ellipse cx="96.4" cy="5.9" rx="2.4" ry="2.6" fill="#a3a56f" opacity="0.44"/><ellipse cx="98.2" cy="28.7" rx="6.0" ry="4.7" fill="#8e9864" opacity="0.67"/><ellipse cx="32.9" cy="32.0" rx="2.1" ry="1.3" fill="#7b8a66" opacity="0.53"/><ellipse cx="8.8" cy="17.5" rx="4.2" ry="4.4" fill="#7b8a66" opacity="0.46"/><ellipse cx="42.6" cy="25.1" rx="4.1" ry="3.4" fill="#7b8a66" opacity="0.53"/><ellipse cx="9.9" cy="23.1" rx="3.9" ry="3.5" fill="#8e9c80" opacity="0.46"/><ellipse cx="22.5" cy="24.0" rx="4.1" ry="2.5" fill="#8e9c80" opacity="0.76"/><ellipse cx="6.1" cy="24.6" rx="3.1" ry="3.5" fill="#8e9c80" opacity="0.62"/><ellipse cx="20.9" cy="1.0" rx="5.0" ry="6.0" fill="#7b8a66" opacity="0.68"/><ellipse cx="1.1" cy="21.1" rx="4.6" ry="5.2" fill="#7b8a66" opacity="0.65"/><ellipse cx="8.6" cy="9.2" rx="3.3" ry="2.7" fill="#9aa58a" opacity="0.46"/><ellipse cx="36.4" cy="34.3" rx="3.7" ry="3.5" fill="#7b8a66" opacity="0.74"/><ellipse cx="0.8" cy="28.5" rx="2.1" ry="2.3" fill="#7b8a66" opacity="0.5"/><ellipse cx="3.9" cy="29.0" rx="3.7" ry="3.7" fill="#9aa58a" opacity="0.56"/><ellipse cx="27.9" cy="12.4" rx="4.7" ry="3.8" fill="#9aa58a" opacity="0.44"/><ellipse cx="35.7" cy="10.0" rx="3.4" ry="3.9" fill="#7b8a66" opacity="0.52"/><ellipse cx="3.2" cy="34.1" rx="5.7" ry="6.5" fill="#9aa58a" opacity="0.63"/><ellipse cx="12.1" cy="26.7" rx="4.7" ry="4.3" fill="#9aa58a" opacity="0.4"/><ellipse cx="0.5" cy="9.6" rx="2.4" ry="1.8" fill="#7b8a66" opacity="0.58"/><ellipse cx="42.9" cy="29.3" rx="3.8" ry="4.1" fill="#8e9c80" opacity="0.44"/><ellipse cx="44.3" cy="19.1" rx="2.5" ry="1.9" fill="#9aa58a" opacity="0.57"/><ellipse cx="15.4" cy="1.4" rx="2.1" ry="2.5" fill="#9aa58a" opacity="0.44"/><ellipse cx="16.4" cy="23.4" rx="3.4" ry="2.1" fill="#9aa58a" opacity="0.62"/><ellipse cx="12.6" cy="31.5" rx="3.4" ry="4.0" fill="#7b8a66" opacity="0.64"/><ellipse cx="33.6" cy="20.8" rx="3.4" ry="3.9" fill="#8e9c80" opacity="0.64"/><ellipse cx="27.8" cy="33.7" rx="5.7" ry="4.9" fill="#9aa58a" opacity="0.58"/><ellipse cx="11.4" cy="33.7" rx="2.5" ry="1.9" fill="#9aa58a" opacity="0.51"/><ellipse cx="21.7" cy="13.4" rx="2.5" ry="2.8" fill="#9aa58a" opacity="0.62"/><ellipse cx="15.6" cy="14.0" rx="3.5" ry="3.1" fill="#7b8a66" opacity="0.59"/><ellipse cx="32.2" cy="21.7" rx="2.2" ry="2.5" fill="#8e9c80" opacity="0.43"/><ellipse cx="31.5" cy="22.6" rx="5.9" ry="5.3" fill="#8e9c80" opacity="0.76"/><ellipse cx="11.2" cy="22.4" rx="3.4" ry="4.1" fill="#7b8a66" opacity="0.57"/><ellipse cx="28.9" cy="61.5" rx="4.0" ry="4.7" fill="#36442a" opacity="0.76"/><ellipse cx="136.0" cy="45.5" rx="5.7" ry="4.9" fill="#44532f" opacity="0.78"/><ellipse cx="39.6" cy="64.9" rx="2.5" ry="2.3" fill="#5d6a4c" opacity="0.55"/><ellipse cx="69.9" cy="61.6" rx="3.9" ry="2.8" fill="#26301d" opacity="0.51"/><ellipse cx="141.0" cy="39.3" rx="3.5" ry="3.7" fill="#5f6f45" opacity="0.59"/><ellipse cx="57.9" cy="56.9" rx="5.9" ry="4.4" fill="#4a5a35" opacity="0.53"/><ellipse cx="192.7" cy="84.3" rx="3.2" ry="2.3" fill="#26301d" opacity="0.56"/><ellipse cx="136.0" cy="67.0" rx="4.8" ry="5.6" fill="#26301d" opacity="0.58"/><ellipse cx="132.4" cy="57.8" rx="2.0" ry="1.6" fill="#66754a" opacity="0.76"/><ellipse cx="134.4" cy="70.1" rx="4.8" ry="4.2" fill="#26301d" opacity="0.44"/><ellipse cx="81.5" cy="55.8" rx="3.9" ry="4.3" fill="#2f3b23" opacity="0.7"/><ellipse cx="163.7" cy="56.9" rx="3.4" ry="2.1" fill="#5d6a4c" opacity="0.68"/><ellipse cx="101.0" cy="55.6" rx="6.0" ry="6.5" fill="#5d6a4c" opacity="0.63"/><ellipse cx="9.4" cy="59.3" rx="3.4" ry="2.4" fill="#5d6a4c" opacity="0.6"/><ellipse cx="27.9" cy="78.4" rx="5.6" ry="4.3" fill="#36442a" opacity="0.49"/><ellipse cx="92.1" cy="74.0" rx="5.4" ry="4.5" fill="#36442a" opacity="0.44"/><ellipse cx="138.7" cy="71.5" rx="4.5" ry="4.4" fill="#1f2718" opacity="0.69"/><ellipse cx="110.5" cy="53.9" rx="5.9" ry="6.4" fill="#5f6f45" opacity="0.58"/><ellipse cx="96.8" cy="51.8" rx="2.9" ry="3.2" fill="#2f3b23" opacity="0.71"/><ellipse cx="139.3" cy="50.2" rx="4.0" ry="2.5" fill="#5d6a4c" opacity="0.48"/><ellipse cx="158.6" cy="44.9" rx="2.2" ry="2.2" fill="#1f2718" opacity="0.59"/><ellipse cx="57.2" cy="56.9" rx="5.3" ry="3.9" fill="#26301d" opacity="0.41"/><ellipse cx="181.8" cy="59.5" rx="5.5" ry="3.3" fill="#1f2718" opacity="0.73"/><ellipse cx="177.6" cy="84.8" rx="5.6" ry="6.5" fill="#5d6a4c" opacity="0.83"/><ellipse cx="94.0" cy="80.1" rx="2.3" ry="1.7" fill="#56663d" opacity="0.75"/><ellipse cx="144.8" cy="39.3" rx="3.0" ry="2.8" fill="#3d4b2f" opacity="0.45"/><ellipse cx="177.6" cy="62.6" rx="5.0" ry="4.5" fill="#36442a" opacity="0.74"/><ellipse cx="43.2" cy="76.2" rx="3.2" ry="3.5" fill="#56663d" opacity="0.5"/><ellipse cx="11.7" cy="85.0" rx="2.6" ry="2.2" fill="#26301d" opacity="0.6"/><ellipse cx="16.1" cy="49.8" rx="3.7" ry="3.1" fill="#44532f" opacity="0.81"/><ellipse cx="148.6" cy="42.5" rx="3.1" ry="2.7" fill="#66754a" opacity="0.5"/><ellipse cx="153.4" cy="72.5" rx="3.4" ry="3.9" fill="#1f2718" opacity="0.78"/><ellipse cx="194.5" cy="61.9" rx="2.2" ry="2.5" fill="#26301d" opacity="0.66"/><ellipse cx="6.7" cy="83.2" rx="3.2" ry="3.3" fill="#2f3b23" opacity="0.5"/><ellipse cx="132.7" cy="48.2" rx="3.2" ry="3.3" fill="#66754a" opacity="0.61"/><ellipse cx="65.1" cy="47.2" rx="2.3" ry="1.9" fill="#3d4b2f" opacity="0.58"/><ellipse cx="102.3" cy="41.0" rx="5.7" ry="5.1" fill="#44532f" opacity="0.82"/><ellipse cx="87.4" cy="40.4" rx="2.2" ry="1.7" fill="#26301d" opacity="0.72"/><ellipse cx="174.7" cy="84.2" rx="3.2" ry="3.6" fill="#56663d" opacity="0.56"/><ellipse cx="125.4" cy="60.8" rx="2.7" ry="2.2" fill="#5f6f45" opacity="0.53"/><ellipse cx="46.0" cy="46.3" rx="3.3" ry="3.6" fill="#1f2718" opacity="0.56"/><ellipse cx="14.3" cy="82.5" rx="5.9" ry="5.2" fill="#5f6f45" opacity="0.74"/><ellipse cx="103.6" cy="42.3" rx="4.1" ry="2.9" fill="#44532f" opacity="0.61"/><ellipse cx="56.4" cy="60.3" rx="2.6" ry="3.0" fill="#56663d" opacity="0.42"/><ellipse cx="159.3" cy="81.7" rx="5.7" ry="4.2" fill="#26301d" opacity="0.63"/><ellipse cx="147.9" cy="70.6" rx="4.9" ry="5.8" fill="#5d6a4c" opacity="0.82"/><ellipse cx="116.2" cy="65.8" rx="2.9" ry="2.9" fill="#66754a" opacity="0.7"/><ellipse cx="173.7" cy="38.2" rx="3.6" ry="2.3" fill="#4a5a35" opacity="0.68"/><ellipse cx="192.5" cy="49.2" rx="5.9" ry="6.5" fill="#56663d" opacity="0.78"/><ellipse cx="168.8" cy="56.4" rx="3.8" ry="4.5" fill="#2f3b23" opacity="0.58"/><ellipse cx="114.8" cy="81.3" rx="2.5" ry="2.1" fill="#3d4b2f" opacity="0.49"/><ellipse cx="139.6" cy="65.5" rx="4.0" ry="4.0" fill="#36442a" opacity="0.42"/><ellipse cx="170.6" cy="41.3" rx="2.9" ry="3.2" fill="#2f3b23" opacity="0.69"/><ellipse cx="102.0" cy="54.7" rx="3.8" ry="4.3" fill="#26301d" opacity="0.64"/><ellipse cx="175.7" cy="64.4" rx="4.1" ry="3.8" fill="#4a5a35" opacity="0.59"/><ellipse cx="174.2" cy="52.1" rx="4.6" ry="5.1" fill="#1f2718" opacity="0.47"/><ellipse cx="58.1" cy="73.4" rx="5.7" ry="5.6" fill="#4a5a35" opacity="0.51"/><ellipse cx="40.2" cy="78.6" rx="5.7" ry="6.3" fill="#66754a" opacity="0.63"/><ellipse cx="133.2" cy="50.2" rx="5.8" ry="6.1" fill="#44532f" opacity="0.58"/><ellipse cx="54.3" cy="49.1" rx="4.8" ry="4.8" fill="#36442a" opacity="0.68"/><ellipse cx="57.8" cy="43.5" rx="4.6" ry="3.6" fill="#36442a" opacity="0.82"/><ellipse cx="43.0" cy="76.5" rx="2.1" ry="1.4" fill="#36442a" opacity="0.64"/><ellipse cx="80.3" cy="48.1" rx="3.8" ry="3.1" fill="#56663d" opacity="0.47"/><ellipse cx="53.8" cy="78.4" rx="5.6" ry="5.1" fill="#44532f" opacity="0.81"/><ellipse cx="181.7" cy="51.6" rx="5.9" ry="4.4" fill="#5f6f45" opacity="0.63"/><ellipse cx="95.2" cy="82.6" rx="2.1" ry="1.5" fill="#4a5a35" opacity="0.58"/><ellipse cx="193.6" cy="71.8" rx="3.5" ry="2.4" fill="#5d6a4c" opacity="0.78"/><ellipse cx="27.8" cy="82.8" rx="4.7" ry="5.4" fill="#4a5a35" opacity="0.46"/><ellipse cx="190.3" cy="50.4" rx="4.8" ry="4.0" fill="#26301d" opacity="0.58"/><ellipse cx="196.7" cy="60.2" rx="2.7" ry="2.8" fill="#26301d" opacity="0.71"/><ellipse cx="132.7" cy="42.1" rx="5.4" ry="4.3" fill="#44532f" opacity="0.47"/><ellipse cx="86.3" cy="51.3" rx="5.3" ry="4.9" fill="#44532f" opacity="0.57"/><ellipse cx="144.9" cy="54.6" rx="4.6" ry="2.8" fill="#5f6f45" opacity="0.8"/><ellipse cx="174.5" cy="78.4" rx="2.4" ry="2.4" fill="#5f6f45" opacity="0.54"/><ellipse cx="141.4" cy="42.8" rx="4.6" ry="3.3" fill="#1f2718" opacity="0.71"/><ellipse cx="35.5" cy="76.2" rx="3.0" ry="2.2" fill="#5d6a4c" opacity="0.61"/><ellipse cx="173.2" cy="77.2" rx="3.0" ry="1.9" fill="#36442a" opacity="0.67"/><ellipse cx="156.2" cy="39.4" rx="3.7" ry="4.0" fill="#3d4b2f" opacity="0.66"/><ellipse cx="189.1" cy="70.9" rx="3.5" ry="2.6" fill="#3d4b2f" opacity="0.45"/><ellipse cx="33.5" cy="46.6" rx="4.1" ry="2.7" fill="#5d6a4c" opacity="0.72"/><rect x="2" y="36" width="0.6" height="34" fill="#2a3126" opacity="0.5"/><rect x="6" y="36" width="0.6" height="34" fill="#2a3126" opacity="0.5"/><rect x="10" y="36" width="0.6" height="34" fill="#2a3126" opacity="0.5"/><rect x="14" y="36" width="0.6" height="34" fill="#2a3126" opacity="0.5"/><rect x="18" y="36" width="0.6" height="34" fill="#2a3126" opacity="0.5"/><rect x="22" y="36" width="0.6" height="34" fill="#2a3126" opacity="0.5"/><rect x="26" y="36" width="0.6" height="34" fill="#2a3126" opacity="0.5"/><rect x="30" y="36" width="0.6" height="34" fill="#2a3126" opacity="0.5"/><rect x="34" y="36" width="0.6" height="34" fill="#2a3126" opacity="0.5"/><rect x="38" y="36" width="0.6" height="34" fill="#2a3126" opacity="0.5"/><rect x="42" y="36" width="0.6" height="34" fill="#2a3126" opacity="0.5"/><rect x="46" y="36" width="0.6" height="34" fill="#2a3126" opacity="0.5"/><rect x="50" y="36" width="0.6" height="34" fill="#2a3126" opacity="0.5"/><rect x="54" y="36" width="0.6" height="34" fill="#2a3126" opacity="0.5"/><rect x="58" y="36" width="0.6" height="34" fill="#2a3126" opacity="0.5"/><rect x="62" y="36" width="0.6" height="34" fill="#2a3126" opacity="0.5"/><rect x="66" y="36" width="0.6" height="34" fill="#2a3126" opacity="0.5"/><rect x="70" y="36" width="0.6" height="34" fill="#2a3126" opacity="0.5"/><rect x="74" y="36" width="0.6" height="34" fill="#2a3126" opacity="0.5"/><rect x="78" y="36" width="0.6" height="34" fill="#2a3126" opacity="0.5"/><rect x="82" y="36" width="0.6" height="34" fill="#2a3126" opacity="0.5"/><rect x="86" y="36" width="0.6" height="34" fill="#2a3126" opacity="0.5"/><rect x="90" y="36" width="0.6" height="34" fill="#2a3126" opacity="0.5"/><rect x="94" y="36" width="0.6" height="34" fill="#2a3126" opacity="0.5"/><rect x="98" y="36" width="0.6" height="34" fill="#2a3126" opacity="0.5"/><rect x="102" y="36" width="0.6" height="34" fill="#2a3126" opacity="0.5"/><rect x="106" y="36" width="0.6" height="34" fill="#2a3126" opacity="0.5"/><rect x="110" y="36" width="0.6" height="34" fill="#2a3126" opacity="0.5"/><rect x="114" y="36" width="0.6" height="34" fill="#2a3126" opacity="0.5"/><rect x="118" y="36" width="0.6" height="34" fill="#2a3126" opacity="0.5"/><rect x="122" y="36" width="0.6" height="34" fill="#2a3126" opacity="0.5"/><rect x="126" y="36" width="0.6" height="34" fill="#2a3126" opacity="0.5"/><rect x="130" y="36" width="0.6" height="34" fill="#2a3126" opacity="0.5"/><rect x="134" y="36" width="0.6" height="34" fill="#2a3126" opacity="0.5"/><rect x="138" y="36" width="0.6" height="34" fill="#2a3126" opacity="0.5"/><rect x="142" y="36" width="0.6" height="34" fill="#2a3126" opacity="0.5"/><rect x="146" y="36" width="0.6" height="34" fill="#2a3126" opacity="0.5"/><rect x="150" y="36" width="0.6" height="34" fill="#2a3126" opacity="0.5"/><rect x="154" y="36" width="0.6" height="34" fill="#2a3126" opacity="0.5"/><rect x="158" y="36" width="0.6" height="34" fill="#2a3126" opacity="0.5"/><rect x="162" y="36" width="0.6" height="34" fill="#2a3126" opacity="0.5"/><rect x="166" y="36" width="0.6" height="34" fill="#2a3126" opacity="0.5"/><rect x="170" y="36" width="0.6" height="34" fill="#2a3126" opacity="0.5"/><rect x="174" y="36" width="0.6" height="34" fill="#2a3126" opacity="0.5"/><rect x="178" y="36" width="0.6" height="34" fill="#2a3126" opacity="0.5"/><rect x="182" y="36" width="0.6" height="34" fill="#2a3126" opacity="0.5"/><rect x="186" y="36" width="0.6" height="34" fill="#2a3126" opacity="0.5"/><rect x="190" y="36" width="0.6" height="34" fill="#2a3126" opacity="0.5"/><rect x="194" y="36" width="0.6" height="34" fill="#2a3126" opacity="0.5"/><rect x="198" y="36" width="0.6" height="34" fill="#2a3126" opacity="0.5"/><rect x="0" y="69" width="30" height="18" fill="#34452a" opacity="0.8"/><polygon points="8,0 11,0 12,70 8.5,70" fill="#4c4638" opacity="0.8"/><polygon points="66,0 72,0 71,50 67,50" fill="#6f6356" opacity="0.7"/><polygon points="76,0 80,0 74,40 70,40" fill="#6f6356" opacity="0.6"/><polygon points="50,0 53,0 62,45 59,45" fill="#6f6356" opacity="0.5"/><polygon points="116,0 119,0 108,45 105,45" fill="#6f6356" opacity="0.4"/><ellipse cx="99.2" cy="98.1" rx="1.7" ry="1.4" fill="#6a8646" opacity="0.68"/><ellipse cx="42.4" cy="89.3" rx="1.7" ry="2.0" fill="#647f42" opacity="0.36"/><ellipse cx="60.3" cy="97.6" rx="2.7" ry="2.6" fill="#74904e" opacity="0.63"/><ellipse cx="193.1" cy="87.6" rx="1.6" ry="1.9" fill="#647f42" opacity="0.44"/><ellipse cx="114.8" cy="89.4" rx="3.8" ry="3.0" fill="#647f42" opacity="0.62"/><ellipse cx="174.2" cy="98.0" rx="2.6" ry="1.8" fill="#647f42" opacity="0.55"/><ellipse cx="110.9" cy="99.0" rx="1.8" ry="1.5" fill="#74904e" opacity="0.56"/><ellipse cx="124.1" cy="95.5" rx="2.7" ry="2.5" fill="#647f42" opacity="0.36"/><ellipse cx="42.2" cy="99.7" rx="1.7" ry="1.1" fill="#6a8646" opacity="0.55"/><ellipse cx="115.6" cy="87.9" rx="2.1" ry="2.4" fill="#7f9a57" opacity="0.43"/><ellipse cx="131.7" cy="93.5" rx="2.9" ry="2.4" fill="#86a05d" opacity="0.4"/><ellipse cx="115.8" cy="90.9" rx="3.5" ry="2.1" fill="#647f42" opacity="0.48"/><ellipse cx="79.0" cy="95.7" rx="3.8" ry="4.2" fill="#6a8646" opacity="0.54"/><ellipse cx="92.6" cy="87.8" rx="2.2" ry="2.2" fill="#86a05d" opacity="0.46"/><ellipse cx="134.6" cy="92.6" rx="1.9" ry="1.9" fill="#647f42" opacity="0.33"/><ellipse cx="75.6" cy="91.1" rx="1.9" ry="2.1" fill="#6a8646" opacity="0.67"/><ellipse cx="125.8" cy="88.4" rx="2.8" ry="2.9" fill="#6a8646" opacity="0.66"/><ellipse cx="9.6" cy="92.7" rx="3.3" ry="2.1" fill="#86a05d" opacity="0.39"/><ellipse cx="121.3" cy="97.9" rx="3.1" ry="3.5" fill="#6a8646" opacity="0.52"/><ellipse cx="182.7" cy="98.5" rx="2.2" ry="1.6" fill="#74904e" opacity="0.4"/><ellipse cx="88.0" cy="92.6" rx="2.1" ry="1.4" fill="#74904e" opacity="0.69"/><ellipse cx="169.3" cy="92.8" rx="3.0" ry="3.1" fill="#6a8646" opacity="0.59"/><ellipse cx="105.2" cy="99.7" rx="3.2" ry="3.6" fill="#86a05d" opacity="0.58"/><ellipse cx="87.2" cy="90.7" rx="3.9" ry="3.1" fill="#74904e" opacity="0.42"/><ellipse cx="44.2" cy="99.1" rx="3.1" ry="2.2" fill="#647f42" opacity="0.44"/><ellipse cx="82.8" cy="87.7" rx="3.9" ry="4.5" fill="#6a8646" opacity="0.7"/><ellipse cx="63.6" cy="91.2" rx="4.0" ry="3.6" fill="#86a05d" opacity="0.36"/><ellipse cx="39.0" cy="90.7" rx="2.6" ry="2.2" fill="#7f9a57" opacity="0.6"/><ellipse cx="101.6" cy="99.4" rx="4.0" ry="4.6" fill="#74904e" opacity="0.69"/><ellipse cx="172.3" cy="92.9" rx="2.3" ry="1.4" fill="#6a8646" opacity="0.57"/><ellipse cx="3.0" cy="97.8" rx="1.7" ry="1.6" fill="#647f42" opacity="0.41"/><ellipse cx="111.7" cy="93.5" rx="2.5" ry="2.8" fill="#7f9a57" opacity="0.63"/><ellipse cx="176.3" cy="93.9" rx="3.2" ry="3.2" fill="#74904e" opacity="0.56"/><ellipse cx="110.2" cy="90.6" rx="1.6" ry="1.4" fill="#647f42" opacity="0.47"/><ellipse cx="155.5" cy="90.4" rx="3.2" ry="2.6" fill="#6a8646" opacity="0.53"/><ellipse cx="53.4" cy="97.2" rx="3.1" ry="2.3" fill="#7f9a57" opacity="0.62"/><ellipse cx="1.7" cy="92.0" rx="3.4" ry="2.5" fill="#6a8646" opacity="0.58"/><ellipse cx="189.1" cy="96.6" rx="2.0" ry="1.7" fill="#74904e" opacity="0.56"/><ellipse cx="20.9" cy="97.1" rx="2.8" ry="3.0" fill="#74904e" opacity="0.68"/><ellipse cx="169.4" cy="99.8" rx="1.7" ry="1.2" fill="#86a05d" opacity="0.64"/></g><g filter="url(#p31)"><polygon points="104.5,13.5 170,16 170,19.5 104.5,17.5" fill="#8f857a" opacity="1"/><polygon points="107,16 110.5,16 121.5,87 118,87" fill="#8f857a" opacity="1"/><polygon points="166.5,18 170,18 185.5,83 182,83" fill="#8f857a" opacity="1"/><polygon points="130,18 131,18 131,56 130,56" fill="#6f675e" opacity="0.8"/><polygon points="160,19 161,19 161,56 160,56" fill="#6f675e" opacity="0.8"/><polygon points="110,55 166,55 166,77 112,77" fill="#b57c89" opacity="1"/><polygon points="112,66 166,66 166,70 112,70" fill="#9b6574" opacity="0.6"/><polygon points="122,62 138,56 148,55 150,72 124,73" fill="#dcb9bb" opacity="1"/><ellipse cx="143.5" cy="51" rx="4.2" ry="5.5" fill="#c7a37c" opacity="1"/><ellipse cx="143.5" cy="50.5" rx="2.8" ry="3.4" fill="#d6b09a" opacity="1"/><ellipse cx="151" cy="46.5" rx="3" ry="2" fill="#2a211f" opacity="1"/><ellipse cx="151" cy="48.5" rx="2.7" ry="3.3" fill="#d6b09a" opacity="1"/><polygon points="146,53 159,53 161,68 148,68" fill="#e8e6e8" opacity="1"/><polygon points="147,67 162,67 165,87 159,87 153,72" fill="#c6bba4" opacity="1"/><ellipse cx="45.5" cy="31.5" rx="7" ry="8.5" fill="#2a211f" opacity="1"/><ellipse cx="45.5" cy="32" rx="5" ry="5.5" fill="#d6b09a" opacity="1"/><polygon points="33,40 36,39 37,62 34,64" fill="#c49a84" opacity="1"/><polygon points="54,39 57,40 57,64 54,62" fill="#c49a84" opacity="1"/><polygon points="35.5,38.5 55,38.5 54,57 55.5,87 27,87 36.5,57" fill="#cda4a7" opacity="1"/><polygon points="44,57 54,57 55.5,87 44,87" fill="#dcb9bb" opacity="0.45"/><polygon points="38.5,87 43,87 43,100 38.5,100" fill="#c49a84" opacity="1"/><polygon points="46,87 50,87 50,100 46,100" fill="#c49a84" opacity="1"/><ellipse cx="65.5" cy="52" rx="5.2" ry="3.5" fill="#c7a37c" opacity="1"/><ellipse cx="65.4" cy="55" rx="4.8" ry="5.3" fill="#d6b09a" opacity="1"/><polygon points="57,60 75,60 80.5,78 78,84 73,74 72,89 59,89 58,74 54,80 54,72" fill="#e8e6e8" opacity="1"/><polygon points="59.5,89 71.5,89 71.5,100 60,100" fill="#c6bba4" opacity="1"/><ellipse cx="93" cy="48.5" rx="6.5" ry="7.5" fill="#c7a37c" opacity="1"/><ellipse cx="93" cy="49" rx="4.8" ry="5.4" fill="#d6b09a" opacity="1"/><polygon points="84,55 101.5,55 103,66 104,93 83,93 85,66" fill="#dcb9bb" opacity="1"/><polygon points="87,93 91,93 91,100 87,100" fill="#c49a84" opacity="1"/><polygon points="94,93 98,93 98,100 94,100" fill="#c49a84" opacity="1"/></g></svg>
<div class="t" style="left:581.5px;top:468px;width:200px;text-align:center;font-size:10.95px;color:#7e7e7e">Side 10 - Side 11</div>
<div class="a" style="left:854px;top:312px;width:300px;height:148px;background:#3f524c"></div>
<svg style="left:854px;top:312px;overflow:hidden" width="150" height="148" viewBox="0 0 100 100" preserveAspectRatio="none"><defs><filter id="p33" x="-5%" y="-5%" width="110%" height="110%"><feGaussianBlur stdDeviation="0.9"/></filter><filter id="p34" x="-5%" y="-5%" width="110%" height="110%"><feGaussianBlur stdDeviation="0.35"/></filter></defs><rect x="0" y="0" width="100" height="100" fill="url(#p32)"/><g filter="url(#p33)"><defs><linearGradient id="p32" x1="0" y1="0" x2="0" y2="1"><stop offset="0" stop-color="#4f5d3c"/><stop offset="0.25" stop-color="#3f4e32"/><stop offset="0.45" stop-color="#35462c"/><stop offset="0.47" stop-color="#6f8c4b"/><stop offset="1" stop-color="#6f8c4b"/></linearGradient></defs><rect x="0" y="0" width="100" height="100" fill="url(#p32)"/><ellipse cx="14" cy="14" rx="14" ry="12" fill="#7a8a5c" opacity="0.8"/><ellipse cx="3.3" cy="7.8" rx="4.1" ry="2.8" fill="#36442a" opacity="0.84"/><ellipse cx="29.7" cy="20.9" rx="4.5" ry="3.3" fill="#1f2718" opacity="0.84"/><ellipse cx="32.0" cy="9.8" rx="4.4" ry="3.6" fill="#56663d" opacity="0.81"/><ellipse cx="3.5" cy="44.7" rx="3.3" ry="3.1" fill="#44532f" opacity="0.65"/><ellipse cx="31.4" cy="37.1" rx="3.1" ry="3.7" fill="#7a8a5c" opacity="0.85"/><ellipse cx="27.6" cy="19.4" rx="3.0" ry="2.5" fill="#26301d" opacity="0.8"/><ellipse cx="22.5" cy="36.7" rx="4.7" ry="5.0" fill="#3d4b2f" opacity="0.87"/><ellipse cx="2.4" cy="17.6" rx="2.6" ry="1.8" fill="#3d4b2f" opacity="0.67"/><ellipse cx="25.3" cy="37.4" rx="3.6" ry="3.9" fill="#5f6f45" opacity="0.74"/><ellipse cx="22.5" cy="39.9" rx="4.0" ry="3.2" fill="#1f2718" opacity="0.83"/><ellipse cx="38.1" cy="30.0" rx="3.3" ry="2.7" fill="#1f2718" opacity="0.67"/><ellipse cx="29.7" cy="32.7" rx="3.5" ry="2.8" fill="#3d4b2f" opacity="0.73"/><ellipse cx="22.0" cy="26.9" rx="3.2" ry="2.0" fill="#26301d" opacity="0.86"/><ellipse cx="6.4" cy="41.1" rx="3.8" ry="2.3" fill="#7a8a5c" opacity="0.7"/><ellipse cx="8.4" cy="16.8" rx="3.2" ry="3.2" fill="#66754a" opacity="0.6"/><ellipse cx="20.5" cy="26.1" rx="4.8" ry="4.0" fill="#44532f" opacity="0.82"/><ellipse cx="35.5" cy="12.1" rx="4.6" ry="3.3" fill="#5f6f45" opacity="0.55"/><ellipse cx="24.0" cy="28.0" rx="4.5" ry="4.9" fill="#36442a" opacity="0.66"/><ellipse cx="34.8" cy="28.3" rx="3.4" ry="3.2" fill="#66754a" opacity="0.88"/><ellipse cx="25.3" cy="27.0" rx="2.6" ry="2.6" fill="#1f2718" opacity="0.76"/><ellipse cx="15.8" cy="31.1" rx="4.7" ry="3.4" fill="#2f3b23" opacity="0.86"/><ellipse cx="33.4" cy="21.1" rx="5.0" ry="3.8" fill="#44532f" opacity="0.53"/><ellipse cx="35.4" cy="5.5" rx="3.7" ry="2.7" fill="#5f6f45" opacity="0.79"/><ellipse cx="12.6" cy="7.0" rx="4.5" ry="4.9" fill="#7a8a5c" opacity="0.85"/><ellipse cx="39.3" cy="24.2" rx="3.5" ry="2.4" fill="#26301d" opacity="0.61"/><ellipse cx="24.4" cy="21.0" rx="4.9" ry="3.7" fill="#4a5a35" opacity="0.63"/><ellipse cx="27.6" cy="1.6" rx="4.6" ry="5.0" fill="#66754a" opacity="0.8"/><ellipse cx="28.1" cy="8.8" rx="2.6" ry="2.9" fill="#4a5a35" opacity="0.66"/><ellipse cx="28.1" cy="31.5" rx="2.3" ry="2.0" fill="#26301d" opacity="0.83"/><ellipse cx="27.3" cy="14.9" rx="4.6" ry="4.3" fill="#3d4b2f" opacity="0.88"/><ellipse cx="35.9" cy="8.8" rx="4.8" ry="3.7" fill="#66754a" opacity="0.59"/><ellipse cx="38.7" cy="35.5" rx="3.6" ry="2.5" fill="#1f2718" opacity="0.83"/><ellipse cx="28.9" cy="35.0" rx="3.4" ry="3.8" fill="#26301d" opacity="0.74"/><ellipse cx="25.5" cy="1.0" rx="4.6" ry="5.3" fill="#26301d" opacity="0.86"/><ellipse cx="12.9" cy="6.6" rx="3.8" ry="4.2" fill="#66754a" opacity="0.84"/><ellipse cx="5.9" cy="39.6" rx="4.4" ry="3.8" fill="#36442a" opacity="0.83"/><ellipse cx="15.9" cy="3.2" rx="2.8" ry="3.2" fill="#3d4b2f" opacity="0.63"/><ellipse cx="1.3" cy="31.1" rx="2.4" ry="2.4" fill="#3d4b2f" opacity="0.77"/><ellipse cx="17.8" cy="37.4" rx="3.8" ry="2.7" fill="#7a8a5c" opacity="0.64"/><ellipse cx="22.1" cy="10.8" rx="4.8" ry="4.4" fill="#7a8a5c" opacity="0.62"/><ellipse cx="3.3" cy="42.8" rx="4.2" ry="3.5" fill="#7a8a5c" opacity="0.61"/><ellipse cx="24.7" cy="8.6" rx="3.0" ry="3.4" fill="#56663d" opacity="0.75"/><ellipse cx="18.3" cy="20.9" rx="3.1" ry="3.1" fill="#2f3b23" opacity="0.79"/><ellipse cx="34.4" cy="32.6" rx="4.6" ry="4.0" fill="#36442a" opacity="0.54"/><ellipse cx="22.2" cy="39.9" rx="2.1" ry="2.0" fill="#44532f" opacity="0.6"/><ellipse cx="22.3" cy="35.3" rx="4.1" ry="2.6" fill="#4a5a35" opacity="0.59"/><ellipse cx="33.8" cy="17.5" rx="2.7" ry="3.1" fill="#1f2718" opacity="0.7"/><ellipse cx="9.8" cy="16.9" rx="2.4" ry="2.4" fill="#3d4b2f" opacity="0.82"/><ellipse cx="10.1" cy="42.4" rx="3.3" ry="3.1" fill="#44532f" opacity="0.86"/><ellipse cx="15.2" cy="39.3" rx="3.6" ry="2.5" fill="#56663d" opacity="0.84"/><rect x="0" y="25" width="38" height="20" fill="#2e4a2c" opacity="0.6"/><polygon points="21,0 26,0 26,28 21,28" fill="#3a3428" opacity="0.8"/><rect x="58" y="0" width="42" height="14" fill="#1f2618" opacity="0.9"/><ellipse cx="76.8" cy="32.6" rx="3.7" ry="3.5" fill="#26301d" opacity="0.8"/><ellipse cx="78.9" cy="43.5" rx="5.0" ry="4.7" fill="#36442a" opacity="0.62"/><ellipse cx="94.5" cy="35.7" rx="3.9" ry="2.7" fill="#1f2718" opacity="0.66"/><ellipse cx="84.6" cy="39.1" rx="3.4" ry="3.5" fill="#2f3b23" opacity="0.85"/><ellipse cx="87.0" cy="48.0" rx="4.4" ry="2.8" fill="#36442a" opacity="0.74"/><ellipse cx="70.9" cy="16.6" rx="2.5" ry="2.4" fill="#2f3b23" opacity="0.91"/><ellipse cx="65.7" cy="41.3" rx="3.1" ry="3.5" fill="#36442a" opacity="0.7"/><ellipse cx="99.9" cy="46.2" rx="4.6" ry="5.2" fill="#1f2718" opacity="0.79"/><ellipse cx="73.8" cy="15.6" rx="3.8" ry="3.0" fill="#26301d" opacity="0.63"/><ellipse cx="92.0" cy="46.4" rx="3.5" ry="2.4" fill="#36442a" opacity="0.91"/><ellipse cx="90.0" cy="18.8" rx="3.6" ry="4.3" fill="#3d4b2f" opacity="0.89"/><ellipse cx="67.4" cy="22.7" rx="2.1" ry="1.5" fill="#1f2718" opacity="0.81"/><ellipse cx="99.3" cy="37.3" rx="4.4" ry="5.0" fill="#1f2718" opacity="0.72"/><ellipse cx="81.6" cy="14.2" rx="4.1" ry="2.7" fill="#3d4b2f" opacity="0.88"/><ellipse cx="67.8" cy="43.5" rx="2.7" ry="2.3" fill="#1f2718" opacity="0.94"/><ellipse cx="66.9" cy="18.2" rx="3.9" ry="4.6" fill="#1f2718" opacity="0.74"/><ellipse cx="81.6" cy="33.4" rx="2.2" ry="2.0" fill="#36442a" opacity="0.66"/><ellipse cx="83.6" cy="40.7" rx="4.5" ry="2.8" fill="#26301d" opacity="0.82"/><ellipse cx="76.0" cy="17.5" rx="4.1" ry="3.0" fill="#1f2718" opacity="0.65"/><ellipse cx="86.4" cy="33.9" rx="4.8" ry="5.2" fill="#3d4b2f" opacity="0.86"/><ellipse cx="73.5" cy="16.3" rx="3.1" ry="2.5" fill="#26301d" opacity="0.61"/><ellipse cx="74.1" cy="27.0" rx="3.5" ry="2.1" fill="#36442a" opacity="0.79"/><ellipse cx="95.3" cy="22.5" rx="4.1" ry="4.4" fill="#1f2718" opacity="0.91"/><ellipse cx="67.6" cy="10.3" rx="4.9" ry="3.5" fill="#3d4b2f" opacity="0.91"/><ellipse cx="77.5" cy="28.6" rx="4.4" ry="3.8" fill="#3d4b2f" opacity="0.69"/><ellipse cx="61.1" cy="49.0" rx="2.3" ry="1.5" fill="#3d4b2f" opacity="0.83"/><ellipse cx="89.5" cy="45.4" rx="4.4" ry="3.2" fill="#3d4b2f" opacity="0.73"/><ellipse cx="62.5" cy="33.9" rx="3.7" ry="2.4" fill="#36442a" opacity="0.61"/><ellipse cx="98.0" cy="11.3" rx="3.8" ry="2.8" fill="#26301d" opacity="0.9"/><ellipse cx="79.6" cy="13.7" rx="3.0" ry="3.3" fill="#2f3b23" opacity="0.86"/><ellipse cx="41.1" cy="73.7" rx="2.9" ry="2.4" fill="#6a8646" opacity="0.34"/><ellipse cx="6.7" cy="68.4" rx="3.5" ry="3.3" fill="#86a05d" opacity="0.52"/><ellipse cx="5.4" cy="80.3" rx="2.4" ry="2.8" fill="#6a8646" opacity="0.61"/><ellipse cx="29.2" cy="87.1" rx="3.9" ry="4.6" fill="#74904e" opacity="0.54"/><ellipse cx="26.8" cy="65.6" rx="3.7" ry="3.3" fill="#6a8646" opacity="0.33"/><ellipse cx="7.6" cy="95.7" rx="1.8" ry="1.1" fill="#7f9a57" opacity="0.62"/><ellipse cx="9.2" cy="88.4" rx="2.9" ry="2.0" fill="#647f42" opacity="0.63"/><ellipse cx="42.5" cy="98.0" rx="2.7" ry="3.2" fill="#86a05d" opacity="0.36"/><ellipse cx="24.2" cy="52.3" rx="3.3" ry="3.4" fill="#7f9a57" opacity="0.54"/><ellipse cx="22.9" cy="63.9" rx="3.9" ry="3.3" fill="#6a8646" opacity="0.31"/><ellipse cx="30.9" cy="96.7" rx="1.5" ry="1.4" fill="#74904e" opacity="0.5"/><ellipse cx="38.1" cy="91.1" rx="3.6" ry="4.2" fill="#7f9a57" opacity="0.55"/><ellipse cx="1.8" cy="50.0" rx="3.3" ry="2.1" fill="#7f9a57" opacity="0.39"/><ellipse cx="2.4" cy="66.2" rx="2.2" ry="2.5" fill="#647f42" opacity="0.67"/><ellipse cx="26.1" cy="68.9" rx="1.8" ry="1.4" fill="#647f42" opacity="0.51"/><ellipse cx="0.2" cy="99.5" rx="2.9" ry="2.5" fill="#7f9a57" opacity="0.5"/><ellipse cx="25.8" cy="49.9" rx="3.1" ry="3.1" fill="#86a05d" opacity="0.67"/><ellipse cx="13.5" cy="99.2" rx="1.6" ry="1.2" fill="#74904e" opacity="0.58"/><ellipse cx="24.3" cy="52.1" rx="3.7" ry="4.3" fill="#647f42" opacity="0.37"/><ellipse cx="44.4" cy="55.5" rx="2.6" ry="2.7" fill="#86a05d" opacity="0.36"/><ellipse cx="21.0" cy="73.2" rx="2.6" ry="1.8" fill="#647f42" opacity="0.49"/><ellipse cx="17.8" cy="84.1" rx="2.6" ry="2.3" fill="#647f42" opacity="0.32"/><ellipse cx="19.4" cy="79.9" rx="3.1" ry="3.6" fill="#6a8646" opacity="0.31"/><ellipse cx="26.9" cy="75.2" rx="2.0" ry="1.9" fill="#74904e" opacity="0.43"/><ellipse cx="11.7" cy="64.1" rx="2.8" ry="2.6" fill="#647f42" opacity="0.66"/></g><g filter="url(#p34)"><ellipse cx="49" cy="15" rx="9.5" ry="12" fill="#2a211f" opacity="1"/><ellipse cx="50.5" cy="18" rx="6.6" ry="8" fill="#d6b09a" opacity="1"/><polygon points="29,30 35,27 40,60 36,64" fill="#c49a84" opacity="1"/><polygon points="33,26 61,25 63,45 60,66 38,66 35,45" fill="#cda4a7" opacity="1"/><ellipse cx="72" cy="21" rx="9" ry="7" fill="#2a211f" opacity="1"/><ellipse cx="73" cy="30" rx="8.5" ry="10" fill="#d6b09a" opacity="1"/><polygon points="54,44 66,38 80,37 92,46 99,60 98,96 45,100 42,76 48,56" fill="#e8e6e8" opacity="1"/><ellipse cx="91" cy="43" rx="5" ry="5" fill="#c49a84" opacity="1"/><polygon points="80,55 99,60 98,96 80,90" fill="#c8c6ca" opacity="0.45"/><ellipse cx="24" cy="58" rx="9" ry="10.5" fill="#7a5a44" opacity="1"/><ellipse cx="24" cy="60" rx="6.8" ry="8.3" fill="#d6b09a" opacity="1"/><polygon points="8,68 38,65 44,76 40,88 28,100 0,100 2,80" fill="#dcb9bb" opacity="1"/><ellipse cx="74.5" cy="50" rx="9" ry="7.5" fill="#b39472" opacity="1"/><ellipse cx="75" cy="58" rx="8" ry="8.5" fill="#d6b09a" opacity="1"/><polygon points="62,66 86,64 88,84 58,86 46,82" fill="#e8e6e8" opacity="1"/><polygon points="17,79 45,76 62,82 73,90 72,100 17,100" fill="#c6bba4" opacity="1"/><polygon points="24,93 38,90 40,98 26,100" fill="#c49a84" opacity="1"/></g></svg>
<svg style="left:1055px;top:340px;overflow:hidden" width="47" height="44" viewBox="0 0 100 100" preserveAspectRatio="none"><defs><filter id="p36" x="-5%" y="-5%" width="110%" height="110%"><feGaussianBlur stdDeviation="0.8"/></filter></defs><g filter="url(#p36)"><defs><linearGradient id="p35" x1="0" y1="0" x2="0" y2="1"><stop offset="0" stop-color="#3d5030"/><stop offset="1" stop-color="#5f7a48"/></linearGradient></defs><rect x="0" y="0" width="100" height="100" fill="url(#p35)"/><ellipse cx="14.6" cy="27.3" rx="6.9" ry="7.0" fill="#8e9864" opacity="0.69"/><ellipse cx="50.7" cy="6.6" rx="3.6" ry="3.8" fill="#1f2718" opacity="0.57"/><ellipse cx="93.3" cy="56.8" rx="4.7" ry="3.7" fill="#a3a56f" opacity="0.94"/><ellipse cx="96.1" cy="8.4" rx="7.5" ry="6.1" fill="#56663d" opacity="0.94"/><ellipse cx="21.1" cy="57.4" rx="5.8" ry="6.6" fill="#6f7e4c" opacity="0.7"/><ellipse cx="85.6" cy="38.3" rx="3.9" ry="3.8" fill="#36442a" opacity="0.86"/><ellipse cx="56.6" cy="11.6" rx="7.2" ry="8.3" fill="#3d4b2f" opacity="0.94"/><ellipse cx="79.9" cy="55.3" rx="4.9" ry="4.8" fill="#a3a56f" opacity="0.94"/><ellipse cx="60.9" cy="43.0" rx="6.9" ry="6.2" fill="#1f2718" opacity="0.83"/><ellipse cx="33.9" cy="40.9" rx="5.7" ry="6.7" fill="#5f6f45" opacity="0.71"/><ellipse cx="6.2" cy="6.1" rx="4.5" ry="3.9" fill="#3d4b2f" opacity="0.89"/><ellipse cx="90.9" cy="42.9" rx="6.8" ry="6.2" fill="#5f6f45" opacity="0.91"/><ellipse cx="25.4" cy="3.5" rx="5.9" ry="4.7" fill="#26301d" opacity="0.85"/><ellipse cx="70.6" cy="7.3" rx="3.3" ry="3.1" fill="#3d4b2f" opacity="0.9"/><ellipse cx="52.5" cy="13.0" rx="7.0" ry="7.3" fill="#4a5a35" opacity="0.68"/><ellipse cx="1.3" cy="6.8" rx="4.0" ry="3.6" fill="#8e9864" opacity="0.79"/><ellipse cx="4.4" cy="43.5" rx="3.5" ry="3.5" fill="#36442a" opacity="0.8"/><ellipse cx="66.0" cy="28.6" rx="5.7" ry="5.8" fill="#36442a" opacity="0.57"/><ellipse cx="47.4" cy="45.3" rx="8.0" ry="9.3" fill="#36442a" opacity="0.59"/><ellipse cx="14.0" cy="38.5" rx="3.6" ry="2.3" fill="#8e9864" opacity="0.71"/><ellipse cx="54.1" cy="28.4" rx="4.7" ry="4.1" fill="#3d4b2f" opacity="0.79"/><ellipse cx="85.7" cy="25.1" rx="7.1" ry="7.8" fill="#2f3b23" opacity="0.92"/><ellipse cx="59.8" cy="58.8" rx="5.0" ry="3.8" fill="#8e9864" opacity="0.59"/><ellipse cx="22.8" cy="2.8" rx="7.8" ry="4.7" fill="#a3a56f" opacity="0.67"/><ellipse cx="93.7" cy="59.5" rx="5.8" ry="4.3" fill="#26301d" opacity="0.81"/><ellipse cx="22.0" cy="38.6" rx="6.6" ry="4.1" fill="#2f3b23" opacity="0.88"/><ellipse cx="35.3" cy="40.4" rx="5.2" ry="5.4" fill="#36442a" opacity="0.91"/><ellipse cx="8.4" cy="41.6" rx="7.3" ry="8.0" fill="#66754a" opacity="0.61"/><ellipse cx="89.1" cy="0.2" rx="6.7" ry="6.8" fill="#66754a" opacity="0.71"/><ellipse cx="38.1" cy="43.7" rx="4.0" ry="4.6" fill="#44532f" opacity="0.89"/><ellipse cx="55.0" cy="16.2" rx="6.1" ry="6.0" fill="#36442a" opacity="0.72"/><ellipse cx="85.6" cy="30.3" rx="6.3" ry="4.2" fill="#2f3b23" opacity="0.78"/><ellipse cx="22.3" cy="23.6" rx="5.3" ry="5.4" fill="#6f7e4c" opacity="0.94"/><ellipse cx="6.9" cy="54.5" rx="5.1" ry="4.8" fill="#5f6f45" opacity="0.59"/><ellipse cx="8.9" cy="37.5" rx="3.5" ry="3.3" fill="#36442a" opacity="0.61"/><rect x="0" y="70" width="100" height="30" fill="#7d9657" opacity="0.9"/><ellipse cx="52" cy="40" rx="8" ry="9" fill="#d6b09a" opacity="1"/><ellipse cx="52" cy="34.15" rx="8.16" ry="4.5" fill="#2a211f" opacity="1"/><polygon points="42,48 66,48 74,80 44,80" fill="#e8e6e8" opacity="1"/><ellipse cx="34" cy="56.8" rx="10.15" ry="13.6" fill="#c7a37c" opacity="1"/><ellipse cx="34" cy="52" rx="7" ry="8" fill="#d6b09a" opacity="1"/><ellipse cx="34" cy="46.4" rx="7.3500000000000005" ry="3.6" fill="#c7a37c" opacity="1"/><polygon points="8,70 52,62 64,90 10,92" fill="#dcb9bb" opacity="1"/></g><rect x="0.5" y="0.5" width="99" height="99" fill="none" stroke="#26332c" stroke-width="2"/></svg>
<svg style="left:1055px;top:387px;overflow:hidden" width="47" height="44" viewBox="0 0 100 100" preserveAspectRatio="none"><defs><filter id="p38" x="-5%" y="-5%" width="110%" height="110%"><feGaussianBlur stdDeviation="0.8"/></filter></defs><g filter="url(#p38)"><defs><linearGradient id="p37" x1="0" y1="0" x2="0" y2="1"><stop offset="0" stop-color="#3d5030"/><stop offset="1" stop-color="#5f7a48"/></linearGradient></defs><rect x="0" y="0" width="100" height="100" fill="url(#p37)"/><ellipse cx="58.1" cy="11.7" rx="7.8" ry="9.0" fill="#5f6f45" opacity="0.57"/><ellipse cx="50.4" cy="36.1" rx="7.6" ry="6.8" fill="#a3a56f" opacity="0.63"/><ellipse cx="97.1" cy="4.2" rx="4.0" ry="2.6" fill="#a3a56f" opacity="0.76"/><ellipse cx="19.2" cy="47.2" rx="4.2" ry="4.5" fill="#56663d" opacity="0.63"/><ellipse cx="43.0" cy="18.3" rx="3.6" ry="3.9" fill="#7d8a58" opacity="0.68"/><ellipse cx="85.9" cy="16.0" rx="6.9" ry="5.1" fill="#2f3b23" opacity="0.71"/><ellipse cx="66.9" cy="0.4" rx="5.3" ry="4.9" fill="#4a5a35" opacity="0.87"/><ellipse cx="37.1" cy="21.6" rx="4.3" ry="4.7" fill="#26301d" opacity="0.72"/><ellipse cx="27.8" cy="45.8" rx="5.0" ry="6.0" fill="#6f7e4c" opacity="0.7"/><ellipse cx="65.2" cy="28.5" rx="5.5" ry="6.2" fill="#1f2718" opacity="0.9"/><ellipse cx="18.1" cy="31.8" rx="7.4" ry="8.6" fill="#2f3b23" opacity="0.56"/><ellipse cx="34.6" cy="56.8" rx="7.4" ry="8.1" fill="#2f3b23" opacity="0.82"/><ellipse cx="61.0" cy="36.3" rx="5.3" ry="5.2" fill="#7d8a58" opacity="0.62"/><ellipse cx="79.3" cy="44.3" rx="7.5" ry="6.5" fill="#98a070" opacity="0.94"/><ellipse cx="8.1" cy="9.0" rx="4.6" ry="3.8" fill="#26301d" opacity="0.77"/><ellipse cx="68.9" cy="21.0" rx="3.3" ry="2.5" fill="#6f7e4c" opacity="0.68"/><ellipse cx="28.0" cy="9.2" rx="5.3" ry="4.6" fill="#66754a" opacity="0.94"/><ellipse cx="90.1" cy="19.1" rx="3.5" ry="3.5" fill="#98a070" opacity="0.62"/><ellipse cx="1.4" cy="23.7" rx="6.1" ry="6.0" fill="#26301d" opacity="0.87"/><ellipse cx="23.9" cy="16.4" rx="6.3" ry="5.9" fill="#66754a" opacity="0.68"/><ellipse cx="1.9" cy="8.0" rx="4.7" ry="3.9" fill="#56663d" opacity="0.71"/><ellipse cx="5.4" cy="13.2" rx="3.3" ry="2.3" fill="#2f3b23" opacity="0.61"/><ellipse cx="12.1" cy="1.4" rx="7.3" ry="5.3" fill="#7d8a58" opacity="0.82"/><ellipse cx="36.4" cy="39.8" rx="5.7" ry="3.9" fill="#66754a" opacity="0.77"/><ellipse cx="30.0" cy="18.1" rx="4.3" ry="4.8" fill="#3d4b2f" opacity="0.73"/><ellipse cx="29.7" cy="2.4" rx="3.2" ry="3.9" fill="#8e9864" opacity="0.9"/><ellipse cx="43.9" cy="3.1" rx="5.8" ry="4.2" fill="#26301d" opacity="0.86"/><ellipse cx="46.5" cy="59.0" rx="7.6" ry="4.8" fill="#56663d" opacity="0.92"/><ellipse cx="66.7" cy="46.2" rx="7.8" ry="6.9" fill="#a3a56f" opacity="0.89"/><ellipse cx="6.2" cy="41.5" rx="4.3" ry="4.3" fill="#8e9864" opacity="0.58"/><ellipse cx="62.5" cy="27.0" rx="5.6" ry="3.6" fill="#5f6f45" opacity="0.84"/><ellipse cx="41.7" cy="15.9" rx="4.2" ry="3.1" fill="#a3a56f" opacity="0.76"/><ellipse cx="98.1" cy="44.0" rx="6.3" ry="4.4" fill="#98a070" opacity="0.78"/><ellipse cx="66.5" cy="54.0" rx="5.2" ry="3.3" fill="#3d4b2f" opacity="0.91"/><ellipse cx="94.2" cy="47.7" rx="6.4" ry="7.2" fill="#2f3b23" opacity="0.79"/><ellipse cx="34" cy="40.6" rx="14.5" ry="18.7" fill="#c7a37c" opacity="1"/><ellipse cx="34" cy="34" rx="10" ry="11" fill="#d6b09a" opacity="1"/><ellipse cx="34" cy="26.3" rx="10.5" ry="4.95" fill="#c7a37c" opacity="1"/><ellipse cx="58" cy="46" rx="10" ry="11" fill="#d6b09a" opacity="1"/><ellipse cx="58" cy="38.85" rx="10.2" ry="5.5" fill="#2a211f" opacity="1"/><polygon points="10,55 45,50 55,100 8,100" fill="#dcb9bb" opacity="1"/><polygon points="40,60 92,58 96,100 40,100" fill="#e8e6e8" opacity="1"/></g><rect x="0.5" y="0.5" width="99" height="99" fill="none" stroke="#26332c" stroke-width="2"/></svg>
<div class="a" style="left:853px;top:311px;width:13px;height:17px;background:#f4f4f4;border-bottom-right-radius:4px"></div>
<svg style="left:852px;top:312px" width="10" height="10" viewBox="0 0 10 10"><rect x="0.6" y="0.6" width="8.8" height="8.8" rx="1.6" fill="#a9a9a9" stroke="#6f6f6f" stroke-width="1.2"/><rect x="2" y="2.2" width="6" height="1.8" fill="#555"/><rect x="1.4" y="4.4" width="7.2" height="0.6" fill="#ddd"/><rect x="2.2" y="5.6" width="2" height="2" fill="#555"/><rect x="5.8" y="5.6" width="2" height="2" fill="#555"/></svg>
<div class="t" style="left:903.5px;top:468px;width:200px;text-align:center;font-size:10.95px;color:#7e7e7e">Side 12 - Side 13</div>
<div class="a" style="left:1176px;top:312px;width:300px;height:148px;background:#3f524c"></div>
<svg style="left:1204px;top:340px" width="92" height="92" viewBox="0 0 92 92"><rect x="0" y="0" width="92" height="92" fill="#000"/><line x1="0" y1="0" x2="92" y2="92" stroke="#8a8a8a" stroke-width="1.1"/><line x1="92" y1="0" x2="0" y2="92" stroke="#8a8a8a" stroke-width="1.1"/><rect x="0.5" y="0.5" width="91" height="91" fill="none" stroke="#222" stroke-width="1"/></svg>
<svg style="left:1356px;top:340px" width="92" height="92" viewBox="0 0 92 92"><rect x="0" y="0" width="92" height="92" fill="#000"/><line x1="0" y1="0" x2="92" y2="92" stroke="#8a8a8a" stroke-width="1.1"/><line x1="92" y1="0" x2="0" y2="92" stroke="#8a8a8a" stroke-width="1.1"/><rect x="0.5" y="0.5" width="91" height="91" fill="none" stroke="#222" stroke-width="1"/></svg>
<div class="a" style="left:1175px;top:311px;width:13px;height:17px;background:#f4f4f4;border-bottom-right-radius:4px"></div>
<svg style="left:1174px;top:312px" width="10" height="10" viewBox="0 0 10 10"><rect x="0.6" y="0.6" width="8.8" height="8.8" rx="1.6" fill="#a9a9a9" stroke="#6f6f6f" stroke-width="1.2"/><rect x="2" y="2.2" width="6" height="1.8" fill="#555"/><rect x="1.4" y="4.4" width="7.2" height="0.6" fill="#ddd"/><rect x="2.2" y="5.6" width="2" height="2" fill="#555"/><rect x="5.8" y="5.6" width="2" height="2" fill="#555"/></svg>
<div class="t" style="left:1225.5px;top:468px;width:200px;text-align:center;font-size:10.95px;color:#7e7e7e">Side 14 - Side 15</div>
<div class="a" style="left:210px;top:708px;width:300px;height:150px;background:#fff"></div>
<svg style="left:215px;top:738px" width="140" height="91" viewBox="0 0 140 91"><rect x="0" y="0" width="140" height="91" fill="#000"/><line x1="0" y1="0" x2="140" y2="91" stroke="#6a6a6a" stroke-width="1.1"/><line x1="140" y1="0" x2="0" y2="91" stroke="#6a6a6a" stroke-width="1.1"/><rect x="0.5" y="0.5" width="139" height="90" fill="none" stroke="#111" stroke-width="1"/></svg>
<svg style="left:365px;top:738px" width="140" height="91" viewBox="0 0 140 91"><rect x="0" y="0" width="140" height="91" fill="#000"/><line x1="0" y1="0" x2="140" y2="91" stroke="#6a6a6a" stroke-width="1.1"/><line x1="140" y1="0" x2="0" y2="91" stroke="#6a6a6a" stroke-width="1.1"/><rect x="0.5" y="0.5" width="139" height="90" fill="none" stroke="#111" stroke-width="1"/></svg>
<div class="a" style="left:206px;top:705px;width:14px;height:14px;background:#f4f4f4;border-bottom-right-radius:3px"></div>
<div class="a" style="left:208px;top:707px;width:10px;height:10px;background:#fbd94f;border-radius:2px"></div>
<div class="a" style="left:498px;top:843px;width:16px;height:16px;background:#f4f4f4;border-top-left-radius:3px"></div>
<svg style="left:502px;top:847px" width="10" height="10" viewBox="0 0 10 10"><rect x="0" y="0" width="10" height="10" fill="#666"/><line x1="1" y1="1" x2="9" y2="9" stroke="#eee" stroke-width="1.2"/><line x1="9" y1="1" x2="1" y2="9" stroke="#eee" stroke-width="1.2"/></svg>
<div class="t" style="left:259.0px;top:866px;width:200px;text-align:center;font-size:10.4px;color:#7e7e7e">SS2v4</div>
<div class="a" style="left:526px;top:705px;width:312px;height:156px;background:#fff;border:2px solid #4a90e2"></div>
<svg style="left:562px;top:715px" width="91" height="136" viewBox="0 0 91 136"><rect x="0" y="0" width="91" height="136" fill="#000"/><line x1="0" y1="0" x2="91" y2="136" stroke="#6a6a6a" stroke-width="1.1"/><line x1="91" y1="0" x2="0" y2="136" stroke="#6a6a6a" stroke-width="1.1"/><rect x="0.5" y="0.5" width="90" height="135" fill="none" stroke="#111" stroke-width="1"/></svg>
<svg style="left:711px;top:715px" width="91" height="136" viewBox="0 0 91 136"><rect x="0" y="0" width="91" height="136" fill="#000"/><line x1="0" y1="0" x2="91" y2="136" stroke="#6a6a6a" stroke-width="1.1"/><line x1="91" y1="0" x2="0" y2="136" stroke="#6a6a6a" stroke-width="1.1"/><rect x="0.5" y="0.5" width="90" height="135" fill="none" stroke="#111" stroke-width="1"/></svg>
<div class="a" style="left:528px;top:705px;width:14px;height:14px;background:#f4f4f4;border-bottom-right-radius:3px"></div>
<div class="a" style="left:530px;top:707px;width:10px;height:10px;background:#fbd94f;border-radius:2px"></div>
<div class="a" style="left:820px;top:843px;width:16px;height:16px;background:#f4f4f4;border-top-left-radius:3px"></div>
<svg style="left:824px;top:847px" width="10" height="10" viewBox="0 0 10 10"><rect x="0" y="0" width="10" height="10" fill="#666"/><line x1="1" y1="1" x2="9" y2="9" stroke="#eee" stroke-width="1.2"/><line x1="9" y1="1" x2="1" y2="9" stroke="#eee" stroke-width="1.2"/></svg>
<div class="t" style="left:581.0px;top:866px;width:200px;text-align:center;font-size:10.4px;color:#7e7e7e">SS2v5</div>
<div class="a" style="left:854px;top:708px;width:300px;height:150px;background:#fff"></div>
<svg style="left:859px;top:713px" width="140" height="140" viewBox="0 0 140 140"><rect x="0" y="0" width="140" height="140" fill="#000"/><line x1="0" y1="0" x2="140" y2="140" stroke="#6a6a6a" stroke-width="1.1"/><line x1="140" y1="0" x2="0" y2="140" stroke="#6a6a6a" stroke-width="1.1"/><rect x="0.5" y="0.5" width="139" height="139" fill="none" stroke="#111" stroke-width="1"/></svg>
<svg style="left:1009px;top:713px" width="140" height="140" viewBox="0 0 140 140"><rect x="0" y="0" width="140" height="140" fill="#000"/><line x1="0" y1="0" x2="140" y2="140" stroke="#6a6a6a" stroke-width="1.1"/><line x1="140" y1="0" x2="0" y2="140" stroke="#6a6a6a" stroke-width="1.1"/><rect x="0.5" y="0.5" width="139" height="139" fill="none" stroke="#111" stroke-width="1"/></svg>
<div class="a" style="left:850px;top:705px;width:14px;height:14px;background:#f4f4f4;border-bottom-right-radius:3px"></div>
<div class="a" style="left:852px;top:707px;width:10px;height:10px;background:#fbd94f;border-radius:2px"></div>
<div class="a" style="left:1142px;top:843px;width:16px;height:16px;background:#f4f4f4;border-top-left-radius:3px"></div>
<svg style="left:1146px;top:847px" width="10" height="10" viewBox="0 0 10 10"><rect x="0" y="0" width="10" height="10" fill="#666"/><line x1="1" y1="1" x2="9" y2="9" stroke="#eee" stroke-width="1.2"/><line x1="9" y1="1" x2="1" y2="9" stroke="#eee" stroke-width="1.2"/></svg>
<div class="t" style="left:903.0px;top:866px;width:200px;text-align:center;font-size:10.4px;color:#7e7e7e">SS2v6</div>
<div class="a" style="left:1176px;top:708px;width:300px;height:150px;background:#fff"></div>
<svg style="left:1190px;top:722px" width="122" height="121" viewBox="0 0 122 121"><rect x="0" y="0" width="122" height="121" fill="#000"/><line x1="0" y1="0" x2="122" y2="121" stroke="#6a6a6a" stroke-width="1.1"/><line x1="122" y1="0" x2="0" y2="121" stroke="#6a6a6a" stroke-width="1.1"/><rect x="0.5" y="0.5" width="121" height="120" fill="none" stroke="#111" stroke-width="1"/></svg>
<svg style="left:1340px;top:722px" width="122" height="121" viewBox="0 0 122 121"><rect x="0" y="0" width="122" height="121" fill="#000"/><line x1="0" y1="0" x2="122" y2="121" stroke="#6a6a6a" stroke-width="1.1"/><line x1="122" y1="0" x2="0" y2="121" stroke="#6a6a6a" stroke-width="1.1"/><rect x="0.5" y="0.5" width="121" height="120" fill="none" stroke="#111" stroke-width="1"/></svg>
<div class="a" style="left:1172px;top:705px;width:14px;height:14px;background:#f4f4f4;border-bottom-right-radius:3px"></div>
<div class="a" style="left:1174px;top:707px;width:10px;height:10px;background:#fbd94f;border-radius:2px"></div>
<div class="a" style="left:1464px;top:843px;width:16px;height:16px;background:#f4f4f4;border-top-left-radius:3px"></div>
<svg style="left:1468px;top:847px" width="10" height="10" viewBox="0 0 10 10"><rect x="0" y="0" width="10" height="10" fill="#666"/><line x1="1" y1="1" x2="9" y2="9" stroke="#eee" stroke-width="1.2"/><line x1="9" y1="1" x2="1" y2="9" stroke="#eee" stroke-width="1.2"/></svg>
<div class="t" style="left:1225.0px;top:866px;width:200px;text-align:center;font-size:10.4px;color:#7e7e7e">SS2v7</div>
<svg style="left:16px;top:110px;overflow:hidden" width="146" height="97" viewBox="0 0 100 100" preserveAspectRatio="none"><defs><filter id="p40" x="-5%" y="-5%" width="110%" height="110%"><feGaussianBlur stdDeviation="0.6"/></filter><filter id="p41" x="-5%" y="-5%" width="110%" height="110%"><feGaussianBlur stdDeviation="0.25"/></filter></defs><rect x="0" y="0" width="100" height="100" fill="url(#p39)"/><g filter="url(#p40)"><defs><linearGradient id="p39" x1="0" y1="0" x2="0" y2="1"><stop offset="0" stop-color="#34422a"/><stop offset="0.3" stop-color="#3e4e2e"/><stop offset="0.48" stop-color="#2d3a22"/><stop offset="0.5" stop-color="#5f8a40"/><stop offset="1" stop-color="#72964b"/></linearGradient></defs><rect x="0" y="0" width="100" height="100" fill="url(#p39)"/><ellipse cx="84.4" cy="10.2" rx="4.8" ry="4.3" fill="#6e8048" opacity="0.67"/><ellipse cx="83.1" cy="30.2" rx="4.1" ry="3.8" fill="#5a6e3c" opacity="0.77"/><ellipse cx="47.5" cy="18.4" rx="2.8" ry="2.1" fill="#3a4a2a" opacity="0.7"/><ellipse cx="13.0" cy="32.5" rx="4.0" ry="4.6" fill="#6e8048" opacity="0.66"/><ellipse cx="88.4" cy="36.5" rx="2.3" ry="1.5" fill="#6e8048" opacity="0.86"/><ellipse cx="40.7" cy="42.2" rx="3.5" ry="3.8" fill="#4a5c32" opacity="0.67"/><ellipse cx="55.3" cy="32.0" rx="4.9" ry="3.8" fill="#6e8048" opacity="0.69"/><ellipse cx="54.1" cy="41.1" rx="2.3" ry="2.3" fill="#2c3822" opacity="0.56"/><ellipse cx="79.3" cy="8.1" rx="4.9" ry="5.2" fill="#6e8048" opacity="0.71"/><ellipse cx="94.5" cy="0.8" rx="4.1" ry="3.5" fill="#5a6e3c" opacity="0.86"/><ellipse cx="24.0" cy="36.7" rx="3.2" ry="3.2" fill="#6e8048" opacity="0.5"/><ellipse cx="85.8" cy="28.8" rx="4.1" ry="3.0" fill="#5a6e3c" opacity="0.71"/><ellipse cx="72.3" cy="17.7" rx="3.4" ry="3.8" fill="#4a5c32" opacity="0.85"/><ellipse cx="20.7" cy="20.0" rx="2.7" ry="1.9" fill="#2c3822" opacity="0.8"/><ellipse cx="53.3" cy="47.1" rx="3.2" ry="2.3" fill="#4a5c32" opacity="0.62"/><ellipse cx="99.5" cy="20.5" rx="4.9" ry="3.5" fill="#4a5c32" opacity="0.81"/><ellipse cx="52.3" cy="2.4" rx="2.6" ry="3.0" fill="#6e8048" opacity="0.8"/><ellipse cx="64.6" cy="2.8" rx="3.6" ry="2.7" fill="#5a6e3c" opacity="0.86"/><ellipse cx="86.5" cy="37.0" rx="2.8" ry="2.0" fill="#3a4a2a" opacity="0.61"/><ellipse cx="59.7" cy="18.6" rx="4.0" ry="4.7" fill="#3a4a2a" opacity="0.83"/><ellipse cx="48.2" cy="19.0" rx="4.2" ry="3.0" fill="#2c3822" opacity="0.62"/><ellipse cx="69.4" cy="38.8" rx="4.1" ry="3.8" fill="#4a5c32" opacity="0.78"/><ellipse cx="91.2" cy="16.3" rx="3.7" ry="3.5" fill="#5a6e3c" opacity="0.84"/><ellipse cx="77.5" cy="42.9" rx="4.5" ry="3.5" fill="#3a4a2a" opacity="0.75"/><ellipse cx="77.5" cy="27.6" rx="3.4" ry="3.9" fill="#3a4a2a" opacity="0.67"/><ellipse cx="39.1" cy="26.7" rx="4.0" ry="4.8" fill="#2c3822" opacity="0.75"/><ellipse cx="27.6" cy="22.9" rx="2.9" ry="3.0" fill="#5a6e3c" opacity="0.61"/><ellipse cx="10.6" cy="6.2" rx="3.5" ry="3.4" fill="#6e8048" opacity="0.69"/><ellipse cx="27.2" cy="42.8" rx="2.7" ry="3.0" fill="#2c3822" opacity="0.76"/><ellipse cx="93.8" cy="39.3" rx="4.1" ry="3.2" fill="#4a5c32" opacity="0.77"/><ellipse cx="92.6" cy="38.3" rx="3.3" ry="3.7" fill="#6e8048" opacity="0.68"/><ellipse cx="49.8" cy="21.0" rx="4.8" ry="3.6" fill="#6e8048" opacity="0.55"/><ellipse cx="32.9" cy="35.4" rx="4.1" ry="3.2" fill="#3a4a2a" opacity="0.62"/><ellipse cx="33.3" cy="32.6" rx="3.9" ry="4.4" fill="#2c3822" opacity="0.86"/><ellipse cx="66.6" cy="12.1" rx="3.3" ry="2.8" fill="#3a4a2a" opacity="0.75"/><ellipse cx="37.3" cy="33.6" rx="4.2" ry="2.6" fill="#3a4a2a" opacity="0.59"/><ellipse cx="78.9" cy="45.4" rx="2.2" ry="2.5" fill="#4a5c32" opacity="0.58"/><ellipse cx="12.9" cy="21.6" rx="2.2" ry="1.4" fill="#5a6e3c" opacity="0.7"/><ellipse cx="57.1" cy="28.8" rx="3.3" ry="2.1" fill="#5a6e3c" opacity="0.82"/><ellipse cx="37.1" cy="37.3" rx="3.1" ry="2.8" fill="#5a6e3c" opacity="0.53"/><ellipse cx="49.1" cy="24.0" rx="4.0" ry="2.6" fill="#5a6e3c" opacity="0.86"/><ellipse cx="77.4" cy="9.9" rx="2.2" ry="1.9" fill="#3a4a2a" opacity="0.58"/><ellipse cx="13.6" cy="0.9" rx="3.5" ry="2.4" fill="#2c3822" opacity="0.66"/><ellipse cx="46.9" cy="21.9" rx="2.5" ry="1.9" fill="#4a5c32" opacity="0.88"/><ellipse cx="65.6" cy="47.9" rx="4.6" ry="4.4" fill="#2c3822" opacity="0.62"/><ellipse cx="32.5" cy="28.2" rx="3.4" ry="3.8" fill="#3a4a2a" opacity="0.51"/><ellipse cx="63.3" cy="32.0" rx="2.3" ry="1.7" fill="#3a4a2a" opacity="0.78"/><ellipse cx="80.8" cy="12.2" rx="2.1" ry="2.1" fill="#2c3822" opacity="0.68"/><ellipse cx="11.1" cy="19.8" rx="4.3" ry="4.7" fill="#2c3822" opacity="0.53"/><ellipse cx="82.7" cy="29.0" rx="2.3" ry="2.1" fill="#5a6e3c" opacity="0.61"/><ellipse cx="21.0" cy="27.9" rx="2.6" ry="2.8" fill="#5a6e3c" opacity="0.85"/><ellipse cx="54.0" cy="5.8" rx="4.1" ry="4.4" fill="#2c3822" opacity="0.57"/><ellipse cx="25.6" cy="4.6" rx="2.3" ry="2.8" fill="#6e8048" opacity="0.73"/><ellipse cx="27.8" cy="24.7" rx="5.0" ry="4.4" fill="#3a4a2a" opacity="0.71"/><ellipse cx="52.6" cy="5.1" rx="3.9" ry="4.0" fill="#2c3822" opacity="0.64"/><ellipse cx="51.5" cy="15.3" rx="2.0" ry="2.3" fill="#6e8048" opacity="0.87"/><ellipse cx="36.1" cy="38.7" rx="4.1" ry="4.2" fill="#5a6e3c" opacity="0.74"/><ellipse cx="93.7" cy="31.1" rx="4.5" ry="3.2" fill="#3a4a2a" opacity="0.8"/><ellipse cx="76.2" cy="44.3" rx="4.3" ry="4.4" fill="#4a5c32" opacity="0.78"/><ellipse cx="72.1" cy="1.6" rx="3.6" ry="3.3" fill="#5a6e3c" opacity="0.72"/><ellipse cx="38.1" cy="1.8" rx="2.5" ry="2.9" fill="#2c3822" opacity="0.85"/><ellipse cx="46.6" cy="18.4" rx="4.4" ry="4.3" fill="#6e8048" opacity="0.88"/><ellipse cx="59.7" cy="38.5" rx="3.5" ry="2.9" fill="#2c3822" opacity="0.76"/><ellipse cx="21.8" cy="32.7" rx="4.3" ry="4.9" fill="#3a4a2a" opacity="0.51"/><ellipse cx="47.8" cy="4.0" rx="4.2" ry="4.0" fill="#5a6e3c" opacity="0.52"/><ellipse cx="35.8" cy="32.1" rx="3.1" ry="2.1" fill="#3a4a2a" opacity="0.7"/><ellipse cx="98.6" cy="36.2" rx="2.3" ry="2.3" fill="#2c3822" opacity="0.61"/><ellipse cx="18.6" cy="36.7" rx="2.1" ry="1.9" fill="#4a5c32" opacity="0.67"/><ellipse cx="59.2" cy="5.5" rx="3.7" ry="4.2" fill="#5a6e3c" opacity="0.82"/><ellipse cx="27.9" cy="11.4" rx="4.3" ry="4.7" fill="#6e8048" opacity="0.81"/><ellipse cx="75.8" cy="44.0" rx="4.2" ry="2.5" fill="#26301d" opacity="0.68"/><ellipse cx="97.0" cy="43.4" rx="2.9" ry="2.8" fill="#26301d" opacity="0.93"/><ellipse cx="82.6" cy="20.2" rx="2.6" ry="2.1" fill="#26301d" opacity="0.86"/><ellipse cx="76.0" cy="20.9" rx="4.9" ry="5.2" fill="#26301d" opacity="0.83"/><ellipse cx="92.1" cy="12.4" rx="3.2" ry="2.5" fill="#1e2618" opacity="0.67"/><ellipse cx="75.4" cy="25.0" rx="2.1" ry="2.0" fill="#26301d" opacity="0.79"/><ellipse cx="90.4" cy="10.8" rx="2.1" ry="2.3" fill="#26301d" opacity="0.88"/><ellipse cx="87.9" cy="28.3" rx="3.8" ry="4.1" fill="#1e2618" opacity="0.71"/><ellipse cx="90.3" cy="31.7" rx="2.4" ry="2.5" fill="#1e2618" opacity="0.84"/><ellipse cx="98.4" cy="31.7" rx="2.7" ry="2.6" fill="#26301d" opacity="0.67"/><ellipse cx="90.7" cy="45.2" rx="4.8" ry="5.2" fill="#26301d" opacity="0.73"/><ellipse cx="94.7" cy="33.6" rx="4.6" ry="4.9" fill="#26301d" opacity="0.66"/><ellipse cx="89.9" cy="19.0" rx="3.1" ry="2.3" fill="#1e2618" opacity="0.61"/><ellipse cx="80.1" cy="23.9" rx="3.7" ry="3.0" fill="#26301d" opacity="0.61"/><ellipse cx="96.4" cy="25.3" rx="3.8" ry="4.3" fill="#26301d" opacity="0.66"/><ellipse cx="96.2" cy="42.0" rx="2.7" ry="2.6" fill="#1e2618" opacity="0.77"/><ellipse cx="80.0" cy="13.1" rx="3.5" ry="3.4" fill="#26301d" opacity="0.7"/><ellipse cx="86.3" cy="45.8" rx="3.1" ry="3.4" fill="#26301d" opacity="0.86"/><ellipse cx="98.8" cy="45.5" rx="2.8" ry="1.8" fill="#26301d" opacity="0.64"/><ellipse cx="100.0" cy="46.3" rx="2.4" ry="1.8" fill="#26301d" opacity="0.65"/><ellipse cx="91.4" cy="28.2" rx="4.1" ry="4.7" fill="#26301d" opacity="0.78"/><ellipse cx="98.4" cy="20.9" rx="2.5" ry="2.5" fill="#26301d" opacity="0.7"/><ellipse cx="94.2" cy="31.3" rx="2.7" ry="1.9" fill="#26301d" opacity="0.9"/><ellipse cx="99.2" cy="38.2" rx="3.1" ry="2.0" fill="#1e2618" opacity="0.66"/><ellipse cx="78.5" cy="23.9" rx="2.8" ry="2.2" fill="#1e2618" opacity="0.67"/><rect x="4" y="0" width="6" height="45" fill="#1f2818" opacity="0.6"/><path d="M0 24 Q10 22 22 28 Q34 34 42 36 Q30 40 18 36 Q8 34 0 40 Z" fill="#8e9a62" opacity="0.8"/><rect x="0" y="50" width="9" height="35" fill="#2e4024" opacity="0.9"/><path d="M25 57 Q60 53 100 56 V62 Q60 60 28 63 Z" fill="#33472a" opacity="0.9"/><ellipse cx="48.1" cy="87.3" rx="3.0" ry="3.1" fill="#80a658" opacity="0.6"/><ellipse cx="16.3" cy="70.4" rx="2.6" ry="2.2" fill="#78a050" opacity="0.59"/><ellipse cx="46.8" cy="75.4" rx="2.1" ry="2.0" fill="#78a050" opacity="0.6"/><ellipse cx="52.0" cy="77.5" rx="2.5" ry="1.5" fill="#6a9045" opacity="0.57"/><ellipse cx="30.7" cy="86.6" rx="3.8" ry="3.6" fill="#6a9045" opacity="0.33"/><ellipse cx="24.5" cy="87.2" rx="2.7" ry="1.6" fill="#62863f" opacity="0.56"/><ellipse cx="43.5" cy="81.8" rx="1.9" ry="1.8" fill="#78a050" opacity="0.51"/><ellipse cx="62.4" cy="65.8" rx="3.1" ry="2.3" fill="#78a050" opacity="0.47"/><ellipse cx="23.3" cy="88.6" rx="3.4" ry="2.6" fill="#6a9045" opacity="0.53"/><ellipse cx="54.6" cy="65.9" rx="2.7" ry="2.4" fill="#78a050" opacity="0.41"/><ellipse cx="0.5" cy="88.5" rx="1.5" ry="1.2" fill="#62863f" opacity="0.41"/><ellipse cx="47.0" cy="92.9" rx="2.0" ry="1.6" fill="#6a9045" opacity="0.34"/><ellipse cx="57.5" cy="91.1" rx="3.4" ry="2.9" fill="#6a9045" opacity="0.36"/><ellipse cx="40.5" cy="83.0" rx="3.7" ry="3.1" fill="#80a658" opacity="0.45"/><ellipse cx="5.2" cy="99.0" rx="2.4" ry="2.1" fill="#62863f" opacity="0.42"/><ellipse cx="83.6" cy="62.8" rx="3.6" ry="3.2" fill="#62863f" opacity="0.57"/><ellipse cx="32.1" cy="95.1" rx="3.1" ry="3.6" fill="#62863f" opacity="0.66"/><ellipse cx="44.1" cy="85.0" rx="3.4" ry="2.9" fill="#78a050" opacity="0.46"/><ellipse cx="22.9" cy="84.1" rx="1.9" ry="1.4" fill="#62863f" opacity="0.58"/><ellipse cx="20.4" cy="68.3" rx="2.1" ry="1.7" fill="#80a658" opacity="0.38"/><ellipse cx="30.5" cy="64.0" rx="3.2" ry="2.0" fill="#78a050" opacity="0.32"/><ellipse cx="55.0" cy="97.6" rx="3.3" ry="3.9" fill="#78a050" opacity="0.56"/><ellipse cx="37.5" cy="89.6" rx="3.1" ry="3.1" fill="#80a658" opacity="0.33"/><ellipse cx="94.2" cy="69.1" rx="3.0" ry="2.9" fill="#6a9045" opacity="0.42"/><ellipse cx="23.0" cy="87.1" rx="3.9" ry="2.5" fill="#6a9045" opacity="0.57"/><ellipse cx="36.3" cy="78.3" rx="3.2" ry="3.7" fill="#6a9045" opacity="0.58"/><ellipse cx="46.6" cy="92.3" rx="1.8" ry="1.3" fill="#78a050" opacity="0.43"/><ellipse cx="55.1" cy="64.7" rx="3.8" ry="2.4" fill="#78a050" opacity="0.55"/><ellipse cx="19.4" cy="97.9" rx="2.6" ry="1.8" fill="#78a050" opacity="0.7"/><ellipse cx="72.2" cy="95.5" rx="3.7" ry="4.2" fill="#6a9045" opacity="0.5"/><ellipse cx="61.6" cy="88.9" rx="2.5" ry="2.9" fill="#6a9045" opacity="0.34"/><ellipse cx="30.5" cy="72.9" rx="3.3" ry="3.3" fill="#62863f" opacity="0.46"/><ellipse cx="50.6" cy="74.1" rx="3.2" ry="3.0" fill="#78a050" opacity="0.38"/><ellipse cx="17.7" cy="75.9" rx="2.4" ry="1.6" fill="#6a9045" opacity="0.47"/><ellipse cx="57.2" cy="84.8" rx="2.9" ry="2.8" fill="#78a050" opacity="0.42"/><ellipse cx="8.3" cy="67.2" rx="3.0" ry="2.7" fill="#62863f" opacity="0.52"/><ellipse cx="91.0" cy="93.9" rx="2.4" ry="1.8" fill="#80a658" opacity="0.57"/><ellipse cx="96.5" cy="78.7" rx="2.9" ry="3.2" fill="#6a9045" opacity="0.48"/><ellipse cx="30.4" cy="69.5" rx="3.8" ry="3.4" fill="#62863f" opacity="0.58"/><ellipse cx="3.2" cy="63.6" rx="3.4" ry="3.3" fill="#62863f" opacity="0.45"/></g><g filter="url(#p41)"><ellipse cx="55" cy="31" rx="2.6" ry="1.8" fill="#2a211f" opacity="1"/><ellipse cx="55" cy="33.5" rx="2.4" ry="2.8" fill="#d6b09a" opacity="1"/><polygon points="50,37.5 60,37.5 61,48 58,60 51,60 48,46" fill="#e8e6e8" opacity="1"/><ellipse cx="62" cy="35" rx="3" ry="5.5" fill="#c7a37c" opacity="1"/><ellipse cx="62" cy="34" rx="2.2" ry="2.8" fill="#d6b09a" opacity="1"/><polygon points="59.5,39 66,39 68,70 70,90 60,90 59,60" fill="#cda4a7" opacity="1"/><ellipse cx="50" cy="53" rx="2.8" ry="4" fill="#2a211f" opacity="1"/><ellipse cx="50" cy="52" rx="2.1" ry="2.7" fill="#d6b09a" opacity="1"/><polygon points="46.5,56 53.5,56 55,79 45,79" fill="#cda4a7" opacity="1"/><ellipse cx="42" cy="56.5" rx="2.6" ry="3.2" fill="#7a5a44" opacity="1"/><ellipse cx="42" cy="57" rx="2" ry="2.5" fill="#d6b09a" opacity="1"/><polygon points="38.5,60 45,60 46,80 38,80" fill="#cda4a7" opacity="1"/><ellipse cx="57.5" cy="62.5" rx="2.2" ry="2.6" fill="#d6b09a" opacity="1"/><polygon points="54.5,65 61,65 61,78 55,78" fill="#e8e6e8" opacity="1"/></g></svg>
<svg style="left:16px;top:286px;overflow:hidden" width="146" height="96" viewBox="0 0 100 100" preserveAspectRatio="none"><defs><filter id="p43" x="-5%" y="-5%" width="110%" height="110%"><feGaussianBlur stdDeviation="0.6"/></filter><filter id="p44" x="-5%" y="-5%" width="110%" height="110%"><feGaussianBlur stdDeviation="0.25"/></filter></defs><rect x="0" y="0" width="100" height="100" fill="url(#p42)"/><g filter="url(#p43)"><defs><linearGradient id="p42" x1="0" y1="0" x2="0" y2="1"><stop offset="0" stop-color="#55683e"/><stop offset="0.5" stop-color="#354230"/><stop offset="0.62" stop-color="#2f3b27"/><stop offset="0.63" stop-color="#6f964a"/><stop offset="1" stop-color="#6a9047"/></linearGradient></defs><rect x="0" y="0" width="100" height="100" fill="url(#p42)"/><ellipse cx="29.6" cy="21.3" rx="3.2" ry="2.1" fill="#3a4530" opacity="0.65"/><ellipse cx="55.1" cy="31.0" rx="2.2" ry="1.5" fill="#4d5a3d" opacity="0.78"/><ellipse cx="35.2" cy="52.4" rx="4.3" ry="4.9" fill="#26301e" opacity="0.53"/><ellipse cx="42.8" cy="35.0" rx="4.7" ry="3.1" fill="#2e3a26" opacity="0.55"/><ellipse cx="72.3" cy="29.1" rx="3.3" ry="2.9" fill="#26301e" opacity="0.84"/><ellipse cx="65.4" cy="31.1" rx="4.4" ry="3.2" fill="#4d5a3d" opacity="0.51"/><ellipse cx="71.6" cy="42.6" rx="3.3" ry="3.0" fill="#26301e" opacity="0.71"/><ellipse cx="48.0" cy="37.4" rx="4.5" ry="4.5" fill="#3a4530" opacity="0.87"/><ellipse cx="59.9" cy="24.5" rx="3.0" ry="2.5" fill="#3a4530" opacity="0.79"/><ellipse cx="46.4" cy="47.6" rx="2.0" ry="2.0" fill="#4d5a3d" opacity="0.51"/><ellipse cx="44.6" cy="26.7" rx="3.6" ry="3.7" fill="#3a4530" opacity="0.76"/><ellipse cx="76.6" cy="54.6" rx="3.9" ry="2.9" fill="#26301e" opacity="0.89"/><ellipse cx="34.7" cy="38.4" rx="3.1" ry="2.7" fill="#3a4530" opacity="0.55"/><ellipse cx="36.7" cy="27.7" rx="3.1" ry="2.3" fill="#26301e" opacity="0.75"/><ellipse cx="27.0" cy="41.5" rx="3.5" ry="3.6" fill="#3a4530" opacity="0.67"/><ellipse cx="27.4" cy="38.4" rx="2.2" ry="2.3" fill="#26301e" opacity="0.51"/><ellipse cx="43.1" cy="54.3" rx="2.1" ry="2.0" fill="#26301e" opacity="0.64"/><ellipse cx="59.0" cy="54.8" rx="4.7" ry="4.0" fill="#2e3a26" opacity="0.65"/><ellipse cx="38.7" cy="21.0" rx="4.6" ry="2.9" fill="#26301e" opacity="0.72"/><ellipse cx="34.3" cy="42.9" rx="4.7" ry="5.1" fill="#26301e" opacity="0.65"/><ellipse cx="53.7" cy="30.8" rx="2.4" ry="1.7" fill="#26301e" opacity="0.67"/><ellipse cx="64.1" cy="35.3" rx="2.1" ry="1.8" fill="#26301e" opacity="0.62"/><ellipse cx="66.6" cy="19.1" rx="3.6" ry="4.0" fill="#2e3a26" opacity="0.64"/><ellipse cx="32.2" cy="45.6" rx="2.7" ry="2.5" fill="#3a4530" opacity="0.61"/><ellipse cx="52.3" cy="25.7" rx="3.0" ry="2.5" fill="#3a4530" opacity="0.88"/><ellipse cx="52.3" cy="46.8" rx="4.7" ry="2.9" fill="#4d5a3d" opacity="0.73"/><ellipse cx="31.3" cy="30.0" rx="3.0" ry="2.8" fill="#2e3a26" opacity="0.81"/><ellipse cx="51.2" cy="45.8" rx="4.3" ry="3.3" fill="#26301e" opacity="0.64"/><ellipse cx="72.7" cy="49.9" rx="4.8" ry="4.6" fill="#3a4530" opacity="0.86"/><ellipse cx="66.5" cy="41.1" rx="3.5" ry="3.5" fill="#3a4530" opacity="0.78"/><ellipse cx="45.0" cy="35.5" rx="4.9" ry="5.4" fill="#4d5a3d" opacity="0.64"/><ellipse cx="65.5" cy="31.0" rx="4.3" ry="4.7" fill="#2e3a26" opacity="0.65"/><ellipse cx="67.3" cy="50.0" rx="3.1" ry="2.4" fill="#2e3a26" opacity="0.84"/><ellipse cx="45.8" cy="20.6" rx="2.9" ry="3.3" fill="#4d5a3d" opacity="0.52"/><ellipse cx="46.0" cy="40.3" rx="2.9" ry="2.5" fill="#4d5a3d" opacity="0.6"/><ellipse cx="49.3" cy="50.0" rx="3.7" ry="3.0" fill="#26301e" opacity="0.7"/><ellipse cx="72.3" cy="28.5" rx="4.9" ry="3.5" fill="#3a4530" opacity="0.67"/><ellipse cx="51.8" cy="23.0" rx="3.6" ry="3.2" fill="#2e3a26" opacity="0.63"/><ellipse cx="45.5" cy="53.8" rx="3.8" ry="2.3" fill="#4d5a3d" opacity="0.78"/><ellipse cx="72.0" cy="18.5" rx="4.2" ry="3.1" fill="#3a4530" opacity="0.85"/><rect x="0" y="20" width="6" height="60" fill="#3a3a30" opacity="0.6"/><rect x="22" y="50" width="12" height="9" fill="#7a4f52" opacity="0.85"/><ellipse cx="90.0" cy="71.2" rx="3.5" ry="2.7" fill="#62863f" opacity="0.37"/><ellipse cx="15.1" cy="74.3" rx="3.1" ry="2.0" fill="#62863f" opacity="0.36"/><ellipse cx="50.4" cy="93.6" rx="3.1" ry="3.2" fill="#78a050" opacity="0.36"/><ellipse cx="90.0" cy="95.1" rx="3.8" ry="4.4" fill="#6a9045" opacity="0.41"/><ellipse cx="60.6" cy="82.8" rx="2.6" ry="2.9" fill="#62863f" opacity="0.58"/><ellipse cx="69.6" cy="94.6" rx="1.7" ry="1.4" fill="#62863f" opacity="0.61"/><ellipse cx="37.7" cy="86.5" rx="1.6" ry="1.1" fill="#6a9045" opacity="0.69"/><ellipse cx="37.2" cy="86.8" rx="3.4" ry="3.8" fill="#78a050" opacity="0.62"/><ellipse cx="24.3" cy="75.3" rx="2.7" ry="3.2" fill="#6a9045" opacity="0.46"/><ellipse cx="67.6" cy="73.1" rx="3.6" ry="3.3" fill="#62863f" opacity="0.57"/><ellipse cx="52.7" cy="65.7" rx="1.6" ry="1.2" fill="#78a050" opacity="0.55"/><ellipse cx="17.9" cy="75.8" rx="2.6" ry="3.0" fill="#78a050" opacity="0.34"/><ellipse cx="24.7" cy="76.3" rx="2.3" ry="2.6" fill="#78a050" opacity="0.31"/><ellipse cx="23.8" cy="69.5" rx="3.3" ry="3.9" fill="#78a050" opacity="0.53"/><ellipse cx="19.3" cy="76.5" rx="2.2" ry="2.4" fill="#62863f" opacity="0.43"/><ellipse cx="60.3" cy="96.7" rx="3.8" ry="4.0" fill="#6a9045" opacity="0.53"/><ellipse cx="20.6" cy="80.2" rx="2.8" ry="2.2" fill="#78a050" opacity="0.4"/><ellipse cx="52.6" cy="99.1" rx="2.7" ry="2.4" fill="#6a9045" opacity="0.54"/><ellipse cx="51.0" cy="75.9" rx="1.7" ry="1.4" fill="#6a9045" opacity="0.48"/><ellipse cx="15.8" cy="96.0" rx="2.7" ry="2.5" fill="#78a050" opacity="0.52"/><ellipse cx="92.5" cy="65.5" rx="1.8" ry="1.9" fill="#6a9045" opacity="0.65"/><ellipse cx="2.0" cy="68.3" rx="3.9" ry="3.1" fill="#6a9045" opacity="0.31"/><ellipse cx="55.2" cy="87.5" rx="1.7" ry="1.4" fill="#6a9045" opacity="0.48"/><ellipse cx="64.6" cy="98.0" rx="1.7" ry="1.2" fill="#78a050" opacity="0.4"/><ellipse cx="79.0" cy="85.8" rx="2.7" ry="1.9" fill="#6a9045" opacity="0.46"/><ellipse cx="47.4" cy="95.4" rx="2.5" ry="1.8" fill="#78a050" opacity="0.67"/><ellipse cx="51.3" cy="63.9" rx="2.9" ry="2.0" fill="#6a9045" opacity="0.6"/><ellipse cx="77.5" cy="81.8" rx="2.1" ry="2.0" fill="#6a9045" opacity="0.67"/><ellipse cx="44.1" cy="72.7" rx="3.9" ry="2.4" fill="#78a050" opacity="0.34"/><ellipse cx="86.0" cy="84.3" rx="2.5" ry="2.5" fill="#6a9045" opacity="0.43"/></g><g filter="url(#p44)"><ellipse cx="8.7" cy="9.3" rx="1.9" ry="2.2" fill="#8aa468" opacity="0.94"/><ellipse cx="17.7" cy="5.3" rx="1.5" ry="1.5" fill="#6e8a52" opacity="0.9"/><ellipse cx="96.9" cy="12.9" rx="2.3" ry="2.5" fill="#6e8a52" opacity="0.84"/><ellipse cx="97.2" cy="14.2" rx="1.8" ry="1.7" fill="#7f9a60" opacity="0.8"/><ellipse cx="43.0" cy="1.8" rx="2.9" ry="2.9" fill="#8aa468" opacity="0.85"/><ellipse cx="65.2" cy="1.8" rx="1.2" ry="1.4" fill="#4f6238" opacity="0.81"/><ellipse cx="73.7" cy="14.5" rx="1.2" ry="0.8" fill="#6e8a52" opacity="0.91"/><ellipse cx="42.8" cy="0.8" rx="1.5" ry="1.8" fill="#7f9a60" opacity="0.7"/><ellipse cx="71.2" cy="6.0" rx="2.1" ry="2.0" fill="#6e8a52" opacity="0.94"/><ellipse cx="18.1" cy="3.1" rx="1.6" ry="1.1" fill="#56703d" opacity="0.81"/><ellipse cx="39.6" cy="1.4" rx="1.8" ry="1.9" fill="#4f6238" opacity="0.94"/><ellipse cx="32.5" cy="9.5" rx="1.7" ry="1.4" fill="#4f6238" opacity="0.82"/><ellipse cx="77.5" cy="5.8" rx="2.5" ry="2.4" fill="#7f9a60" opacity="0.91"/><ellipse cx="15.1" cy="6.3" rx="2.6" ry="1.7" fill="#6e8a52" opacity="0.72"/><ellipse cx="52.1" cy="12.9" rx="2.1" ry="1.8" fill="#7f9a60" opacity="0.9"/><ellipse cx="14.3" cy="3.5" rx="2.4" ry="1.8" fill="#6e8a52" opacity="0.72"/><ellipse cx="74.5" cy="6.6" rx="2.5" ry="2.0" fill="#56703d" opacity="0.93"/><ellipse cx="0.9" cy="12.2" rx="2.9" ry="3.2" fill="#8aa468" opacity="0.78"/><ellipse cx="6.2" cy="15.8" rx="2.8" ry="2.3" fill="#8aa468" opacity="0.89"/><ellipse cx="88.3" cy="3.8" rx="1.7" ry="1.8" fill="#6e8a52" opacity="0.7"/><ellipse cx="66.1" cy="9.2" rx="2.7" ry="2.0" fill="#7f9a60" opacity="0.76"/><ellipse cx="74.8" cy="8.5" rx="1.5" ry="1.4" fill="#7f9a60" opacity="0.81"/><ellipse cx="34.0" cy="1.4" rx="1.4" ry="1.6" fill="#7f9a60" opacity="0.83"/><ellipse cx="70.4" cy="14.2" rx="2.5" ry="2.4" fill="#4f6238" opacity="0.74"/><ellipse cx="11.5" cy="6.0" rx="2.2" ry="1.7" fill="#4f6238" opacity="0.79"/><ellipse cx="25.5" cy="10.5" rx="2.8" ry="1.8" fill="#8aa468" opacity="0.91"/><ellipse cx="0.8" cy="2.4" rx="1.2" ry="0.8" fill="#8aa468" opacity="0.73"/><ellipse cx="33.8" cy="12.4" rx="1.6" ry="1.8" fill="#8aa468" opacity="0.96"/><ellipse cx="4.3" cy="14.2" rx="2.2" ry="2.1" fill="#4f6238" opacity="0.98"/><ellipse cx="43.7" cy="14.7" rx="2.4" ry="1.7" fill="#4f6238" opacity="0.71"/><ellipse cx="69.0" cy="5.1" rx="2.9" ry="2.2" fill="#7f9a60" opacity="1.0"/><ellipse cx="66.2" cy="1.3" rx="1.3" ry="0.8" fill="#4f6238" opacity="0.91"/><ellipse cx="82.5" cy="4.4" rx="1.4" ry="1.2" fill="#7f9a60" opacity="0.85"/><ellipse cx="16.0" cy="7.4" rx="1.3" ry="1.1" fill="#6e8a52" opacity="0.95"/><ellipse cx="63.7" cy="5.3" rx="2.2" ry="2.0" fill="#6e8a52" opacity="0.95"/><ellipse cx="35.5" cy="13.5" rx="1.4" ry="0.8" fill="#7f9a60" opacity="0.89"/><ellipse cx="44.5" cy="3.7" rx="1.3" ry="1.4" fill="#8aa468" opacity="0.83"/><ellipse cx="14.9" cy="8.1" rx="1.8" ry="1.1" fill="#7f9a60" opacity="0.91"/><ellipse cx="16.4" cy="2.6" rx="2.6" ry="2.7" fill="#8aa468" opacity="0.85"/><ellipse cx="40.0" cy="6.0" rx="1.3" ry="1.5" fill="#7f9a60" opacity="0.79"/><ellipse cx="90.6" cy="1.5" rx="1.4" ry="1.4" fill="#6e8a52" opacity="0.96"/><ellipse cx="93.9" cy="8.7" rx="3.0" ry="3.3" fill="#7f9a60" opacity="0.9"/><ellipse cx="7.9" cy="1.3" rx="1.5" ry="1.0" fill="#8aa468" opacity="0.9"/><ellipse cx="85.4" cy="7.3" rx="2.7" ry="2.4" fill="#56703d" opacity="0.79"/><ellipse cx="89.9" cy="9.5" rx="2.3" ry="1.4" fill="#8aa468" opacity="0.96"/><ellipse cx="8.2" cy="6.2" rx="2.1" ry="2.0" fill="#6e8a52" opacity="0.89"/><ellipse cx="69.0" cy="12.0" rx="1.2" ry="1.1" fill="#8aa468" opacity="0.97"/><ellipse cx="34.5" cy="15.7" rx="2.9" ry="2.0" fill="#56703d" opacity="0.92"/><ellipse cx="19.4" cy="1.5" rx="2.4" ry="1.8" fill="#8aa468" opacity="0.97"/><ellipse cx="41.9" cy="4.3" rx="1.6" ry="1.8" fill="#4f6238" opacity="0.97"/><ellipse cx="86.6" cy="8.5" rx="2.8" ry="2.1" fill="#6e8a52" opacity="0.74"/><ellipse cx="99.2" cy="1.6" rx="2.4" ry="1.5" fill="#6e8a52" opacity="0.88"/><ellipse cx="47.4" cy="6.2" rx="1.7" ry="1.8" fill="#7f9a60" opacity="0.72"/><ellipse cx="40.4" cy="5.9" rx="1.9" ry="2.0" fill="#4f6238" opacity="0.91"/><ellipse cx="96.3" cy="16.0" rx="2.2" ry="1.3" fill="#6e8a52" opacity="0.81"/><ellipse cx="24.5" cy="10.5" rx="2.4" ry="1.8" fill="#6e8a52" opacity="0.91"/><ellipse cx="89.9" cy="12.3" rx="2.6" ry="2.7" fill="#56703d" opacity="0.79"/><ellipse cx="23.6" cy="10.6" rx="2.8" ry="2.6" fill="#6e8a52" opacity="0.71"/><ellipse cx="87.8" cy="2.5" rx="2.2" ry="2.0" fill="#6e8a52" opacity="0.7"/><ellipse cx="63.1" cy="1.2" rx="1.5" ry="1.1" fill="#7f9a60" opacity="0.71"/><ellipse cx="81.8" cy="0.2" rx="2.5" ry="1.6" fill="#56703d" opacity="0.81"/><ellipse cx="32.7" cy="8.7" rx="2.8" ry="3.0" fill="#6e8a52" opacity="0.94"/><ellipse cx="54.7" cy="7.3" rx="1.8" ry="2.0" fill="#6e8a52" opacity="0.9"/><ellipse cx="16.4" cy="8.5" rx="1.9" ry="1.3" fill="#7f9a60" opacity="0.78"/><ellipse cx="13.8" cy="6.4" rx="1.3" ry="0.9" fill="#56703d" opacity="0.71"/><ellipse cx="40.7" cy="15.8" rx="2.8" ry="3.2" fill="#56703d" opacity="0.85"/><ellipse cx="24.2" cy="2.6" rx="1.6" ry="1.6" fill="#8aa468" opacity="0.77"/><ellipse cx="38.4" cy="5.8" rx="3.0" ry="3.5" fill="#4f6238" opacity="0.76"/><ellipse cx="83.9" cy="9.1" rx="1.5" ry="1.7" fill="#8aa468" opacity="0.86"/><ellipse cx="97.1" cy="5.1" rx="2.9" ry="2.0" fill="#7f9a60" opacity="0.96"/><ellipse cx="19.2" cy="59.7" rx="1.7" ry="2.0" fill="#56703d" opacity="0.93"/><ellipse cx="18.1" cy="83.6" rx="2.5" ry="2.4" fill="#6e8a52" opacity="0.79"/><ellipse cx="23.8" cy="24.2" rx="1.9" ry="2.0" fill="#7f9a60" opacity="0.93"/><ellipse cx="14.2" cy="80.6" rx="1.3" ry="1.4" fill="#6e8a52" opacity="0.86"/><ellipse cx="17.9" cy="8.2" rx="2.3" ry="2.0" fill="#56703d" opacity="0.81"/><ellipse cx="28.5" cy="3.9" rx="2.8" ry="2.2" fill="#4f6238" opacity="0.99"/><ellipse cx="23.1" cy="38.3" rx="2.0" ry="2.4" fill="#3d4c2c" opacity="0.71"/><ellipse cx="12.3" cy="47.5" rx="2.6" ry="2.1" fill="#3d4c2c" opacity="0.76"/><ellipse cx="22.7" cy="61.9" rx="2.0" ry="1.8" fill="#56703d" opacity="0.88"/><ellipse cx="10.2" cy="24.6" rx="2.0" ry="2.4" fill="#6e8a52" opacity="0.93"/><ellipse cx="29.0" cy="63.8" rx="2.7" ry="2.8" fill="#56703d" opacity="0.94"/><ellipse cx="27.9" cy="88.3" rx="2.7" ry="3.0" fill="#4f6238" opacity="0.94"/><ellipse cx="25.3" cy="24.3" rx="1.5" ry="1.1" fill="#4f6238" opacity="0.81"/><ellipse cx="18.4" cy="17.4" rx="2.6" ry="2.0" fill="#4f6238" opacity="1.0"/><ellipse cx="10.4" cy="56.7" rx="2.6" ry="2.2" fill="#7f9a60" opacity="0.96"/><ellipse cx="18.7" cy="18.0" rx="1.5" ry="1.1" fill="#3d4c2c" opacity="0.85"/><ellipse cx="15.8" cy="16.4" rx="2.4" ry="2.4" fill="#3d4c2c" opacity="0.82"/><ellipse cx="24.7" cy="34.7" rx="2.4" ry="1.9" fill="#6e8a52" opacity="0.9"/><ellipse cx="27.6" cy="54.0" rx="2.0" ry="1.6" fill="#7f9a60" opacity="0.87"/><ellipse cx="28.3" cy="5.8" rx="2.1" ry="1.7" fill="#6e8a52" opacity="0.76"/><ellipse cx="14.2" cy="81.5" rx="2.7" ry="3.1" fill="#3d4c2c" opacity="0.98"/><ellipse cx="25.5" cy="44.8" rx="2.6" ry="2.6" fill="#6e8a52" opacity="0.97"/><ellipse cx="12.1" cy="97.8" rx="2.0" ry="1.3" fill="#6e8a52" opacity="0.89"/><ellipse cx="9.0" cy="46.2" rx="1.4" ry="1.6" fill="#7f9a60" opacity="0.8"/><ellipse cx="14.0" cy="29.0" rx="1.7" ry="1.7" fill="#4f6238" opacity="0.89"/><ellipse cx="23.5" cy="66.1" rx="2.8" ry="2.7" fill="#7f9a60" opacity="0.79"/><ellipse cx="29.8" cy="13.1" rx="2.8" ry="2.5" fill="#7f9a60" opacity="0.79"/><ellipse cx="8.3" cy="85.4" rx="1.8" ry="1.9" fill="#7f9a60" opacity="0.99"/><ellipse cx="24.7" cy="35.1" rx="2.5" ry="1.8" fill="#7f9a60" opacity="0.79"/><ellipse cx="21.8" cy="44.3" rx="1.6" ry="1.9" fill="#6e8a52" opacity="0.77"/><ellipse cx="16.9" cy="5.4" rx="2.3" ry="1.4" fill="#4f6238" opacity="0.98"/><ellipse cx="23.4" cy="73.1" rx="2.4" ry="2.1" fill="#56703d" opacity="0.7"/><ellipse cx="16.8" cy="24.8" rx="2.7" ry="2.6" fill="#6e8a52" opacity="0.86"/><ellipse cx="12.6" cy="16.7" rx="3.0" ry="2.6" fill="#7f9a60" opacity="0.86"/><ellipse cx="15.1" cy="98.1" rx="1.4" ry="1.2" fill="#3d4c2c" opacity="1.0"/><ellipse cx="24.9" cy="37.7" rx="2.0" ry="2.4" fill="#6e8a52" opacity="0.93"/><ellipse cx="28.7" cy="60.7" rx="2.7" ry="1.9" fill="#56703d" opacity="0.94"/><ellipse cx="23.7" cy="23.3" rx="1.8" ry="1.5" fill="#4f6238" opacity="0.96"/><ellipse cx="26.5" cy="50.3" rx="1.3" ry="1.2" fill="#6e8a52" opacity="0.75"/><ellipse cx="17.8" cy="41.1" rx="2.3" ry="2.5" fill="#3d4c2c" opacity="0.96"/><ellipse cx="11.8" cy="31.2" rx="1.4" ry="1.1" fill="#56703d" opacity="0.83"/><ellipse cx="28.8" cy="62.9" rx="2.0" ry="1.2" fill="#6e8a52" opacity="0.92"/><ellipse cx="14.1" cy="26.1" rx="1.7" ry="1.7" fill="#7f9a60" opacity="0.92"/><ellipse cx="21.5" cy="84.4" rx="2.6" ry="2.9" fill="#3d4c2c" opacity="0.76"/><ellipse cx="10.9" cy="68.7" rx="2.5" ry="2.9" fill="#56703d" opacity="0.82"/><ellipse cx="14.7" cy="14.7" rx="1.4" ry="0.9" fill="#6e8a52" opacity="0.74"/><ellipse cx="15.5" cy="9.2" rx="2.9" ry="2.8" fill="#56703d" opacity="0.74"/><ellipse cx="9.7" cy="64.6" rx="2.1" ry="2.3" fill="#3d4c2c" opacity="0.89"/><ellipse cx="21.3" cy="6.6" rx="1.7" ry="1.4" fill="#56703d" opacity="0.94"/><ellipse cx="25.4" cy="98.1" rx="2.4" ry="2.9" fill="#4f6238" opacity="0.87"/><ellipse cx="9.2" cy="0.0" rx="1.8" ry="1.4" fill="#56703d" opacity="0.82"/><ellipse cx="18.9" cy="99.9" rx="1.4" ry="0.9" fill="#7f9a60" opacity="0.9"/><ellipse cx="9.1" cy="78.2" rx="2.1" ry="1.8" fill="#6e8a52" opacity="0.74"/><ellipse cx="24.9" cy="54.8" rx="2.1" ry="1.3" fill="#7f9a60" opacity="0.91"/><ellipse cx="9.6" cy="28.7" rx="2.0" ry="2.1" fill="#6e8a52" opacity="0.71"/><ellipse cx="29.7" cy="38.2" rx="2.3" ry="1.4" fill="#6e8a52" opacity="0.81"/><ellipse cx="15.3" cy="9.3" rx="2.8" ry="2.8" fill="#6e8a52" opacity="0.88"/><ellipse cx="17.8" cy="99.3" rx="2.1" ry="1.8" fill="#3d4c2c" opacity="0.85"/><ellipse cx="13.9" cy="42.2" rx="1.5" ry="1.1" fill="#3d4c2c" opacity="0.76"/><ellipse cx="8.9" cy="46.7" rx="1.6" ry="1.1" fill="#7f9a60" opacity="0.93"/><ellipse cx="9.1" cy="52.9" rx="2.2" ry="2.0" fill="#56703d" opacity="0.95"/><ellipse cx="29.8" cy="24.4" rx="1.3" ry="1.2" fill="#3d4c2c" opacity="0.94"/><ellipse cx="8.8" cy="53.5" rx="3.0" ry="2.7" fill="#3d4c2c" opacity="0.8"/><ellipse cx="21.1" cy="40.1" rx="2.8" ry="2.1" fill="#6e8a52" opacity="0.96"/><ellipse cx="25.8" cy="54.1" rx="2.7" ry="2.3" fill="#6e8a52" opacity="0.79"/><ellipse cx="29.5" cy="61.5" rx="1.7" ry="1.6" fill="#3d4c2c" opacity="1.0"/><ellipse cx="22.0" cy="8.2" rx="1.5" ry="1.6" fill="#7f9a60" opacity="0.85"/><ellipse cx="17.0" cy="33.7" rx="1.8" ry="1.1" fill="#4f6238" opacity="0.75"/><ellipse cx="9.7" cy="34.1" rx="1.5" ry="1.2" fill="#3d4c2c" opacity="0.84"/><ellipse cx="20.4" cy="48.4" rx="2.1" ry="1.5" fill="#7f9a60" opacity="0.91"/><ellipse cx="29.1" cy="24.7" rx="2.3" ry="2.7" fill="#4f6238" opacity="0.91"/><ellipse cx="26.3" cy="96.0" rx="1.3" ry="0.8" fill="#3d4c2c" opacity="0.74"/><ellipse cx="28.7" cy="82.8" rx="1.7" ry="1.7" fill="#56703d" opacity="1.0"/><ellipse cx="9.4" cy="53.1" rx="1.6" ry="1.4" fill="#3d4c2c" opacity="0.9"/><ellipse cx="9.3" cy="62.7" rx="2.2" ry="2.6" fill="#3d4c2c" opacity="0.95"/><ellipse cx="11.6" cy="87.1" rx="2.3" ry="2.4" fill="#7f9a60" opacity="0.75"/><ellipse cx="24.5" cy="75.4" rx="2.0" ry="2.4" fill="#6e8a52" opacity="0.93"/><ellipse cx="16.5" cy="87.9" rx="1.3" ry="1.1" fill="#56703d" opacity="0.86"/><ellipse cx="17.3" cy="68.9" rx="1.8" ry="1.3" fill="#4f6238" opacity="0.7"/><ellipse cx="21.5" cy="36.9" rx="2.3" ry="1.4" fill="#3d4c2c" opacity="0.89"/><polygon points="77,18 84,18 84,86 78,86" fill="#9a9488" opacity="1"/><ellipse cx="99.4" cy="58.4" rx="1.5" ry="1.8" fill="#3d4c2c" opacity="0.78"/><ellipse cx="89.8" cy="37.1" rx="1.9" ry="1.5" fill="#3d4c2c" opacity="0.71"/><ellipse cx="91.6" cy="47.2" rx="1.6" ry="1.1" fill="#3d4c2c" opacity="0.76"/><ellipse cx="90.2" cy="78.7" rx="2.4" ry="2.2" fill="#3d4c2c" opacity="0.75"/><ellipse cx="91.3" cy="73.0" rx="2.3" ry="2.7" fill="#6e8a52" opacity="0.73"/><ellipse cx="93.1" cy="52.1" rx="2.6" ry="2.5" fill="#3d4c2c" opacity="0.73"/><ellipse cx="96.0" cy="43.4" rx="1.6" ry="1.2" fill="#6e8a52" opacity="0.85"/><ellipse cx="96.8" cy="49.2" rx="1.9" ry="2.0" fill="#6e8a52" opacity="0.93"/><ellipse cx="98.9" cy="23.9" rx="2.2" ry="1.4" fill="#4f6238" opacity="0.77"/><ellipse cx="92.4" cy="71.8" rx="2.0" ry="1.8" fill="#3d4c2c" opacity="0.72"/><ellipse cx="91.7" cy="67.4" rx="1.3" ry="0.9" fill="#6e8a52" opacity="0.75"/><ellipse cx="84.3" cy="36.8" rx="2.9" ry="2.6" fill="#4f6238" opacity="0.94"/><ellipse cx="96.1" cy="54.1" rx="1.8" ry="1.1" fill="#4f6238" opacity="0.95"/><ellipse cx="88.0" cy="16.1" rx="1.9" ry="1.7" fill="#6e8a52" opacity="0.97"/><ellipse cx="87.2" cy="97.0" rx="1.6" ry="1.0" fill="#4f6238" opacity="0.71"/><ellipse cx="95.8" cy="18.1" rx="1.5" ry="1.0" fill="#4f6238" opacity="0.75"/><ellipse cx="97.7" cy="52.1" rx="2.0" ry="2.2" fill="#4f6238" opacity="0.9"/><ellipse cx="97.6" cy="50.7" rx="2.6" ry="1.7" fill="#3d4c2c" opacity="0.83"/><ellipse cx="89.8" cy="31.5" rx="2.0" ry="2.1" fill="#3d4c2c" opacity="0.99"/><ellipse cx="84.3" cy="65.9" rx="2.5" ry="2.9" fill="#6e8a52" opacity="0.81"/><ellipse cx="89.5" cy="54.9" rx="2.8" ry="3.2" fill="#6e8a52" opacity="0.81"/><ellipse cx="89.2" cy="15.3" rx="2.0" ry="1.9" fill="#6e8a52" opacity="0.99"/><ellipse cx="89.0" cy="34.4" rx="1.5" ry="1.3" fill="#4f6238" opacity="0.9"/><ellipse cx="91.2" cy="95.9" rx="2.9" ry="3.3" fill="#3d4c2c" opacity="0.73"/><ellipse cx="91.1" cy="93.5" rx="2.5" ry="2.6" fill="#3d4c2c" opacity="0.99"/><ellipse cx="95.5" cy="50.1" rx="1.4" ry="0.9" fill="#3d4c2c" opacity="0.74"/><ellipse cx="96.4" cy="46.6" rx="2.0" ry="2.2" fill="#3d4c2c" opacity="1.0"/><ellipse cx="90.2" cy="52.2" rx="2.2" ry="2.6" fill="#3d4c2c" opacity="0.93"/><ellipse cx="95.7" cy="68.0" rx="2.7" ry="2.7" fill="#4f6238" opacity="0.96"/><ellipse cx="100.0" cy="74.9" rx="2.4" ry="2.9" fill="#3d4c2c" opacity="0.73"/><ellipse cx="87.0" cy="64.3" rx="2.8" ry="3.1" fill="#4f6238" opacity="0.88"/><ellipse cx="85.7" cy="54.3" rx="2.6" ry="1.8" fill="#3d4c2c" opacity="0.97"/><ellipse cx="98.2" cy="9.1" rx="2.4" ry="2.0" fill="#6e8a52" opacity="0.98"/><ellipse cx="85.3" cy="18.6" rx="2.1" ry="1.9" fill="#4f6238" opacity="0.86"/><ellipse cx="89.0" cy="39.9" rx="1.3" ry="1.1" fill="#3d4c2c" opacity="0.84"/><ellipse cx="99.7" cy="90.4" rx="2.8" ry="2.4" fill="#4f6238" opacity="0.93"/><ellipse cx="94.0" cy="80.5" rx="3.0" ry="2.2" fill="#6e8a52" opacity="0.98"/><ellipse cx="87.9" cy="21.7" rx="1.2" ry="0.9" fill="#6e8a52" opacity="0.83"/><ellipse cx="84.2" cy="43.4" rx="2.3" ry="2.3" fill="#4f6238" opacity="0.89"/><ellipse cx="96.2" cy="24.6" rx="1.4" ry="1.2" fill="#3d4c2c" opacity="0.88"/><polygon points="22,84 50,82 74,84 76,92 26,94" fill="#e2dccf" opacity="1"/><ellipse cx="46" cy="60.5" rx="2.4" ry="2.9" fill="#d6b09a" opacity="1"/><polygon points="41.5,64 51,64 51,84 40.5,84" fill="#e8e6e8" opacity="1"/><ellipse cx="53" cy="57" rx="2.5" ry="3.6" fill="#2a211f" opacity="1"/><ellipse cx="53" cy="57.5" rx="2" ry="2.6" fill="#d6b09a" opacity="1"/><ellipse cx="59.5" cy="61" rx="2.8" ry="4.6" fill="#c7a37c" opacity="1"/><ellipse cx="59.5" cy="60.5" rx="2.1" ry="2.8" fill="#d6b09a" opacity="1"/><polygon points="51,64 64,65 70,88 50,90" fill="#cda4a7" opacity="1"/></g></svg>
<div class="t" style="left:6px;top:239px;font-size:10.95px;color:#858585">001_©Artistic Images - E. Homa...</div>
<div class="t" style="left:6px;top:415px;font-size:10.95px;color:#858585">048_©Artistic Images - E. Homa...</div>
<div class="a" style="left:0;top:0;width:1px;height:956px;background:#e6d6ca"></div>
<svg style="left:0;top:0" width="12" height="12" viewBox="0 0 12 12"><path d="M0 0 H11 A11 11 0 0 0 0 11 Z" fill="#e9d9cd"/></svg>
<svg style="left:0;top:944px" width="12" height="12" viewBox="0 0 12 12"><path d="M0 12 H11 A11 11 0 0 1 0 1 Z" fill="#e6d3c6"/></svg>
<svg style="left:1576px;top:0" width="12" height="12" viewBox="0 0 12 12"><path d="M12 0 H1 A11 11 0 0 1 12 11 Z" fill="#4d4f4e"/></svg>
<svg style="left:1576px;top:944px" width="12" height="12" viewBox="0 0 12 12"><path d="M12 12 H1 A11 11 0 0 0 12 1 Z" fill="#5a5550"/></svg>
<svg style="left:14px;top:35px" width="20" height="20" viewBox="0 0 20 20"><circle cx="10" cy="10" r="8.6" fill="none" stroke="#5f9de9" stroke-width="1.25"/><circle cx="6.9" cy="7.6" r="0.95" fill="#5f9de9"/><circle cx="13.1" cy="7.6" r="0.95" fill="#5f9de9"/><path d="M5.6 12.2 Q10 15.6 14.4 12.2" fill="none" stroke="#5f9de9" stroke-width="1.25" stroke-linecap="round"/></svg>
<svg style="left:62px;top:35px" width="20" height="20" viewBox="0 0 20 20"><circle cx="10" cy="10" r="8.6" fill="none" stroke="#7b7b7b" stroke-width="1.25"/><circle cx="6.9" cy="7.6" r="0.95" fill="#7b7b7b"/><circle cx="13.1" cy="7.6" r="0.95" fill="#7b7b7b"/><line x1="5.8" y1="12.2" x2="14.2" y2="12.2" stroke="#7b7b7b" stroke-width="1.25" stroke-linecap="round"/></svg>
<svg style="left:110px;top:35px" width="20" height="20" viewBox="0 0 20 20"><circle cx="10" cy="10" r="8.6" fill="none" stroke="#7b7b7b" stroke-width="1.25"/><circle cx="6.9" cy="7.6" r="0.95" fill="#7b7b7b"/><circle cx="13.1" cy="7.6" r="0.95" fill="#7b7b7b"/><path d="M6.3 13.6 Q10 10.6 13.7 13.6" fill="none" stroke="#7b7b7b" stroke-width="1.25" stroke-linecap="round"/></svg>
<div class="t" style="left:4px;top:57px;width:40px;text-align:center;font-size:12.2px;font-weight:bold;color:#4378c4">2</div>
<div class="t" style="left:52px;top:57px;width:40px;text-align:center;font-size:12.2px;font-weight:bold;color:#4a4a4a">47</div>
<div class="t" style="left:100px;top:57px;width:40px;text-align:center;font-size:12.2px;font-weight:bold;color:#4a4a4a">6</div>
<svg style="left:214px;top:43px" width="24" height="16" viewBox="0 0 24 16"><rect x="1.7" y="1.4" width="20.6" height="13" rx="1.3" fill="none" stroke="#6e6e6e" stroke-width="1.3"/><path d="M2.2 2 L12 9.2 L21.8 2 M2.2 14 L9.3 7.4 M21.8 14 L14.7 7.4" fill="none" stroke="#6e6e6e" stroke-width="1.2"/></svg>
<svg style="left:261px;top:39px" width="26" height="24" viewBox="0 0 26 24"><rect x="5.5" y="1.3" width="18" height="11.5" rx="1" fill="#e5e5e5" stroke="#6e6e6e" stroke-width="1.3"/><rect x="2.2" y="7.2" width="18.2" height="11.8" rx="1" fill="#e5e5e5" stroke="#6e6e6e" stroke-width="1.3"/><path d="M9 19 L13.6 19 L15.2 22.6 L7.4 22.6 Z" fill="#6e6e6e"/></svg>
<svg style="left:312px;top:39px" width="20" height="24" viewBox="0 0 20 24"><rect x="2.4" y="6.3" width="7.6" height="11" rx="1.2" fill="none" stroke="#6e6e6e" stroke-width="1.3"/><path d="M10 6.3 L16.8 1.4 L16.8 22.2 L10 17.3" fill="none" stroke="#6e6e6e" stroke-width="1.3" stroke-linejoin="round"/></svg>
<svg style="left:358px;top:39px" width="24" height="24" viewBox="0 0 24 24"><rect x="1.2" y="1.3" width="21.5" height="21" fill="none" stroke="#b9b9b9" stroke-width="1.2" stroke-dasharray="2.2 1.6"/><circle cx="12.2" cy="8.4" r="1.8" fill="none" stroke="#b9b9b9" stroke-width="1.1"/><path d="M1.5 16.6 L6 11.5 L13.2 21.5 M11 17.8 L16 12.6 L22 18.8" fill="none" stroke="#b9b9b9" stroke-width="1.2"/></svg>
<svg style="left:989px;top:41px" width="26" height="20" viewBox="0 0 26 20"><rect x="1.7" y="1.5" width="22.8" height="16.5" rx="0.6" fill="none" stroke="#828282" stroke-width="1.3"/><circle cx="13.8" cy="5.5" r="1.7" fill="none" stroke="#828282" stroke-width="1.1"/><path d="M1.8 13.8 L8 7 L17.2 17.7 M14 13.5 L18 9.3 L24.3 15.6" fill="none" stroke="#828282" stroke-width="1.2"/></svg>
<svg style="left:1108px;top:40px" width="26" height="22" viewBox="0 0 26 22"><path d="M2.3 1.3 H21.8 Q23.6 1.3 23.6 3 Q22.6 5 23.4 7 Q24.2 9.5 23 11.5 Q22.4 14 23.5 16 Q24.2 19.5 21.8 19.8 H14.5 Q13 21.4 11.5 19.8 H3.8 Q1.3 19.6 1.6 17 Q2.5 14.5 1.6 11 Q1 7 1.7 4 Z" fill="none" stroke="#828282" stroke-width="1.2"/><rect x="4.7" y="4.1" width="7.5" height="13" fill="none" stroke="#828282" stroke-width="1.1"/><rect x="14.4" y="4.1" width="6.3" height="5.2" fill="none" stroke="#828282" stroke-width="1.1"/><rect x="14.4" y="11.6" width="6.3" height="5.5" fill="none" stroke="#828282" stroke-width="1.1"/></svg>
<svg style="left:1230px;top:39px" width="40" height="24" viewBox="0 0 40 24"><path d="M6.8 5.5 Q8.2 1.6 13 1.6 H27 Q31.8 1.6 33.2 5.5" fill="none" stroke="#828282" stroke-width="1.3"/><path d="M10 12.3 Q10 6.8 6.3 6.8 Q2.2 6.8 2.2 10.8 Q2.2 13.5 4.9 14.5 L5 19.3 Q5.3 21.6 8.4 21.6 H31.6 Q34.7 21.6 35 19.3 L35.1 14.5 Q37.8 13.5 37.8 10.8 Q37.8 6.8 33.7 6.8 Q30 6.8 30 12.3" fill="none" stroke="#828282" stroke-width="1.3"/><path d="M5.5 14.2 Q5.6 12.6 7.8 12.6 H32.2 Q34.4 12.6 34.5 14.2" fill="none" stroke="#828282" stroke-width="1.3"/><path d="M16 2 V12.6 M24.5 2 V12.6" stroke="#828282" stroke-width="1.3"/></svg>
<svg style="left:1354px;top:41px" width="27" height="20" viewBox="0 0 27 20"><path d="M2.3 4.2 V18 H24.7 V4.2" fill="none" stroke="#3d8ee9" stroke-width="1.2" opacity="0.85"/><path d="M4 2.2 Q9 0.8 13.5 3.4 V16.8 Q9 14.4 4 15.8 Z" fill="none" stroke="#3d8ee9" stroke-width="1.3"/><path d="M23 2.2 Q18 0.8 13.5 3.4 V16.8 Q18 14.4 23 15.8 Z" fill="none" stroke="#3d8ee9" stroke-width="1.3"/></svg>
<svg style="left:1467px;top:40px" width="26" height="22" viewBox="0 0 26 22"><path d="M1 2.3 H25" stroke="#828282" stroke-width="1.3"/><path d="M3.3 2.3 V15.9 H22.6 V2.3" fill="none" stroke="#828282" stroke-width="1.3"/><path d="M10.3 6 L16.3 9.1 L10.3 12.2 Z" fill="none" stroke="#828282" stroke-width="1.2" stroke-linejoin="round"/><path d="M13 15.9 V19.5 M9.5 19.5 H16.5" stroke="#828282" stroke-width="1.3"/></svg>
<svg style="left:379.5px;top:98px" width="9" height="6.8" viewBox="0 0 9 6.8"><path d="M0 0 H9 L4.5 6.8 Z" fill="#555"/></svg>
<svg style="left:582.5px;top:98px" width="9" height="6.8" viewBox="0 0 9 6.8"><path d="M0 0 H9 L4.5 6.8 Z" fill="#555"/></svg>
<svg style="left:1464px;top:91px" width="19" height="18" viewBox="0 0 19 18"><rect x="2.3" y="2.3" width="14.3" height="13.4" fill="none" stroke="#3d8ee9" stroke-width="2.4"/><path d="M9.45 2.3 V15.7" stroke="#3d8ee9" stroke-width="1.8"/></svg>
<svg style="left:1512px;top:92px" width="17" height="16" viewBox="0 0 17 16"><rect x="0" y="0.4" width="17" height="15.4" fill="#7a7a7a"/><path d="M0.5 3.4 H16.5 M0.5 12.6 H16.5" stroke="#e4e4e4" stroke-width="0.9" stroke-dasharray="2.4 1.2"/><rect x="2.7" y="5.8" width="4.6" height="4.2" fill="#e6e6e6"/><rect x="9" y="5.8" width="5" height="4.2" fill="#e6e6e6"/></svg>
<svg style="left:335.5px;top:649.5px" width="9" height="6.2" viewBox="0 0 9 6.2"><path d="M0 0 H9 L4.5 6.2 Z" fill="#a6a6a6"/></svg>
<svg style="left:517px;top:649.5px" width="9.5" height="6.2" viewBox="0 0 9.5 6.2"><path d="M0 0 H9.5 L4.75 6.2 Z" fill="#a6a6a6"/></svg>
<svg style="left:1423px;top:649.5px" width="9.5" height="6.2" viewBox="0 0 9.5 6.2"><path d="M0 0 H9.5 L4.75 6.2 Z" fill="#a6a6a6"/></svg>
<svg style="left:1453px;top:644px" width="17" height="16" viewBox="0 0 17 16"><rect x="0" y="0" width="16.5" height="15.5" fill="#bcbcbc"/><path d="M3 2.8 Q10 2.5 11.5 11 M9.3 9.6 L11.5 12.6 L13.8 9.6" fill="none" stroke="#d6d6d6" stroke-width="1.6"/></svg>
<svg style="left:1486px;top:644px" width="17" height="16" viewBox="0 0 17 16"><rect x="0" y="0" width="16.8" height="15.5" fill="#bcbcbc"/><path d="M3 2.8 Q10 2.5 11.5 11" fill="none" stroke="#d6d6d6" stroke-width="1.6"/><path d="M2.8 13.3 L14.2 2" stroke="#fff" stroke-width="1.7" stroke-linecap="round"/></svg>
<svg style="left:1518px;top:641.5px" width="11" height="8" viewBox="0 0 11 8"><path d="M0.3 7.4 H10.3 L5.3 0.4 Z" fill="#7b7b7b"/></svg>
<svg style="left:1518px;top:654.5px" width="11" height="8" viewBox="0 0 11 8"><path d="M0.3 0.5 H10.3 L5.3 7.3 Z" fill="#afafaf"/></svg>
<svg style="left:1556px;top:97px" width="24" height="24" viewBox="0 0 24 24"><rect x="0.0" y="0.0" width="6.8" height="6.8" rx="0.8" fill="#3d8ee9"/><rect x="0.0" y="8.6" width="6.8" height="6.8" rx="0.8" fill="#3d8ee9"/><rect x="0.0" y="17.2" width="6.8" height="6.8" rx="0.8" fill="#3d8ee9"/><rect x="8.6" y="0.0" width="6.8" height="6.8" rx="0.8" fill="#3d8ee9"/><rect x="8.6" y="8.6" width="6.8" height="6.8" rx="0.8" fill="#3d8ee9"/><rect x="8.6" y="17.2" width="6.8" height="6.8" rx="0.8" fill="#3d8ee9"/><rect x="17.2" y="0.0" width="6.8" height="6.8" rx="0.8" fill="#3d8ee9"/><rect x="17.2" y="8.6" width="6.8" height="6.8" rx="0.8" fill="#3d8ee9"/><rect x="17.2" y="17.2" width="6.8" height="6.8" rx="0.8" fill="#3d8ee9"/></svg>
<svg style="left:1555px;top:146px" width="26" height="20" viewBox="0 0 26 20"><path d="M1.4 10.2 Q13 -1.6 24.6 10.2 Q13 22 1.4 10.2 Z" fill="none" stroke="#6e6e6e" stroke-width="1.3"/><circle cx="13" cy="10.2" r="4.7" fill="none" stroke="#6e6e6e" stroke-width="1.3"/><circle cx="13.2" cy="10.4" r="1.2" fill="#6e6e6e"/></svg>
<svg style="left:1555px;top:192px" width="26" height="26" viewBox="0 0 26 26"><path d="M6 1.5 V19.5 H21.5 V25 M1 6 H19.5 V19.5" fill="none" stroke="#6e6e6e" stroke-width="1.9"/><path d="M21.5 19.5 H25.5" stroke="#6e6e6e" stroke-width="1.3"/></svg>
<svg style="left:1555px;top:244px" width="26" height="17" viewBox="0 0 26 17"><rect x="1.5" y="2" width="23" height="12.8" rx="1" fill="none" stroke="#c2c2c2" stroke-width="1.5"/><path d="M6 2 V7 M10 2 V5.5 M14 2 V7 M18 2 V5.5 M22 2 V7" stroke="#c2c2c2" stroke-width="1.3"/></svg>
<svg style="left:1555px;top:280px" width="32" height="36" viewBox="0 0 32 36"><path d="M25 1 H31 V7 Z" fill="#bdbdbd"/><rect x="1.9" y="9.6" width="22.4" height="22.6" rx="2.6" fill="none" stroke="#6e6e6e" stroke-width="1.7"/><path d="M9.6 15.2 L18.2 20.9 L9.6 26.6 Z" fill="#6e6e6e" stroke="#6e6e6e" stroke-width="1.2" stroke-linejoin="round"/></svg>
<svg style="left:1555px;top:346px" width="26" height="25" viewBox="0 0 26 25"><rect x="1.5" y="1.6" width="23" height="22" fill="none" stroke="#c4c4c4" stroke-width="2.2"/><rect x="4.7" y="4.6" width="16.6" height="4.6" fill="#c4c4c4"/><rect x="4.7" y="11.6" width="7.2" height="9.2" fill="#c4c4c4"/><rect x="14" y="11.6" width="7.3" height="9.2" fill="#c4c4c4"/></svg>
<svg style="left:1555px;top:395px" width="26" height="25" viewBox="0 0 26 25"><rect x="1.5" y="1.5" width="14" height="14" fill="#cdcdcd"/><g transform="rotate(-12 14 12.5)"><rect x="6" y="4.6" width="16.5" height="16.5" fill="#e5e5e5" stroke="#c2c2c2" stroke-width="2.2"/><rect x="10" y="8.5" width="8.5" height="8.5" fill="#c9c9c9"/></g></svg>
<svg style="left:1557px;top:442px" width="22" height="26" viewBox="0 0 22 26"><path d="M1.5 19.5 V12 Q1.5 5.5 8 5.5 H15.5" fill="none" stroke="#c2c2c2" stroke-width="1.5"/><path d="M12.2 1.8 L16 5.5 L12.2 9.2" fill="none" stroke="#c2c2c2" stroke-width="1.5"/><rect x="8.6" y="12.7" width="11.4" height="11" rx="2.2" fill="none" stroke="#c2c2c2" stroke-width="1.5"/></svg>
<svg style="left:1555px;top:494px" width="26" height="18" viewBox="0 0 26 18"><rect x="1.5" y="1.5" width="23" height="14.5" fill="none" stroke="#c4c4c4" stroke-width="1.5"/><path d="M13 1.5 V16" stroke="#c4c4c4" stroke-width="1.3"/><path d="M5 8.8 H21 M7.8 6 L5 8.8 L7.8 11.6 M18.2 6 L21 8.8 L18.2 11.6" fill="none" stroke="#c4c4c4" stroke-width="1.8"/></svg>
<svg style="left:1555px;top:547px" width="26" height="27" viewBox="0 0 26 27"><rect x="2.4" y="2.3" width="16.6" height="17" rx="1" fill="#e5e5e5" stroke="#c4c4c4" stroke-width="1.5"/><rect x="6.8" y="6.2" width="17" height="18.2" rx="1" fill="#e5e5e5" stroke="#c4c4c4" stroke-width="1.5"/><path d="M15.3 11.5 V19 M11.5 15.3 H19" stroke="#c4c4c4" stroke-width="1.3"/></svg>
<svg style="left:1557px;top:596px" width="22" height="26" viewBox="0 0 22 26"><path d="M2.5 2.3 H13.5 L19.6 8.4 V23.2 H2.5 Z" fill="none" stroke="#c4c4c4" stroke-width="1.5" stroke-linejoin="round"/><path d="M13.5 2.3 V8.4 H19.6" fill="#c4c4c4" stroke="#c4c4c4" stroke-width="1.2"/><path d="M5.5 9.3 H10 M5.5 13 H16.5 M5.5 16.5 H16.5 M5.5 20 H16.5" stroke="#c4c4c4" stroke-width="1.4"/></svg>
<svg style="left:1558px;top:656px" width="19" height="19" viewBox="0 0 19 19"><path d="M1.3 1.3 L17.8 9.5 L1.3 17.7 Z" fill="#bfbfbf"/></svg>
<svg style="left:1558px;top:704px" width="19" height="19" viewBox="0 0 19 19"><path d="M17.8 1.3 L1.3 9.5 L17.8 17.7 Z" fill="#bfbfbf"/></svg>
<svg style="left:152px;top:84px" width="12" height="10" viewBox="0 0 12 10"><path d="M1 1.8 Q3.5 0.6 6 2 Q8.5 0.6 11 1.8 V8.3 H1 Z M6 2 V8.3" fill="none" stroke="#8a8a8a" stroke-width="1.1"/></svg>
<svg style="left:152px;top:221px" width="11" height="12" viewBox="0 0 11 12"><path d="M1.3 1 H7.2 L9.8 3.6 V11 H1.3 Z" fill="#e8e8e8" stroke="#8a8a8a" stroke-width="1"/><path d="M3 5 H8 M3 7 H8 M3 9 H8" stroke="#8a8a8a" stroke-width="1"/></svg>
<svg style="left:12px;top:923px" width="25" height="25" viewBox="0 0 25 25"><rect x="0.0" y="0.0" width="4.6" height="4.6" fill="#6e6e6e"/><rect x="7.0" y="0.5" width="3.6" height="3.6" fill="none" stroke="#7a7a7a" stroke-width="1"/><rect x="13.5" y="0.5" width="3.6" height="3.6" fill="none" stroke="#7a7a7a" stroke-width="1"/><rect x="20.0" y="0.5" width="3.6" height="3.6" fill="none" stroke="#7a7a7a" stroke-width="1"/><rect x="0.0" y="6.5" width="4.6" height="4.6" fill="#6e6e6e"/><rect x="7.0" y="7.0" width="3.6" height="3.6" fill="none" stroke="#7a7a7a" stroke-width="1"/><rect x="13.5" y="7.0" width="3.6" height="3.6" fill="none" stroke="#7a7a7a" stroke-width="1"/><rect x="20.0" y="7.0" width="3.6" height="3.6" fill="none" stroke="#7a7a7a" stroke-width="1"/><rect x="0.0" y="13.0" width="4.6" height="4.6" fill="#6e6e6e"/><rect x="7.0" y="13.5" width="3.6" height="3.6" fill="none" stroke="#7a7a7a" stroke-width="1"/><rect x="13.5" y="13.5" width="3.6" height="3.6" fill="none" stroke="#7a7a7a" stroke-width="1"/><rect x="20.0" y="13.5" width="3.6" height="3.6" fill="none" stroke="#7a7a7a" stroke-width="1"/><rect x="0.0" y="19.5" width="4.6" height="4.6" fill="#6e6e6e"/><rect x="7.0" y="20.0" width="3.6" height="3.6" fill="none" stroke="#7a7a7a" stroke-width="1"/><rect x="13.5" y="20.0" width="3.6" height="3.6" fill="none" stroke="#7a7a7a" stroke-width="1"/><rect x="20.0" y="20.0" width="3.6" height="3.6" fill="none" stroke="#7a7a7a" stroke-width="1"/></svg>
<svg style="left:59px;top:921px" width="26" height="27" viewBox="0 0 26 27"><path d="M1.8 2.4 H23 L15.5 12.6 V22.6 L11.2 24.4 V12.6 Z" fill="none" stroke="#6e6e6e" stroke-width="1.3" stroke-linejoin="round"/></svg>
<svg style="left:282px;top:375px" width="42" height="62" viewBox="0 0 42 62"><g transform="translate(3.5 3)"><path d="M0 0 L0 44 L10.5 34.5 L18 52.5 L25.8 49.2 L18.2 31.8 L33.5 33 Z" fill="#000" stroke="#fff" stroke-width="2.8" stroke-linejoin="round"/></g></svg>
</body></html>
